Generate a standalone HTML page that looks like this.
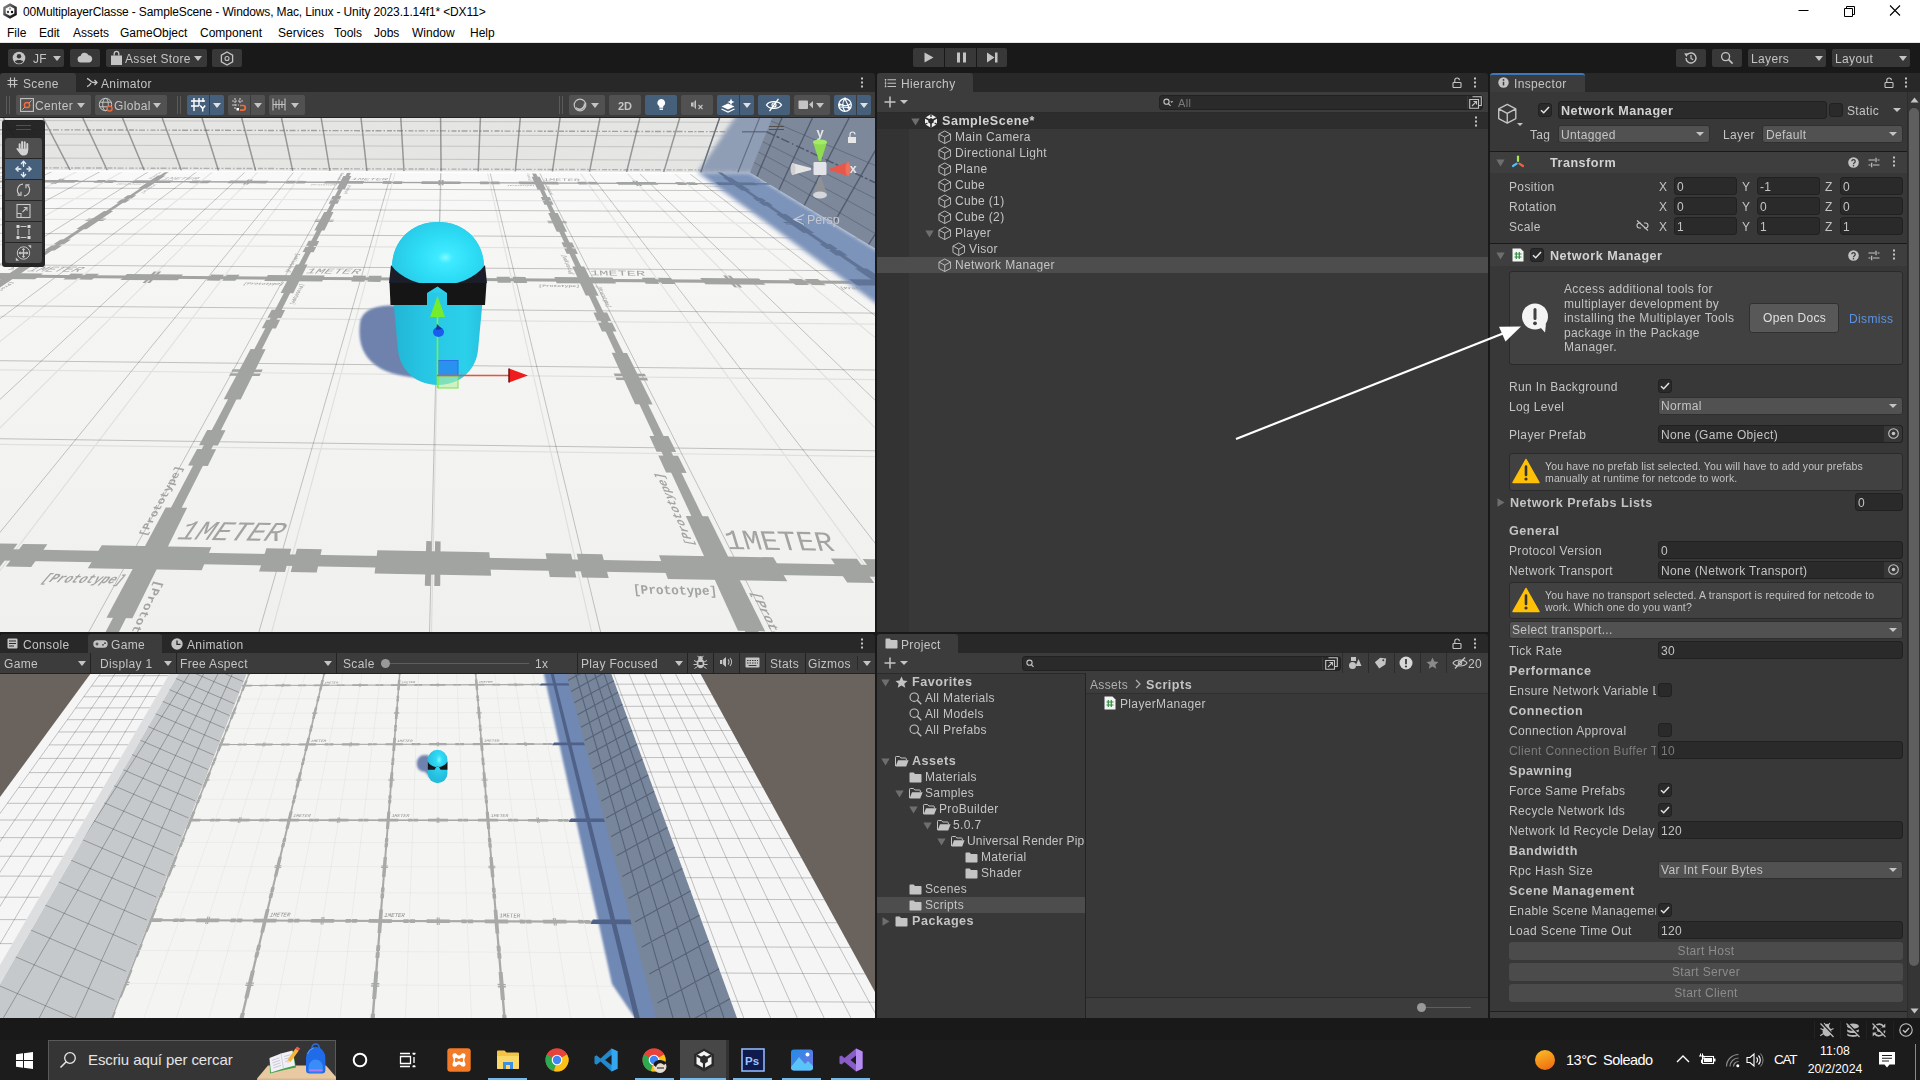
<!DOCTYPE html>
<html lang="en"><head><meta charset="utf-8"><title>Unity</title>
<style>
*{box-sizing:border-box}
html,body{margin:0;padding:0}
body{width:1920px;height:1080px;position:relative;overflow:hidden;background:#191919;font-family:"Liberation Sans",sans-serif;font-size:12px;color:#c4c4c4;line-height:1}
.abs{position:absolute}
.t{position:absolute;white-space:nowrap;line-height:14px;height:14px;font-size:12px;color:#c4c4c4;letter-spacing:.35px}
.t{will-change:transform;transform:translateY(.5px)}
.b{font-weight:bold;font-size:12.6px;letter-spacing:.5px}
.pn{position:absolute;background:#383838}
.tabbar{position:absolute;background:#282828;height:19px}
.tab{position:absolute;top:0;height:19px;background:#3c3c3c;border-radius:3px 3px 0 0}
.btn{position:absolute;background:#383838;border-radius:2px}
.tb{position:absolute;background:#515151;border-radius:2px}
.tbb{position:absolute;background:#46607c;border-radius:2px}
.in{position:absolute;background:#2a2a2a;border:1px solid #212121;border-radius:3px;height:18px}
.dd{position:absolute;background:#515151;border:1px solid #303030;border-radius:3px;height:18px}
.cb{position:absolute;width:14px;height:14px;background:#2a2a2a;border:1px solid #212121;border-radius:3px}
.arr{position:absolute;width:0;height:0;border-left:4px solid transparent;border-right:4px solid transparent;border-top:5px solid #c4c4c4}
.arr.s{border-left-width:4px;border-right-width:4px;border-top-width:4.5px;margin-left:-.5px}
svg{position:absolute;overflow:visible}
.row{position:absolute;height:16px}
.wt{position:absolute;white-space:nowrap;color:#000;font-size:12px;line-height:16px}
.tk{position:absolute;white-space:nowrap;color:#fff;}
</style></head><body>
<!-- title + menu -->
<div class="abs" style="left:0;top:0;width:1920px;height:43px;background:#fff"></div>
<div class="abs" style="left:0;top:42px;width:1920px;height:1px;background:#e5e5e5"></div>
<svg style="left:3px;top:3px" width="14" height="16" viewBox="0 0 14 16"><defs><linearGradient id="ug" x1="0" y1="0" x2="1" y2="1"><stop offset="0" stop-color="#9a9a9a"/><stop offset="0.45" stop-color="#4a4a4a"/><stop offset="1" stop-color="#000"/></linearGradient></defs><path d="M7 0.200L13.800 4.100V11.900L7 15.800L0.200 11.900V4.100Z" fill="url(#ug)"/><path d="M7 3.200L11.300 5.600V10.400L7 12.800L2.700 10.400V5.600Z" fill="#fbfbfb"/><circle cx="7" cy="5.700" r="1.100" fill="#9a9a9a"/><circle cx="5" cy="9" r="1.150" fill="#3a3a3a"/><circle cx="9" cy="9" r="1.200" fill="#111"/></svg>
<div class="wt" id="title" style="left:23px;top:4px;font-size:12px;letter-spacing:-.13px">00MultiplayerClasse - SampleScene - Windows, Mac, Linux - Unity 2023.1.14f1* &lt;DX11&gt;</div>
<svg style="left:1790px;top:0" width="130" height="22" viewBox="0 0 130 22"><path d="M8.5 10.5H18.5" stroke="#000" stroke-width="1"/><path d="M54.5 8.5H62.5V16.5H54.5Z M56.5 8.5V6.5H64.5V14.5H62.5" stroke="#000" stroke-width="1" fill="none"/><path d="M100 5.5L110 15.5M110 5.5L100 15.5" stroke="#000" stroke-width="1.1"/></svg>
<div class="wt" style="left:7px;top:25px">File</div>
<div class="wt" style="left:39px;top:25px">Edit</div>
<div class="wt" style="left:73px;top:25px">Assets</div>
<div class="wt" style="left:120px;top:25px">GameObject</div>
<div class="wt" style="left:200px;top:25px">Component</div>
<div class="wt" style="left:278px;top:25px">Services</div>
<div class="wt" style="left:334px;top:25px">Tools</div>
<div class="wt" style="left:374px;top:25px">Jobs</div>
<div class="wt" style="left:412px;top:25px">Window</div>
<div class="wt" style="left:470px;top:25px">Help</div>
<!-- main toolbar -->
<div class="btn" style="left:8px;top:49px;width:56px;height:18px"></div>
<svg style="left:12px;top:51px" width="14" height="14" viewBox="0 0 14 14"><circle cx="7" cy="7" r="6.3" fill="#c4c4c4"/><circle cx="7" cy="5.2" r="2.2" fill="#383838"/><path d="M2.8 10.6C3.8 8.6 10.2 8.6 11.2 10.6C10 12 8.6 12.6 7 12.6C5.4 12.6 4 12 2.8 10.6Z" fill="#383838"/></svg>
<div class="t" style="left:33px;top:51px">JF</div><div class="arr" style="left:53px;top:56px"></div>
<div class="btn" style="left:70px;top:49px;width:30px;height:18px"></div>
<svg style="left:77px;top:52px" width="16" height="11" viewBox="0 0 16 11"><path d="M4 10.5a3.2 3.2 0 0 1-.4-6.4A4.2 4.2 0 0 1 11.6 3.2 3.7 3.7 0 0 1 12.3 10.5Z" fill="#c4c4c4"/></svg>
<div class="btn" style="left:106px;top:49px;width:101px;height:18px"></div>
<svg style="left:110px;top:50px" width="13" height="16" viewBox="0 0 13 16"><path d="M1 5.5H12V15H1Z" fill="#c4c4c4"/><path d="M4.2 5.5V3.6a2.3 2.3 0 0 1 4.6 0V5.5" stroke="#c4c4c4" stroke-width="1.3" fill="none"/></svg>
<div class="t" style="left:125px;top:51px">Asset Store</div><div class="arr" style="left:194px;top:56px"></div>
<div class="btn" style="left:212px;top:49px;width:30px;height:18px"></div>
<svg style="left:220px;top:51px" width="14" height="15" viewBox="0 0 14 15"><path d="M7 1L12.6 4.2V10.8L7 14L1.4 10.8V4.2Z" stroke="#c4c4c4" stroke-width="1.3" fill="none"/><circle cx="7" cy="7.5" r="2" stroke="#c4c4c4" stroke-width="1.1" fill="none"/></svg>
<!-- play controls -->
<div class="btn" style="left:913px;top:48px;width:31px;height:19px;border-radius:2px 0 0 2px"></div>
<div class="btn" style="left:945px;top:48px;width:31px;height:19px;border-radius:0"></div>
<div class="btn" style="left:977px;top:48px;width:30px;height:19px;border-radius:0 2px 2px 0"></div>
<svg style="left:913px;top:48px" width="94" height="19" viewBox="0 0 94 19"><path d="M11.5 4.5L20.5 9.5L11.5 14.5Z" fill="#c4c4c4"/><path d="M44 4.5H47V14.5H44ZM50 4.5H53V14.5H50Z" fill="#c4c4c4"/><path d="M74 4.5L81.5 9.5L74 14.5ZM82 4.5H84.5V14.5H82Z" fill="#c4c4c4"/></svg>
<!-- right toolbar -->
<div class="btn" style="left:1676px;top:49px;width:30px;height:18px"></div>
<svg style="left:1683px;top:51px" width="15" height="14" viewBox="0 0 15 14"><path d="M3 7a5 5 0 1 0 1.6-3.7" stroke="#c4c4c4" stroke-width="1.4" fill="none"/><path d="M1.2 2.2L5.6 2.6L3.4 6Z" fill="#c4c4c4"/><path d="M8 4V7.4L10.2 8.8" stroke="#c4c4c4" stroke-width="1.2" fill="none"/></svg>
<div class="btn" style="left:1712px;top:49px;width:30px;height:18px"></div>
<svg style="left:1720px;top:51px" width="14" height="14" viewBox="0 0 14 14"><circle cx="5.6" cy="5.6" r="4" stroke="#c4c4c4" stroke-width="1.3" fill="none"/><path d="M8.6 8.6L12.6 12.6" stroke="#c4c4c4" stroke-width="1.6"/></svg>
<div class="btn" style="left:1748px;top:49px;width:78px;height:18px"></div>
<div class="t" style="left:1751px;top:51px">Layers</div><div class="arr" style="left:1815px;top:56px"></div>
<div class="btn" style="left:1832px;top:49px;width:78px;height:18px"></div>
<div class="t" style="left:1835px;top:51px">Layout</div><div class="arr" style="left:1899px;top:56px"></div>
<!-- scene panel -->
<div class="tabbar" style="left:0;top:73px;width:875px;border-radius:3px 3px 0 0"></div>
<div class="tab" style="left:0;top:73px;width:76px"></div>
<svg style="left:7px;top:77px" width="11" height="11" viewBox="0 0 11 11"><path d="M3.5 0.5V10.5M7.5 0.5V10.5M0.5 3.5H10.5M0.5 7.5H10.5" stroke="#c4c4c4" stroke-width="1.2" fill="none"/></svg>
<div class="t" style="left:23px;top:76px">Scene</div>
<svg style="left:86px;top:77px" width="12" height="11" viewBox="0 0 12 11"><path d="M1 1.5C4 2 4.5 5.5 8 5.5H11M1 9.5C3 9.5 4 7.5 5 6" stroke="#c4c4c4" stroke-width="1.3" fill="none"/><path d="M8.5 3L11 5.5L8.5 8" stroke="#c4c4c4" stroke-width="1.3" fill="none"/></svg>
<div class="t" style="left:101px;top:76px">Animator</div>
<svg style="left:860px;top:77px" width="4" height="12" viewBox="0 0 4 12"><rect x="1" y="0.5" width="2" height="2" fill="#c4c4c4"/><rect x="1" y="4.5" width="2" height="2" fill="#c4c4c4"/><rect x="1" y="8.5" width="2" height="2" fill="#c4c4c4"/></svg>
<div class="abs" style="left:0;top:92px;width:875px;height:26px;background:#3c3c3c"></div>
<div class="abs" style="left:0;top:117px;width:875px;height:1px;background:#232323"></div>
<div class="abs" style="left:6px;top:96px;width:1px;height:18px;background:#5a5a5a"></div><div class="abs" style="left:9px;top:96px;width:1px;height:18px;background:#5a5a5a"></div>
<div class="abs" style="left:177px;top:96px;width:1px;height:18px;background:#5a5a5a"></div><div class="abs" style="left:180px;top:96px;width:1px;height:18px;background:#5a5a5a"></div>
<div class="abs" style="left:559px;top:96px;width:1px;height:18px;background:#5a5a5a"></div><div class="abs" style="left:562px;top:96px;width:1px;height:18px;background:#5a5a5a"></div>
<div class="tb" style="left:16px;top:95px;width:75px;height:20px"></div>
<svg style="left:20px;top:98px" width="14" height="14" viewBox="0 0 14 14"><rect x="0.6" y="0.6" width="12.8" height="12.8" stroke="#c4c4c4" stroke-width="1.1" fill="none"/><path d="M2.5 11.5L11.5 2.5" stroke="#c4c4c4" stroke-width="0.9"/><circle cx="7" cy="7" r="2.6" stroke="#f26b3a" stroke-width="1.5" fill="#515151"/></svg>
<div class="t" style="left:35px;top:98px">Center</div><div class="arr" style="left:77px;top:103px"></div>
<div class="tb" style="left:95px;top:95px;width:72px;height:20px"></div>
<svg style="left:98px;top:97px" width="16" height="16" viewBox="0 0 16 16"><circle cx="7.5" cy="7.5" r="6.2" stroke="#c4c4c4" stroke-width="1" fill="none"/><ellipse cx="7.5" cy="7.5" rx="2.8" ry="6.2" stroke="#c4c4c4" stroke-width="1" fill="none"/><path d="M1.5 5.2H13.5M1.5 9.8H13.5" stroke="#c4c4c4" stroke-width="1"/><circle cx="11.6" cy="11.6" r="2.5" stroke="#f26b3a" stroke-width="1.4" fill="#515151"/></svg>
<div class="t" style="left:114px;top:98px">Global</div><div class="arr" style="left:153px;top:103px"></div>
<div class="tbb" style="left:187px;top:95px;width:22px;height:20px;border-radius:2px 0 0 2px"></div><div class="tbb" style="left:210px;top:95px;width:14px;height:20px;border-radius:0 2px 2px 0"></div>
<svg style="left:190px;top:97px" width="17" height="16" viewBox="0 0 17 16"><path d="M1 4H15M1 9H9M4 1V14M9 1V9M13 1V5" stroke="#fff" stroke-width="1.4" fill="none"/><path d="M10.2 8.5L12.7 11.5L15.2 8.5M12.7 11.5V14.5" stroke="#fff" stroke-width="1.5" fill="none"/></svg>
<div class="arr" style="left:213px;top:103px;border-top-color:#e0e0e0"></div>
<div class="tb" style="left:228px;top:95px;width:22px;height:20px;border-radius:2px 0 0 2px"></div><div class="tb" style="left:251px;top:95px;width:14px;height:20px;border-radius:0 2px 2px 0"></div>
<svg style="left:231px;top:97px" width="17" height="16" viewBox="0 0 17 16"><path d="M1 4H13M1 8H8M4 1V12M9 1V7" stroke="#c4c4c4" stroke-width="1.2" stroke-dasharray="2 1" fill="none"/><rect x="5.5" y="11" width="2.5" height="2.5" fill="#fff"/><path d="M9 8.5H12a2.3 2.3 0 0 1 0 4.6H9" stroke="#f26b3a" stroke-width="1.7" fill="none"/></svg>
<div class="arr" style="left:254px;top:103px"></div>
<div class="tb" style="left:269px;top:95px;width:36px;height:20px"></div>
<svg style="left:272px;top:98px" width="14" height="13" viewBox="0 0 14 13"><path d="M1 0.5V12.5M13 0.5V12.5M4 3V10M7 1.5V11.5M10 3V10M1 6.5H13" stroke="#c4c4c4" stroke-width="1.1" fill="none"/></svg>
<div class="arr" style="left:291px;top:103px"></div>
<!-- right side scene toolbar -->
<div class="tb" style="left:569px;top:95px;width:36px;height:20px"></div>
<svg style="left:573px;top:98px" width="15" height="14" viewBox="0 0 15 14"><circle cx="7" cy="7" r="5.800" stroke="#c4c4c4" stroke-width="1.200" fill="none"/><path d="M11.300 5.500A4.600 4.600 0 0 1 3.200 9.600A4.800 4.800 0 0 0 11.300 5.500Z" fill="#c4c4c4" stroke="#c4c4c4" stroke-width="1.200"/></svg>
<div class="arr" style="left:591px;top:103px"></div>
<div class="tb" style="left:609px;top:95px;width:32px;height:20px"></div>
<div class="t b" style="left:618px;top:98px;font-size:11px;letter-spacing:0">2D</div>
<div class="tbb" style="left:645px;top:95px;width:32px;height:20px"></div>
<svg style="left:656px;top:98px" width="10.500" height="14" viewBox="0 0 12 16"><path d="M6 1.2a4.3 4.3 0 0 1 2.3 8V11H3.7V9.2A4.3 4.3 0 0 1 6 1.2Z" fill="#fff"/><rect x="4" y="12" width="4" height="1.6" fill="#fff"/></svg>
<div class="tb" style="left:681px;top:95px;width:32px;height:20px"></div>
<svg style="left:690px;top:98px" width="15" height="13" viewBox="0 0 15 13"><path d="M1 4.5H3L6 2V11L3 8.5H1Z" fill="#c4c4c4"/><path d="M4 2V10" stroke="#515151" stroke-width="0.8"/><path d="M8.5 7L12.5 11M12.5 7L8.5 11" stroke="#c4c4c4" stroke-width="1.1"/></svg>
<div class="tbb" style="left:717px;top:95px;width:22px;height:20px;border-radius:2px 0 0 2px"></div><div class="tbb" style="left:740px;top:95px;width:14px;height:20px;border-radius:0 2px 2px 0"></div>
<svg style="left:720px;top:97px" width="17" height="16" viewBox="0 0 17 16"><path d="M1.5 9.5L8 6.5L14.5 9.5L8 12.5Z" fill="#fff"/><path d="M1.5 12L8 15L14.5 12" stroke="#fff" stroke-width="1.2" fill="none"/><path d="M11 1.5L12 4L14.5 5L12 6L11 8.5L10 6L7.5 5L10 4Z" fill="#fff"/></svg>
<div class="arr" style="left:743px;top:103px;border-top-color:#e0e0e0"></div>
<div class="tbb" style="left:758px;top:95px;width:32px;height:20px"></div>
<svg style="left:765px;top:98px" width="18" height="14" viewBox="0 0 18 14"><path d="M1.5 7C4 2.5 14 2.5 16.5 7C14 11.5 4 11.5 1.5 7Z" stroke="#fff" stroke-width="1.3" fill="none"/><circle cx="9" cy="7" r="2" stroke="#fff" stroke-width="1.2" fill="none"/><path d="M13.5 0.8L4.5 13.2" stroke="#fff" stroke-width="1.4"/></svg>
<div class="tb" style="left:794px;top:95px;width:36px;height:20px"></div>
<svg style="left:798px;top:99px" width="16" height="11" viewBox="0 0 16 11"><rect x="0.5" y="1.5" width="9.5" height="8.5" rx="1" fill="#c4c4c4"/><path d="M11 5.5L15 2V9.5Z" fill="#c4c4c4"/></svg>
<div class="arr" style="left:816px;top:103px"></div>
<div class="tbb" style="left:834px;top:95px;width:22px;height:20px;border-radius:2px 0 0 2px"></div><div class="tbb" style="left:857px;top:95px;width:14px;height:20px;border-radius:0 2px 2px 0"></div>
<svg style="left:837px;top:97px" width="16" height="16" viewBox="0 0 16 16"><circle cx="8" cy="8" r="6.3" stroke="#fff" stroke-width="1.3" fill="none"/><path d="M8 1.7C5 5 5 11 8 14.3M2 6.5C6 9.5 11 9.5 14 6.5M8 1.7L12 10.5L2.5 10" stroke="#fff" stroke-width="1.1" fill="none"/><circle cx="8" cy="1.9" r="1.4" fill="#fff"/><circle cx="2.4" cy="8" r="1.3" fill="#fff"/><circle cx="11.6" cy="10.6" r="1.4" fill="#fff"/></svg>
<div class="arr" style="left:860px;top:103px;border-top-color:#e0e0e0"></div>
<svg class="abs" style="left:0;top:118px;overflow:hidden;will-change:transform" width="875" height="514" viewBox="0 0 875 514">
<defs><linearGradient id="sf" x1="0" y1="0" x2="0" y2="1"><stop offset="0" stop-color="#fbfbfb"/><stop offset="0.25" stop-color="#f6f6f5"/><stop offset="1" stop-color="#f0f0ef"/></linearGradient><filter id="bl" x="-20%" y="-20%" width="140%" height="140%"><feGaussianBlur stdDeviation="2.2"/></filter><filter id="bl1" x="-20%" y="-20%" width="140%" height="140%"><feGaussianBlur stdDeviation="1.2"/></filter><radialGradient id="cap" cx="0.58" cy="0.5" r="0.7"><stop offset="0" stop-color="#7dfaff"/><stop offset="0.12" stop-color="#3eeaff"/><stop offset="0.45" stop-color="#2ddcf5"/><stop offset="1" stop-color="#27bfdf"/></radialGradient><linearGradient id="capb" x1="0" y1="0" x2="1" y2="0"><stop offset="0" stop-color="#22b4d4"/><stop offset="0.35" stop-color="#27c6e4"/><stop offset="0.8" stop-color="#2bd0ea"/><stop offset="1" stop-color="#27c0de"/></linearGradient><clipPath id="fl"><rect x="0" y="50" width="875" height="464"/></clipPath></defs>
<rect width="875" height="514" fill="url(#sf)"/>
<g clip-path="url(#fl)">
<path d="M-2448.2 715.3L-180.3 51.4M-2250.4 721.8L-133.6 51.6M-2049.1 728.3L-86.7 51.7M-1844.2 735L-39.6 51.9M-1635.7 741.8L7.6 52M-1423.5 748.7L55 52.2M-1207.4 755.7L102.6 52.3M-987.3 762.9L150.3 52.5M-763.2 770.2L198.3 52.6M-534.9 777.6L246.4 52.8M-302.3 785.2L294.7 52.9M-65.3 792.9L343.2 53.1M176.2 800.7L391.9 53.2M422.4 808.7L440.7 53.4M673.5 816.9L489.8 53.5M929.4 825.2L539 53.7M1190.5 833.7L588.4 53.9M1456.9 842.4L638 54M1728.6 851.2L687.8 54.2M2006 860.3L737.8 54.3M2289.1 869.5L788 54.5M2578.1 878.9L838.4 54.6M2873.3 888.5L889 54.8M3174.8 898.3L939.7 55M3482.8 908.3L990.7 55.1M3797.5 918.6L1041.9 55.3M4119.3 929L1093.2 55.4M4448.2 939.7L1144.8 55.6M4784.6 950.7L1196.6 55.8M5128.7 961.9L1248.5 55.9M-2042 591.1L4499.4 765.3M-1431.2 413.6L3305.8 501.2M-1061.2 306.1L2655.2 357.3M-813.1 234L2245.7 266.7M-635.2 182.3L1964.2 204.4M-501.3 143.4L1758.8 159M-397 113.1L1602.4 124.4M-313.4 88.8L1479.2 97.1M-244.8 68.9L1379.8 75.1M-187.7 52.3L1297.8 57" stroke="#000" stroke-opacity="0.24" stroke-width="0.9" fill="none"/>
<path d="M-2282.5 720.7L-141.1 51.6M-2094.6 726.8L-97.2 51.7M-1903.7 733L-53.2 51.8M-1512.2 745.8L35.3 52.1M-1311.4 752.3L79.7 52.3M-1107.3 759L124.4 52.4M-688.4 772.6L214.1 52.7M-473.5 779.6L259.2 52.8M-254.7 786.7L304.5 53M194.5 801.3L395.5 53.2M425.2 808.8L441.3 53.4M660.2 816.5L487.2 53.5M1143.2 832.2L579.5 53.8M1391.5 840.3L625.9 54M1644.6 848.5L672.5 54.1M2165.4 865.4L766.2 54.4M2433.4 874.2L813.3 54.6M2706.7 883.1L860.5 54.7M3269.8 901.4L955.6 55M3559.9 910.8L1003.3 55.2M3856 920.5L1051.3 55.3M4466.9 940.3L1147.7 55.6M4782 950.6L1196.2 55.8M5103.9 961.1L1244.8 55.9M-1961.4 567.7L4332.4 728.3M-1078.9 311.2L2685.1 363.9M-842.7 242.6L2293.5 277.3M-669.9 192.4L2018.5 216.4M-434 123.9L1657.6 136.6M-349.9 99.4L1532.9 109M-280.5 79.2L1431.4 86.5" stroke="#000" stroke-opacity="0.08" stroke-width="1.2" fill="none"/>
<g fill="#a2a4a2"><polygon points="-2475,714.5 -2459.6,715 -183,51.4 -186.6,51.4"/><polygon points="-867.2,245.5 -839.2,245.8 -831.2,243.5 -859,243.2"/><polygon points="-854.2,241.8 -826.5,242.1 -818.6,239.8 -846.2,239.5"/><polygon points="-362.7,100.5 -345.1,100.6 -342.1,99.7 -359.6,99.6"/><polygon points="-357.8,99.1 -340.3,99.2 -337.3,98.3 -354.7,98.2"/><polygon points="-2123,610.3 -2095.6,611 -1962.3,572.1 -1988.5,571.4"/><polygon points="-1960.4,563.3 -1934.6,564 -1817.3,529.7 -1842,529.1"/><polygon points="-1616.4,463.9 -1593.9,464.4 -1257.7,366.1 -1276.8,365.8"/><polygon points="-1145.7,328 -1128,328.2 -1075.9,313 -1093.1,312.7"/><polygon points="-1081.8,309.5 -1064.8,309.7 -1016.7,295.7 -1033.2,295.5"/><polygon points="-935.6,267.3 -920.1,267.4 -760.7,220.8 -774.5,220.7"/><polygon points="-707.2,201.3 -694.2,201.4 -666.6,193.3 -679.3,193.2"/><polygon points="-673.3,191.5 -660.6,191.6 -634.6,184 -647,183.9"/><polygon points="-592.8,168.2 -581,168.3 -488.2,141.2 -499,141.1"/><polygon points="-458.2,129.3 -447.9,129.4 -430.8,124.4 -441,124.4"/><polygon points="-437.2,123.3 -427.1,123.3 -410.9,118.6 -420.8,118.5"/><polygon points="-386.3,108.6 -376.8,108.6 -316.2,90.9 -325.1,90.9"/><polygon points="-297.7,83 -289.1,83 -277.6,79.6 -286,79.6"/><polygon points="-283.4,78.9 -275,78.9 -263.9,75.6 -272.2,75.6"/><polygon points="-248.4,68.7 -240.4,68.8 -197.7,56.3 -205.2,56.3"/><polygon points="-1717.7,739.1 -1701.3,739.6 -7.2,52 -10.9,52"/><polygon points="-512.4,249.5 -483.6,249.8 -477.7,247.4 -506.4,247.1"/><polygon points="-502.8,245.6 -474.2,246 -468.5,243.6 -496.9,243.3"/><polygon points="-141,101.7 -123.1,101.7 -120.9,100.8 -138.8,100.8"/><polygon points="-137.4,100.2 -119.6,100.3 -117.4,99.4 -135.2,99.3"/><polygon points="-1451.5,628.8 -1422.4,629.6 -1321.8,588.6 -1349.4,587.9"/><polygon points="-1328.2,579.4 -1300.9,580 -1212.6,544.1 -1238.6,543.4"/><polygon points="-1068.7,475.3 -1045.2,475.8 -794.7,373.7 -814.5,373.4"/><polygon points="-716.9,334.3 -698.6,334.5 -660,318.8 -677.8,318.6"/><polygon points="-669.4,315.2 -651.8,315.5 -616.3,301 -633.4,300.8"/><polygon points="-561,271.8 -545.1,272 -427.9,224.2 -442,224.1"/><polygon points="-392.5,204.2 -379.1,204.3 -358.9,196.1 -372,196"/><polygon points="-367.5,194.2 -354.5,194.3 -335.5,186.6 -348.2,186.4"/><polygon points="-308.3,170.5 -296.3,170.6 -228.5,143 -239.6,142.9"/><polygon points="-209.7,130.9 -199.1,131 -186.7,125.9 -197.1,125.9"/><polygon points="-194.3,124.8 -184,124.8 -172.2,120 -182.3,119.9"/><polygon points="-157.1,109.8 -147.4,109.9 -103.3,91.9 -112.3,91.9"/><polygon points="-92.4,83.9 -83.7,83.9 -75.3,80.5 -83.8,80.5"/><polygon points="-82,79.7 -73.4,79.7 -65.4,76.5 -73.8,76.4"/><polygon points="-56.4,69.5 -48.3,69.5 -17.3,56.9 -25,56.9"/><polygon points="-908.4,765.4 -890.9,766 171.1,52.5 167.3,52.5"/><polygon points="-147.2,253.5 -117.5,253.9 -113.9,251.4 -143.4,251.1"/><polygon points="-141.1,249.6 -111.7,249.9 -108.2,247.5 -137.4,247.2"/><polygon points="84.6,102.8 102.9,102.9 104.2,102 86,101.9"/><polygon points="86.9,101.4 105,101.4 106.3,100.5 88.3,100.5"/><polygon points="-739.9,648.4 -709,649.2 -645.1,606 -674.3,605.2"/><polygon points="-660.7,596.3 -631.8,597 -575.9,559.2 -603.3,558.5"/><polygon points="-495,487.2 -470.3,487.7 -313.4,381.6 -334,381.3"/><polygon points="-272.6,340.8 -253.6,341.1 -229.6,324.9 -248,324.6"/><polygon points="-242.8,321.2 -224.5,321.4 -202.5,306.5 -220.1,306.3"/><polygon points="-174.8,276.5 -158.3,276.7 -85.9,227.7 -100.5,227.5"/><polygon points="-69.6,207.2 -55.9,207.3 -43.4,198.9 -56.8,198.8"/><polygon points="-54.1,197 -40.7,197.1 -29,189.2 -42,189.1"/><polygon points="-17.3,172.8 -4.9,172.9 36.6,144.8 25.4,144.7"/><polygon points="43.9,132.5 54.6,132.6 62.3,127.4 51.7,127.4"/><polygon points="53.4,126.3 63.9,126.3 71.1,121.4 60.8,121.4"/><polygon points="76.4,111.1 86.3,111.2 113.2,92.9 104.1,92.9"/><polygon points="116.4,84.8 125.2,84.8 130.3,81.4 121.6,81.3"/><polygon points="122.8,80.6 131.5,80.6 136.4,77.3 127.8,77.2"/><polygon points="138.5,70.2 146.8,70.2 165.6,57.5 157.9,57.5"/><polygon points="-41.5,793.6 -22.7,794.3 351.8,53.1 348,53.1"/><polygon points="229,257.7 259.6,258.1 260.8,255.6 230.4,255.2"/><polygon points="231.3,253.7 261.5,254.1 262.7,251.6 232.6,251.3"/><polygon points="314.4,104 332.9,104.1 333.4,103.2 314.9,103.1"/><polygon points="315.2,102.5 333.6,102.6 334.1,101.7 315.7,101.6"/><polygon points="15.6,669.2 48.4,670.1 71,624.4 40.1,623.6"/><polygon points="45.1,614.1 75.7,614.9 95.4,575.1 66.4,574.4"/><polygon points="106.5,499.7 132.4,500.3 187.1,389.8 165.7,389.5"/><polygon points="188.1,347.6 207.8,347.9 216.1,331.2 197.1,330.9"/><polygon points="199,327.3 217.9,327.6 225.5,312.2 207.2,312"/><polygon points="223.7,281.3 240.7,281.5 265.6,231.2 250.6,231.1"/><polygon points="261.8,210.3 275.9,210.4 280.1,201.8 266.4,201.7"/><polygon points="267.4,199.8 281.1,200 285.1,191.9 271.7,191.8"/><polygon points="280.6,175.1 293.3,175.2 307.5,146.6 296,146.5"/><polygon points="302.6,134.1 313.6,134.2 316.2,129 305.4,128.9"/><polygon points="306,127.8 316.8,127.9 319.2,122.9 308.7,122.8"/><polygon points="314.3,112.4 324.4,112.5 333.5,94 324.2,93.9"/><polygon points="328.6,85.7 337.6,85.8 339.3,82.3 330.5,82.2"/><polygon points="330.9,81.5 339.7,81.5 341.4,78.1 332.7,78.1"/><polygon points="336.5,71 344.9,71 351.3,58.1 343.4,58.1"/><polygon points="889.3,823.9 909.6,824.6 535.2,53.7 531.3,53.7"/><polygon points="616.6,262.1 648.2,262.4 646.8,259.8 615.5,259.5"/><polygon points="614.8,258 646,258.3 644.7,255.8 613.7,255.4"/><polygon points="548.3,105.2 567.2,105.3 566.7,104.3 547.9,104.3"/><polygon points="547.7,103.7 566.5,103.8 566,102.9 547.3,102.8"/><polygon points="819.1,691.3 854,692.3 830,643.9 797.2,643.1"/><polygon points="792.6,633.1 825,633.9 804.2,592 773.6,591.2"/><polygon points="738,512.8 765.2,513.4 708.1,398.3 685.8,398"/><polygon points="666.1,354.6 686.6,354.9 678,337.7 658.3,337.4"/><polygon points="656.6,333.7 676.2,334 668.3,318.1 649.4,317.9"/><polygon points="635.1,286.3 652.6,286.5 627,234.9 611.7,234.7"/><polygon points="602,213.5 616.5,213.6 612.1,204.8 598,204.7"/><polygon points="597.1,202.8 611.2,202.9 607.1,194.6 593.4,194.5"/><polygon points="585.7,177.6 598.7,177.7 584.2,148.5 572.4,148.4"/><polygon points="566.7,135.8 577.9,135.9 575.3,130.6 564.3,130.5"/><polygon points="563.8,129.3 574.7,129.4 572.2,124.4 561.5,124.3"/><polygon points="556.7,113.7 567,113.8 557.7,95.1 548.2,95"/><polygon points="544.4,86.7 553.5,86.7 551.8,83.2 542.8,83.1"/><polygon points="542.4,82.4 551.4,82.4 549.7,79 540.9,78.9"/><polygon points="537.6,71.7 546.1,71.8 539.7,58.7 531.7,58.7"/><polygon points="1891.5,856.5 1913.4,857.3 721.2,54.3 717.3,54.3"/><polygon points="1016.2,266.5 1048.7,266.9 1044.7,264.2 1012.4,263.9"/><polygon points="1010.2,262.3 1042.3,262.7 1038.4,260.1 1006.4,259.7"/><polygon points="786.6,106.4 805.9,106.5 804.4,105.6 785.2,105.5"/><polygon points="784.4,104.9 803.5,105 802.1,104 783.1,104"/><polygon points="1675.3,714.9 1712.5,715.9 1635.8,664.6 1601,663.7"/><polygon points="1585.6,653.2 1620,654 1553.8,609.8 1521.4,609"/><polygon points="1401.7,526.6 1430.4,527.2 1251,407.2 1227.7,406.9"/><polygon points="1162.5,362 1183.7,362.3 1157,344.4 1136.5,344.1"/><polygon points="1131,340.3 1151.3,340.6 1126.8,324.2 1107.2,324"/><polygon points="1059.9,291.4 1078.1,291.6 998.9,238.7 983.1,238.5"/><polygon points="951.4,216.7 966.3,216.8 952.8,207.9 938.3,207.7"/><polygon points="935.5,205.8 949.9,205.9 937.3,197.5 923.3,197.3"/><polygon points="898.1,180 911.4,180.1 866.9,150.4 854.9,150.3"/><polygon points="836.3,137.5 847.8,137.6 839.7,132.2 828.5,132.1"/><polygon points="826.8,130.9 837.9,131 830.2,125.9 819.3,125.8"/><polygon points="803.7,115.1 814.2,115.1 785.8,96.1 776.1,96.1"/><polygon points="763.9,87.7 773.2,87.7 767.8,84.1 758.6,84.1"/><polygon points="757.5,83.3 766.6,83.3 761.4,79.9 752.5,79.8"/><polygon points="741.9,72.5 750.5,72.6 730.8,59.4 722.7,59.3"/><polygon points="2973.6,891.7 2997.3,892.5 910,54.9 906,54.8"/><polygon points="1428.4,271.2 1461.9,271.5 1455,268.8 1421.7,268.4"/><polygon points="1417.7,266.8 1450.9,267.2 1444.1,264.5 1411.2,264.1"/><polygon points="1029.3,107.7 1048.9,107.8 1046.5,106.8 1026.9,106.7"/><polygon points="1025.5,106.1 1045,106.2 1042.6,105.3 1023.2,105.2"/><polygon points="2589.7,740.1 2629.4,741.2 2493,686.7 2455.9,685.7"/><polygon points="2428.4,674.5 2464.9,675.5 2347.7,628.6 2313.4,627.8"/><polygon points="2100.2,541.1 2130.4,541.8 1816.9,416.5 1792.7,416.1"/><polygon points="1678.1,369.5 1700.2,369.9 1654,351.4 1632.7,351.1"/><polygon points="1623.1,347.2 1644.1,347.4 1601.8,330.5 1581.5,330.3"/><polygon points="1499,296.7 1517.7,296.9 1381.6,242.5 1365.3,242.4"/><polygon points="1310.4,220 1325.7,220.2 1302.6,211 1287.8,210.9"/><polygon points="1282.9,208.9 1297.7,209 1276.1,200.4 1261.7,200.2"/><polygon points="1218.2,182.6 1231.8,182.7 1156,152.4 1143.7,152.3"/><polygon points="1111.6,139.2 1123.3,139.3 1109.5,133.8 1098.1,133.8"/><polygon points="1095.2,132.6 1106.6,132.6 1093.5,127.4 1082.3,127.3"/><polygon points="1055.5,116.4 1066.2,116.5 1018,97.2 1008.1,97.2"/><polygon points="987.1,88.6 996.6,88.7 987.4,85 978.1,85"/><polygon points="976.2,84.2 985.5,84.2 976.7,80.7 967.6,80.7"/><polygon points="949.4,73.3 958.2,73.4 924.8,60 916.6,60"/><polygon points="4145.5,929.9 4171.1,930.7 1101.4,55.5 1097.4,55.4"/><polygon points="1853.6,275.9 1888.2,276.3 1878.3,273.5 1843.9,273.1"/><polygon points="1838.1,271.4 1872.3,271.8 1862.6,269.1 1828.6,268.7"/><polygon points="1276.6,108.9 1296.6,109 1293.1,108 1273.2,107.9"/><polygon points="1271.2,107.4 1291,107.5 1287.6,106.5 1267.8,106.4"/><polygon points="3568.3,767 3610.9,768.2 3406.6,710.2 3367,709.1"/><polygon points="3325.8,697.3 3364.7,698.3 3190.1,648.6 3153.7,647.8"/><polygon points="2836.3,556.4 2868.1,557.1 2407.6,426.2 2382.3,425.8"/><polygon points="2214.3,377.4 2237.3,377.8 2170,358.6 2147.9,358.3"/><polygon points="2133.8,354.3 2155.7,354.6 2094.2,337.1 2073.2,336.8"/><polygon points="1952.9,302.2 1972.3,302.4 1775.5,246.5 1758.8,246.3"/><polygon points="1679.3,223.5 1695,223.6 1661.9,214.2 1646.6,214.1"/><polygon points="1639.6,212 1654.8,212.2 1623.7,203.4 1608.9,203.2"/><polygon points="1546.1,185.2 1560.1,185.3 1451.4,154.4 1438.9,154.3"/><polygon points="1392.8,141 1404.7,141.1 1385,135.5 1373.4,135.4"/><polygon points="1369.2,134.2 1380.8,134.3 1362.1,129 1350.7,128.9"/><polygon points="1312.2,117.8 1323.1,117.9 1254.3,98.4 1244.3,98.3"/><polygon points="1214.2,89.6 1223.8,89.7 1210.8,86 1201.4,85.9"/><polygon points="1198.6,85.1 1208,85.2 1195.5,81.6 1186.3,81.6"/><polygon points="1160.3,74.1 1169.2,74.2 1121.8,60.7 1113.5,60.6"/><polygon points="5418.8,971.3 5446.7,972.2 1295.7,56.1 1291.6,56.1"/><polygon points="2292.6,280.8 2328.4,281.2 2315.2,278.3 2279.7,277.9"/><polygon points="2272,276.2 2307.3,276.6 2294.4,273.8 2259.4,273.4"/><polygon points="1528.5,110.2 1548.9,110.3 1544.4,109.3 1524.1,109.2"/><polygon points="1521.4,108.6 1541.6,108.7 1537.2,107.7 1517,107.6"/><polygon points="4618.1,796 4663.9,797.2 4382.4,735.2 4340.1,734.2"/><polygon points="4283.2,721.5 4324.9,722.6 4085.5,669.9 4046.8,669"/><polygon points="3613,572.5 3646.6,573.2 3024.6,436.3 2998.2,435.9"/><polygon points="2772.3,385.7 2796.2,386 2706.2,366.2 2683.2,365.8"/><polygon points="2664.3,361.7 2687.1,362 2605,343.9 2583.2,343.6"/><polygon points="2422.5,307.9 2442.5,308.1 2181.4,250.6 2164.1,250.4"/><polygon points="2058.6,227 2074.8,227.2 2031,217.5 2015.3,217.4"/><polygon points="2006,215.3 2021.6,215.4 1980.6,206.4 1965.4,206.3"/><polygon points="1882.3,187.8 1896.7,187.9 1753.6,156.4 1740.8,156.4"/><polygon points="1680,142.8 1692.2,142.9 1666.4,137.2 1654.4,137.2"/><polygon points="1648.9,135.9 1660.8,136 1636.2,130.6 1624.6,130.5"/><polygon points="1574,119.3 1585.1,119.3 1495,99.5 1484.8,99.4"/><polygon points="1445.3,90.7 1455,90.7 1438.1,87 1428.4,86.9"/><polygon points="1424.8,86.1 1434.4,86.1 1418.1,82.6 1408.6,82.5"/><polygon points="1374.6,74.9 1383.7,75 1321.7,61.3 1313.3,61.3"/><polygon points="-1438.8,415.8 3319.8,504.3 3255.6,490.1 -1403.6,405.6"/><polygon points="-1240.4,435.7 -1235.2,435.8 -1117.5,396.1 -1122.4,396"/><polygon points="-1232.1,435.9 -1226.9,436 -1109.8,396.2 -1114.6,396.1"/><polygon points="-709.9,445.9 -704.5,446 -622.3,404.7 -627.3,404.6"/><polygon points="-701.2,446.1 -695.8,446.2 -614.2,404.9 -619.2,404.8"/><polygon points="-155.4,456.6 -149.7,456.7 -106.3,413.8 -111.6,413.7"/><polygon points="-146.3,456.8 -140.6,456.9 -97.9,413.9 -103.1,413.8"/><polygon points="424.8,467.8 430.7,467.9 431.8,423.2 426.3,423.1"/><polygon points="434.3,468 440.2,468.1 440.6,423.4 435.1,423.3"/><polygon points="1032.3,479.5 1038.5,479.6 993.3,433 987.6,432.9"/><polygon points="1042.3,479.7 1048.5,479.8 1002.5,433.2 996.8,433.1"/><polygon points="1669.3,491.8 1675.8,491.9 1580,443.3 1574,443.2"/><polygon points="1679.8,492 1686.3,492.1 1589.6,443.5 1583.6,443.4"/><polygon points="2337.9,504.6 2344.8,504.8 2193.5,454.1 2187.2,454"/><polygon points="2348.9,504.8 2355.8,505 2203.5,454.3 2197.2,454.1"/><polygon points="3040.6,518.2 3047.8,518.3 2835.6,465.3 2829.1,465.2"/><polygon points="3052.1,518.4 3059.3,518.5 2846.2,465.5 2839.6,465.4"/><polygon points="-1456.9,421.1 -1406.8,422 -1338.1,401.5 -1386.5,400.6"/><polygon points="-1356.5,423 -1333.7,423.4 -1267.6,402.8 -1289.5,402.4"/><polygon points="-1328.7,423.5 -1305.9,423.9 -1240.7,403.2 -1262.7,402.9"/><polygon points="-1255.1,424.9 -1153,426.8 -1093.1,405.9 -1191.7,404.1"/><polygon points="-1101.6,427.8 -1078.3,428.2 -1021.1,407.2 -1043.5,406.8"/><polygon points="-1073.2,428.3 -1049.9,428.8 -993.7,407.7 -1016.1,407.3"/><polygon points="-998.1,429.7 -893.7,431.7 -843,410.4 -943.6,408.6"/><polygon points="-841.2,432.7 -817.4,433.1 -769.5,411.7 -792.4,411.3"/><polygon points="-812.2,433.2 -788.4,433.7 -741.5,412.2 -764.4,411.8"/><polygon points="-735.4,434.7 -628.8,436.7 -587.7,414.9 -690.4,413.1"/><polygon points="-575.1,437.7 -550.9,438.2 -512.6,416.3 -536,415.9"/><polygon points="-545.5,438.3 -521.2,438.7 -484.1,416.8 -507.4,416.4"/><polygon points="-467,439.7 -358,441.8 -327,419.6 -431.9,417.7"/><polygon points="-303.2,442.8 -278.4,443.3 -250.3,421 -274.2,420.6"/><polygon points="-272.9,443.4 -248.1,443.9 -221.1,421.5 -245,421.1"/><polygon points="-192.7,444.9 -81.3,447 -60.7,424.4 -167.9,422.5"/><polygon points="-25.2,448.1 0.1,448.5 17.6,425.8 -6.8,425.4"/><polygon points="5.8,448.6 31.2,449.1 47.4,426.3 23,425.9"/><polygon points="87.8,450.2 201.7,452.3 211.3,429.3 101.8,427.3"/><polygon points="259.1,453.4 285,453.9 291.3,430.7 266.4,430.2"/><polygon points="290.7,454 316.7,454.5 321.8,431.2 296.9,430.8"/><polygon points="374.6,455.6 491.1,457.8 489.3,434.2 377.4,432.2"/><polygon points="549.8,458.9 576.3,459.4 571,435.7 545.6,435.2"/><polygon points="582.2,459.5 608.7,460 602.2,436.3 576.7,435.8"/><polygon points="667.9,461.1 787.2,463.3 773.4,439.3 659,437.3"/><polygon points="847.2,464.5 874.3,465 856.9,440.8 830.9,440.4"/><polygon points="880.3,465.1 907.5,465.6 888.8,441.4 862.7,440.9"/><polygon points="968.1,466.8 1090.1,469.1 1063.8,444.5 946.9,442.4"/><polygon points="1151.6,470.2 1179.3,470.7 1149.2,446.1 1122.7,445.6"/><polygon points="1185.5,470.8 1213.3,471.4 1181.8,446.6 1155.2,446.2"/><polygon points="1275.3,472.5 1400.2,474.9 1360.8,449.9 1241.2,447.7"/><polygon points="1463.1,476.1 1491.5,476.6 1448.2,451.4 1421,450.9"/><polygon points="1497.8,476.7 1526.3,477.3 1481.5,452 1454.2,451.5"/><polygon points="1589.8,478.5 1717.7,480.9 1664.5,455.3 1542.2,453.1"/><polygon points="1782.1,482.1 1811.1,482.6 1753.9,456.9 1726.1,456.4"/><polygon points="1817.6,482.7 1846.8,483.3 1788,457.5 1760.1,457"/><polygon points="1911.8,484.5 2042.8,487 1975.3,460.9 1850.1,458.6"/><polygon points="2108.7,488.2 2138.5,488.8 2066.8,462.5 2038.3,462"/><polygon points="2145.1,488.9 2175,489.5 2101.6,463.1 2073.1,462.6"/><polygon points="2241.6,490.7 2375.8,493.3 2293.3,466.6 2165.2,464.3"/><polygon points="2443.4,494.5 2473.9,495.1 2386.9,468.2 2357.8,467.7"/><polygon points="2480.7,495.2 2511.3,495.8 2422.6,468.9 2393.4,468.4"/><polygon points="2579.5,497.1 2717,499.7 2618.8,472.4 2487.7,470"/><polygon points="2786.3,501 2817.6,501.6 2714.7,474.1 2684.9,473.6"/><polygon points="2824.5,501.7 2855.9,502.3 2751.2,474.8 2721.3,474.2"/><polygon points="2925.9,503.6 3066.8,506.3 2952.1,478.4 2817.9,476"/><polygon points="3137.8,507.6 3169.9,508.2 3050.3,480.1 3019.8,479.6"/><polygon points="3177,508.3 3209.2,508.9 3087.7,480.8 3057.1,480.2"/><polygon points="3280.9,510.3 3353,511.7 3224.6,483.2 3156,482"/><polygon points="-542.9,155.5 1822.2,173 1807.2,169.7 -533.2,152.7"/><polygon points="-423.1,160.6 -420.3,160.6 -388,149.7 -390.7,149.7"/><polygon points="-418.7,160.6 -415.9,160.7 -383.7,149.7 -386.4,149.7"/><polygon points="-143.5,162.7 -140.7,162.7 -118.5,151.6 -121.3,151.6"/><polygon points="-139,162.7 -136.1,162.8 -114.2,151.7 -116.9,151.6"/><polygon points="142.5,164.9 145.4,164.9 156.8,153.6 154,153.6"/><polygon points="147.1,164.9 150,164.9 161.3,153.6 158.5,153.6"/><polygon points="435,167.1 438,167.1 438.3,155.6 435.4,155.6"/><polygon points="439.7,167.1 442.7,167.1 442.8,155.6 440,155.6"/><polygon points="734.4,169.3 737.4,169.4 726,157.6 723.1,157.6"/><polygon points="739.2,169.4 742.2,169.4 730.7,157.7 727.7,157.6"/><polygon points="1040.8,171.7 1043.9,171.7 1020.3,159.7 1017.3,159.7"/><polygon points="1045.7,171.7 1048.8,171.7 1025,159.8 1022,159.7"/><polygon points="1354.5,174 1357.7,174.1 1321.3,161.9 1318.2,161.8"/><polygon points="1359.6,174.1 1362.8,174.1 1326.1,161.9 1323.1,161.9"/><polygon points="1675.8,176.5 1679,176.5 1629.2,164 1626.1,164"/><polygon points="1681,176.5 1684.3,176.5 1634.2,164.1 1631.1,164.1"/><polygon points="-547.9,156.9 -520.8,157.1 -501.7,151.5 -528.4,151.3"/><polygon points="-493.6,157.3 -481.3,157.4 -463,151.7 -475,151.6"/><polygon points="-478.6,157.5 -466.3,157.5 -448.3,151.8 -460.3,151.8"/><polygon points="-439,157.8 -384.1,158.2 -367.7,152.4 -421.5,152"/><polygon points="-356.6,158.4 -344.2,158.5 -328.6,152.7 -340.7,152.6"/><polygon points="-341.5,158.5 -329.1,158.6 -313.7,152.8 -325.9,152.7"/><polygon points="-301.5,158.8 -246,159.2 -232.3,153.4 -286.6,153"/><polygon points="-218.2,159.4 -205.7,159.5 -192.7,153.7 -205,153.6"/><polygon points="-202.9,159.5 -190.3,159.6 -177.7,153.8 -190,153.7"/><polygon points="-162.4,159.8 -106.4,160.2 -95.3,154.4 -150.3,154"/><polygon points="-78.2,160.4 -65.6,160.5 -55.3,154.7 -67.7,154.6"/><polygon points="-62.7,160.6 -50,160.6 -40.1,154.8 -52.5,154.7"/><polygon points="-21.8,160.9 34.9,161.3 43.1,155.4 -12.4,155"/><polygon points="63.3,161.5 76.1,161.6 83.6,155.7 71,155.6"/><polygon points="79,161.6 91.8,161.7 99,155.8 86.4,155.7"/><polygon points="120.4,161.9 177.7,162.3 183.1,156.4 127,156"/><polygon points="206.5,162.6 219.4,162.7 224,156.7 211.3,156.6"/><polygon points="222.3,162.7 235.3,162.8 239.6,156.8 226.8,156.7"/><polygon points="264.2,163 322.2,163.4 324.7,157.4 267.9,157"/><polygon points="351.3,163.6 364.4,163.7 366,157.7 353.2,157.6"/><polygon points="367.3,163.8 380.4,163.9 381.7,157.8 368.9,157.7"/><polygon points="409.6,164.1 468.3,164.5 467.8,158.4 410.4,158"/><polygon points="497.7,164.7 511,164.8 509.6,158.8 496.6,158.7"/><polygon points="513.9,164.9 527.2,164.9 525.5,158.9 512.5,158.8"/><polygon points="556.7,165.2 616.1,165.6 612.5,159.5 554.4,159.1"/><polygon points="645.8,165.8 659.2,165.9 654.8,159.8 641.7,159.7"/><polygon points="662.2,166 675.6,166.1 670.9,159.9 657.7,159.8"/><polygon points="705.5,166.3 765.5,166.7 758.9,160.5 700.2,160.1"/><polygon points="795.6,166.9 809.2,167.1 801.7,160.9 788.4,160.8"/><polygon points="812.2,167.1 825.8,167.2 817.9,161 804.6,160.9"/><polygon points="856.1,167.4 916.8,167.9 907,161.6 847.5,161.2"/><polygon points="947.2,168.1 961,168.2 950.2,161.9 936.8,161.8"/><polygon points="964,168.2 977.8,168.3 966.6,162 953.2,161.9"/><polygon points="1008.3,168.5 1069.8,169 1056.7,162.7 996.6,162.3"/><polygon points="1100.6,169.2 1114.5,169.3 1100.4,163 1086.8,162.9"/><polygon points="1117.6,169.3 1131.5,169.5 1117.1,163.1 1103.4,163"/><polygon points="1162.4,169.7 1224.6,170.1 1208.1,163.8 1147.3,163.4"/><polygon points="1255.7,170.4 1269.8,170.5 1252.4,164.1 1238.6,164"/><polygon points="1272.9,170.5 1287,170.6 1269.2,164.2 1255.4,164.1"/><polygon points="1318.3,170.8 1381.2,171.3 1361.3,164.9 1299.9,164.5"/><polygon points="1412.7,171.5 1426.9,171.7 1406.1,165.2 1392.2,165.1"/><polygon points="1430.1,171.7 1444.3,171.8 1423.1,165.3 1409.2,165.2"/><polygon points="1476,172 1539.7,172.5 1516.3,166 1454.1,165.6"/><polygon points="1571.6,172.7 1586,172.8 1561.6,166.3 1547.6,166.2"/><polygon points="1589.2,172.9 1603.6,173 1578.8,166.5 1564.8,166.4"/><polygon points="1635.7,173.2 1700,173.7 1673.1,167.1 1610.2,166.7"/><polygon points="1732.3,173.9 1746.9,174 1719,167.5 1704.7,167.4"/><polygon points="1750.1,174.1 1764.7,174.2 1736.4,167.6 1722.1,167.5"/><polygon points="1797.2,174.4 1829.7,174.7 1799.9,168.1 1768.1,167.8"/><polygon points="-224.5,63 1350.5,68.6 1344,67.2 -220,61.7"/><polygon points="-139.5,65.2 -137.7,65.2 -122.8,60.2 -124.7,60.2"/><polygon points="-136.5,65.2 -134.6,65.2 -119.9,60.2 -121.7,60.2"/><polygon points="50.2,65.9 52.1,65.9 62.2,60.8 60.3,60.8"/><polygon points="53.3,65.9 55.2,65.9 65.2,60.8 63.3,60.8"/><polygon points="242.8,66.6 244.8,66.6 250,61.5 248.1,61.4"/><polygon points="245.9,66.6 247.9,66.6 253,61.5 251.1,61.5"/><polygon points="438.4,67.3 440.4,67.3 440.5,62.1 438.6,62.1"/><polygon points="441.6,67.3 443.5,67.3 443.6,62.1 441.7,62.1"/><polygon points="637,68 639,68 633.9,62.8 632,62.8"/><polygon points="640.2,68 642.2,68 637.1,62.8 635.1,62.8"/><polygon points="838.7,68.8 840.8,68.8 830.3,63.5 828.3,63.5"/><polygon points="842,68.8 844,68.8 833.5,63.5 831.5,63.5"/><polygon points="1043.6,69.5 1045.7,69.5 1029.7,64.2 1027.7,64.2"/><polygon points="1046.9,69.5 1049,69.5 1032.9,64.2 1030.9,64.2"/><polygon points="1251.7,70.3 1253.8,70.3 1232.1,64.9 1230.1,64.9"/><polygon points="1255.1,70.3 1257.2,70.3 1235.4,64.9 1233.3,64.9"/><polygon points="-226.8,63.6 -208.2,63.7 -199.4,61.1 -217.8,61"/><polygon points="-189.5,63.8 -181.2,63.8 -172.7,61.2 -181,61.1"/><polygon points="-179.3,63.8 -170.9,63.8 -162.6,61.2 -170.9,61.2"/><polygon points="-152.2,63.9 -114.8,64 -107.2,61.4 -144.2,61.3"/><polygon points="-96,64.1 -87.5,64.1 -80.4,61.5 -88.7,61.5"/><polygon points="-85.7,64.1 -77.2,64.2 -70.2,61.5 -78.5,61.5"/><polygon points="-58.4,64.2 -20.7,64.4 -14.4,61.7 -51.6,61.6"/><polygon points="-1.8,64.4 6.8,64.5 12.7,61.8 4.3,61.8"/><polygon points="8.7,64.5 17.2,64.5 23,61.9 14.6,61.8"/><polygon points="36.1,64.6 74.1,64.7 79.2,62.1 41.7,61.9"/><polygon points="93.2,64.8 101.8,64.8 106.4,62.1 98,62.1"/><polygon points="103.7,64.8 112.3,64.9 116.8,62.2 108.3,62.2"/><polygon points="131.4,64.9 169.7,65.1 173.4,62.4 135.6,62.2"/><polygon points="188.9,65.1 197.5,65.2 200.9,62.5 192.4,62.4"/><polygon points="199.4,65.2 208.1,65.2 211.3,62.5 202.8,62.5"/><polygon points="227.3,65.3 265.9,65.4 268.4,62.7 230.3,62.6"/><polygon points="285.3,65.5 294,65.5 296,62.8 287.4,62.8"/><polygon points="295.9,65.5 304.6,65.5 306.5,62.9 297.9,62.8"/><polygon points="324,65.6 362.9,65.8 364,63.1 325.7,62.9"/><polygon points="382.4,65.8 391.2,65.9 391.9,63.2 383.2,63.1"/><polygon points="393.1,65.9 401.9,65.9 402.5,63.2 393.8,63.2"/><polygon points="421.4,66 460.6,66.1 460.4,63.4 421.8,63.3"/><polygon points="480.2,66.2 489.1,66.2 488.5,63.5 479.8,63.5"/><polygon points="491.1,66.2 499.9,66.3 499.2,63.5 490.4,63.5"/><polygon points="519.6,66.3 559.1,66.5 557.5,63.7 518.6,63.6"/><polygon points="578.9,66.5 587.8,66.6 585.8,63.8 577,63.8"/><polygon points="589.8,66.6 598.7,66.6 596.5,63.9 587.8,63.8"/><polygon points="618.5,66.7 658.3,66.8 655.3,64.1 616.1,63.9"/><polygon points="678.2,66.9 687.2,66.9 683.9,64.2 675,64.1"/><polygon points="689.2,66.9 698.2,67 694.7,64.2 685.8,64.2"/><polygon points="718.2,67 758.3,67.2 753.9,64.4 714.4,64.3"/><polygon points="778.4,67.3 787.4,67.3 782.7,64.5 773.7,64.5"/><polygon points="789.4,67.3 798.5,67.3 793.6,64.6 784.6,64.5"/><polygon points="818.6,67.4 859,67.6 853.3,64.8 813.4,64.6"/><polygon points="879.3,67.6 888.4,67.7 882.2,64.9 873.2,64.8"/><polygon points="890.4,67.7 899.6,67.7 893.2,64.9 884.2,64.9"/><polygon points="919.9,67.8 960.6,67.9 953.4,65.1 913.2,65"/><polygon points="981,68 990.2,68 982.5,65.2 973.5,65.2"/><polygon points="992.2,68 1001.4,68.1 993.6,65.3 984.5,65.2"/><polygon points="1021.9,68.2 1062.9,68.3 1054.2,65.5 1013.8,65.3"/><polygon points="1083.5,68.4 1092.8,68.4 1083.6,65.6 1074.5,65.6"/><polygon points="1094.8,68.4 1104.1,68.4 1094.8,65.6 1085.7,65.6"/><polygon points="1124.7,68.5 1166.1,68.7 1155.9,65.8 1115.1,65.7"/><polygon points="1186.8,68.7 1196.1,68.8 1185.5,65.9 1176.3,65.9"/><polygon points="1198.2,68.8 1207.5,68.8 1196.8,66 1187.5,66"/><polygon points="1228.3,68.9 1270,69.1 1258.3,66.2 1217.2,66.1"/><polygon points="1290.9,69.1 1300.3,69.2 1288.2,66.3 1278.9,66.3"/><polygon points="1302.4,69.2 1311.8,69.2 1299.5,66.3 1290.2,66.3"/><polygon points="1332.8,69.3 1353.8,69.4 1340.8,66.5 1320.2,66.4"/></g>
<text transform="matrix(26.392 0.465 -61.529 25.169 -861.844 403.001)" font-family="Liberation Mono,monospace" font-style="italic" font-weight="normal" font-size="1" fill="#a2a4a2" fill-opacity="1">1METER</text>
<text transform="matrix(11.126 0.216 -30.264 11.490 -1067.022 442.474)" font-family="Liberation Mono,monospace" font-style="italic" font-weight="bold" font-size="1" fill="#a2a4a2" fill-opacity="1">[Prototype]</text>
<text transform="matrix(24.686 -9.863 10.388 0.182 -885.776 400.114)" font-family="Liberation Mono,monospace" font-style="italic" font-weight="bold" font-size="1" fill="#a2a4a2" fill-opacity="1">[Prototype]</text>
<text transform="matrix(-27.985 11.448 -11.161 -0.215 -955.217 441.195)" font-family="Liberation Mono,monospace" font-style="italic" font-weight="bold" font-size="1" fill="#a2a4a2" fill-opacity="1">[Prototype]</text>
<text transform="matrix(14.323 0.102 -17.250 7.056 -246.722 151.384)" font-family="Liberation Mono,monospace" font-style="italic" font-weight="normal" font-size="1" fill="#a2a4a2" fill-opacity="1">1METER</text>
<text transform="matrix(5.868 0.045 -7.931 3.011 -328.751 162.186)" font-family="Liberation Mono,monospace" font-style="italic" font-weight="bold" font-size="1" fill="#a2a4a2" fill-opacity="1">[Prototype]</text>
<text transform="matrix(6.958 -2.780 5.655 0.040 -261.265 150.605)" font-family="Liberation Mono,monospace" font-style="italic" font-weight="bold" font-size="1" fill="#a2a4a2" fill-opacity="1">[Prototype]</text>
<text transform="matrix(-7.344 3.004 -5.877 -0.044 -272.038 161.740)" font-family="Liberation Mono,monospace" font-style="italic" font-weight="bold" font-size="1" fill="#a2a4a2" fill-opacity="1">[Prototype]</text>
<text transform="matrix(9.826 0.034 -7.977 3.263 -25.295 60.809)" font-family="Liberation Mono,monospace" font-style="italic" font-weight="normal" font-size="1" fill="#a2a4a2" fill-opacity="1">1METER</text>
<text transform="matrix(3.983 0.015 -3.582 1.360 -74.857 65.794)" font-family="Liberation Mono,monospace" font-style="italic" font-weight="bold" font-size="1" fill="#a2a4a2" fill-opacity="1">[Prototype]</text>
<text transform="matrix(3.224 -1.288 3.884 0.013 -35.645 60.463)" font-family="Liberation Mono,monospace" font-style="italic" font-weight="bold" font-size="1" fill="#a2a4a2" fill-opacity="1">[Prototype]</text>
<text transform="matrix(-3.318 1.357 -3.987 -0.015 -36.866 65.542)" font-family="Liberation Mono,monospace" font-style="italic" font-weight="bold" font-size="1" fill="#a2a4a2" fill-opacity="1">[Prototype]</text>
<text transform="matrix(27.503 0.485 -38.382 26.123 -353.521 411.961)" font-family="Liberation Mono,monospace" font-style="italic" font-weight="normal" font-size="1" fill="#a2a4a2" fill-opacity="1">1METER</text>
<text transform="matrix(11.630 0.226 -19.858 11.962 -525.355 452.986)" font-family="Liberation Mono,monospace" font-style="italic" font-weight="bold" font-size="1" fill="#a2a4a2" fill-opacity="1">[Prototype]</text>
<text transform="matrix(15.639 -10.234 10.823 0.190 -380.873 408.963)" font-family="Liberation Mono,monospace" font-style="italic" font-weight="bold" font-size="1" fill="#a2a4a2" fill-opacity="1">[Prototype]</text>
<text transform="matrix(-17.510 11.917 -11.666 -0.225 -411.856 451.663)" font-family="Liberation Mono,monospace" font-style="italic" font-weight="bold" font-size="1" fill="#a2a4a2" fill-opacity="1">[Prototype]</text>
<text transform="matrix(14.638 0.104 -10.553 7.182 26.479 153.334)" font-family="Liberation Mono,monospace" font-style="italic" font-weight="normal" font-size="1" fill="#a2a4a2" fill-opacity="1">1METER</text>
<text transform="matrix(6.002 0.046 -5.092 3.067 -46.158 164.332)" font-family="Liberation Mono,monospace" font-style="italic" font-weight="bold" font-size="1" fill="#a2a4a2" fill-opacity="1">[Prototype]</text>
<text transform="matrix(4.323 -2.829 5.779 0.041 10.951 152.540)" font-family="Liberation Mono,monospace" font-style="italic" font-weight="bold" font-size="1" fill="#a2a4a2" fill-opacity="1">[Prototype]</text>
<text transform="matrix(-4.497 3.060 -6.011 -0.045 10.985 163.879)" font-family="Liberation Mono,monospace" font-style="italic" font-weight="bold" font-size="1" fill="#a2a4a2" fill-opacity="1">[Prototype]</text>
<text transform="matrix(9.972 0.035 -4.846 3.298 161.469 61.460)" font-family="Liberation Mono,monospace" font-style="italic" font-weight="normal" font-size="1" fill="#a2a4a2" fill-opacity="1">1METER</text>
<text transform="matrix(4.044 0.015 -2.283 1.375 116.256 66.499)" font-family="Liberation Mono,monospace" font-style="italic" font-weight="bold" font-size="1" fill="#a2a4a2" fill-opacity="1">[Prototype]</text>
<text transform="matrix(1.989 -1.302 3.941 0.014 150.659 61.110)" font-family="Liberation Mono,monospace" font-style="italic" font-weight="bold" font-size="1" fill="#a2a4a2" fill-opacity="1">[Prototype]</text>
<text transform="matrix(-2.017 1.372 -4.048 -0.015 154.438 66.245)" font-family="Liberation Mono,monospace" font-style="italic" font-weight="bold" font-size="1" fill="#a2a4a2" fill-opacity="1">[Prototype]</text>
<text transform="matrix(28.685 0.506 -13.191 27.137 176.426 421.302)" font-family="Liberation Mono,monospace" font-style="italic" font-weight="normal" font-size="1" fill="#a2a4a2" fill-opacity="1">1METER</text>
<text transform="matrix(12.168 0.236 -8.457 12.465 41.113 463.980)" font-family="Liberation Mono,monospace" font-style="italic" font-weight="bold" font-size="1" fill="#a2a4a2" fill-opacity="1">[Prototype]</text>
<text transform="matrix(5.796 -10.629 11.285 0.198 145.381 418.185)" font-family="Liberation Mono,monospace" font-style="italic" font-weight="bold" font-size="1" fill="#a2a4a2" fill-opacity="1">[Prototype]</text>
<text transform="matrix(-6.036 12.418 -12.205 -0.235 156.347 462.610)" font-family="Liberation Mono,monospace" font-style="italic" font-weight="bold" font-size="1" fill="#a2a4a2" fill-opacity="1">[Prototype]</text>
<text transform="matrix(14.963 0.107 -3.554 7.313 305.711 155.327)" font-family="Liberation Mono,monospace" font-style="italic" font-weight="normal" font-size="1" fill="#a2a4a2" fill-opacity="1">1METER</text>
<text transform="matrix(6.140 0.047 -2.120 3.125 242.913 166.527)" font-family="Liberation Mono,monospace" font-style="italic" font-weight="bold" font-size="1" fill="#a2a4a2" fill-opacity="1">[Prototype]</text>
<text transform="matrix(1.571 -2.880 5.907 0.042 289.159 154.518)" font-family="Liberation Mono,monospace" font-style="italic" font-weight="bold" font-size="1" fill="#a2a4a2" fill-opacity="1">[Prototype]</text>
<text transform="matrix(-1.516 3.118 -6.149 -0.046 300.490 166.067)" font-family="Liberation Mono,monospace" font-style="italic" font-weight="bold" font-size="1" fill="#a2a4a2" fill-opacity="1">[Prototype]</text>
<text transform="matrix(10.121 0.035 -1.621 3.334 351.017 62.121)" font-family="Liberation Mono,monospace" font-style="italic" font-weight="normal" font-size="1" fill="#a2a4a2" fill-opacity="1">1METER</text>
<text transform="matrix(4.106 0.015 -0.943 1.390 310.289 67.216)" font-family="Liberation Mono,monospace" font-style="italic" font-weight="bold" font-size="1" fill="#a2a4a2" fill-opacity="1">[Prototype]</text>
<text transform="matrix(0.718 -1.316 4.000 0.014 339.735 61.767)" font-family="Liberation Mono,monospace" font-style="italic" font-weight="bold" font-size="1" fill="#a2a4a2" fill-opacity="1">[Prototype]</text>
<text transform="matrix(-0.675 1.388 -4.110 -0.015 348.665 66.959)" font-family="Liberation Mono,monospace" font-style="italic" font-weight="bold" font-size="1" fill="#a2a4a2" fill-opacity="1">[Prototype]</text>
<text transform="matrix(29.946 0.528 14.250 28.214 729.407 431.049)" font-family="Liberation Mono,monospace" font-style="italic" font-weight="normal" font-size="1" fill="#a2a4a2" fill-opacity="1">1METER</text>
<text transform="matrix(12.745 0.247 4.046 13.004 634.127 475.488)" font-family="Liberation Mono,monospace" font-style="italic" font-weight="bold" font-size="1" fill="#a2a4a2" fill-opacity="1">[Prototype]</text>
<text transform="matrix(-4.921 -11.048 11.778 0.206 694.373 427.807)" font-family="Liberation Mono,monospace" font-style="italic" font-weight="bold" font-size="1" fill="#a2a4a2" fill-opacity="1">[Prototype]</text>
<text transform="matrix(6.542 12.953 -12.783 -0.246 751.135 474.068)" font-family="Liberation Mono,monospace" font-style="italic" font-weight="bold" font-size="1" fill="#a2a4a2" fill-opacity="1">[Prototype]</text>
<text transform="matrix(15.299 0.109 3.761 7.447 591.177 157.364)" font-family="Liberation Mono,monospace" font-style="italic" font-weight="normal" font-size="1" fill="#a2a4a2" fill-opacity="1">1METER</text>
<text transform="matrix(6.283 0.048 0.991 3.186 538.687 168.773)" font-family="Liberation Mono,monospace" font-style="italic" font-weight="bold" font-size="1" fill="#a2a4a2" fill-opacity="1">[Prototype]</text>
<text transform="matrix(-1.306 -2.933 6.039 0.043 573.558 156.540)" font-family="Liberation Mono,monospace" font-style="italic" font-weight="bold" font-size="1" fill="#a2a4a2" fill-opacity="1">[Prototype]</text>
<text transform="matrix(1.605 3.178 -6.293 -0.048 596.704 168.306)" font-family="Liberation Mono,monospace" font-style="italic" font-weight="bold" font-size="1" fill="#a2a4a2" fill-opacity="1">[Prototype]</text>
<text transform="matrix(10.274 0.036 1.703 3.371 543.412 62.792)" font-family="Liberation Mono,monospace" font-style="italic" font-weight="normal" font-size="1" fill="#a2a4a2" fill-opacity="1">1METER</text>
<text transform="matrix(4.169 0.015 0.438 1.406 507.312 67.943)" font-family="Liberation Mono,monospace" font-style="italic" font-weight="bold" font-size="1" fill="#a2a4a2" fill-opacity="1">[Prototype]</text>
<text transform="matrix(-0.593 -1.330 4.060 0.014 531.645 62.434)" font-family="Liberation Mono,monospace" font-style="italic" font-weight="bold" font-size="1" fill="#a2a4a2" fill-opacity="1">[Prototype]</text>
<text transform="matrix(0.709 1.404 -4.173 -0.015 545.883 67.684)" font-family="Liberation Mono,monospace" font-style="italic" font-weight="bold" font-size="1" fill="#a2a4a2" fill-opacity="1">[Prototype]</text>
<text transform="matrix(31.291 0.552 44.168 29.362 1306.958 441.229)" font-family="Liberation Mono,monospace" font-style="italic" font-weight="normal" font-size="1" fill="#a2a4a2" fill-opacity="1">1METER</text>
<text transform="matrix(13.364 0.259 17.773 13.580 1255.597 487.549)" font-family="Liberation Mono,monospace" font-style="italic" font-weight="bold" font-size="1" fill="#a2a4a2" fill-opacity="1">[Prototype]</text>
<text transform="matrix(-16.599 -11.495 12.304 0.216 1267.607 437.853)" font-family="Liberation Mono,monospace" font-style="italic" font-weight="bold" font-size="1" fill="#a2a4a2" fill-opacity="1">[Prototype]</text>
<text transform="matrix(20.346 13.526 -13.403 -0.258 1374.418 486.076)" font-family="Liberation Mono,monospace" font-style="italic" font-weight="bold" font-size="1" fill="#a2a4a2" fill-opacity="1">[Prototype]</text>
<text transform="matrix(15.646 0.112 11.410 7.585 883.089 159.448)" font-family="Liberation Mono,monospace" font-style="italic" font-weight="normal" font-size="1" fill="#a2a4a2" fill-opacity="1">1METER</text>
<text transform="matrix(6.432 0.049 4.250 3.248 841.400 171.072)" font-family="Liberation Mono,monospace" font-style="italic" font-weight="bold" font-size="1" fill="#a2a4a2" fill-opacity="1">[Prototype]</text>
<text transform="matrix(-4.314 -2.987 6.176 0.044 864.358 158.608)" font-family="Liberation Mono,monospace" font-style="italic" font-weight="bold" font-size="1" fill="#a2a4a2" fill-opacity="1">[Prototype]</text>
<text transform="matrix(4.874 3.240 -6.441 -0.049 899.861 170.598)" font-family="Liberation Mono,monospace" font-style="italic" font-weight="bold" font-size="1" fill="#a2a4a2" fill-opacity="1">[Prototype]</text>
<text transform="matrix(10.430 0.036 5.127 3.408 738.719 63.473)" font-family="Liberation Mono,monospace" font-style="italic" font-weight="normal" font-size="1" fill="#a2a4a2" fill-opacity="1">1METER</text>
<text transform="matrix(4.234 0.016 1.862 1.422 707.394 68.681)" font-family="Liberation Mono,monospace" font-style="italic" font-weight="bold" font-size="1" fill="#a2a4a2" fill-opacity="1">[Prototype]</text>
<text transform="matrix(-1.943 -1.345 4.122 0.014 726.453 63.111)" font-family="Liberation Mono,monospace" font-style="italic" font-weight="bold" font-size="1" fill="#a2a4a2" fill-opacity="1">[Prototype]</text>
<text transform="matrix(2.136 1.420 -4.238 -0.016 746.160 68.420)" font-family="Liberation Mono,monospace" font-style="italic" font-weight="bold" font-size="1" fill="#a2a4a2" fill-opacity="1">[Prototype]</text>
<text transform="matrix(32.729 0.577 76.820 30.587 1910.753 451.872)" font-family="Liberation Mono,monospace" font-style="italic" font-weight="normal" font-size="1" fill="#a2a4a2" fill-opacity="1">1METER</text>
<text transform="matrix(14.029 0.272 32.860 14.198 1907.621 500.203)" font-family="Liberation Mono,monospace" font-style="italic" font-weight="bold" font-size="1" fill="#a2a4a2" fill-opacity="1">[Prototype]</text>
<text transform="matrix(-29.339 -11.971 12.866 0.225 1866.725 448.353)" font-family="Liberation Mono,monospace" font-style="italic" font-weight="bold" font-size="1" fill="#a2a4a2" fill-opacity="1">[Prototype]</text>
<text transform="matrix(35.514 14.140 -14.069 -0.271 2028.296 498.673)" font-family="Liberation Mono,monospace" font-style="italic" font-weight="bold" font-size="1" fill="#a2a4a2" fill-opacity="1">[Prototype]</text>
<text transform="matrix(16.005 0.114 19.408 7.728 1181.665 161.579)" font-family="Liberation Mono,monospace" font-style="italic" font-weight="normal" font-size="1" fill="#a2a4a2" fill-opacity="1">1METER</text>
<text transform="matrix(6.585 0.050 7.665 3.312 1151.299 173.426)" font-family="Liberation Mono,monospace" font-style="italic" font-weight="bold" font-size="1" fill="#a2a4a2" fill-opacity="1">[Prototype]</text>
<text transform="matrix(-7.459 -3.043 6.317 0.045 1161.777 160.723)" font-family="Liberation Mono,monospace" font-style="italic" font-weight="bold" font-size="1" fill="#a2a4a2" fill-opacity="1">[Prototype]</text>
<text transform="matrix(8.298 3.304 -6.595 -0.050 1210.209 172.944)" font-family="Liberation Mono,monospace" font-style="italic" font-weight="bold" font-size="1" fill="#a2a4a2" fill-opacity="1">[Prototype]</text>
<text transform="matrix(10.589 0.037 8.656 3.447 937.003 64.164)" font-family="Liberation Mono,monospace" font-style="italic" font-weight="normal" font-size="1" fill="#a2a4a2" fill-opacity="1">1METER</text>
<text transform="matrix(4.301 0.016 3.330 1.439 910.606 69.432)" font-family="Liberation Mono,monospace" font-style="italic" font-weight="bold" font-size="1" fill="#a2a4a2" fill-opacity="1">[Prototype]</text>
<text transform="matrix(-3.334 -1.360 4.185 0.015 924.226 63.798)" font-family="Liberation Mono,monospace" font-style="italic" font-weight="bold" font-size="1" fill="#a2a4a2" fill-opacity="1">[Prototype]</text>
<text transform="matrix(3.607 1.436 -4.305 -0.016 949.570 69.168)" font-family="Liberation Mono,monospace" font-style="italic" font-weight="bold" font-size="1" fill="#a2a4a2" fill-opacity="1">[Prototype]</text>
</g>
<polygon points="0,0 875,0 875,54.7 0,52" fill="#e5e6e4"/>
<path d="M-41.2 51.9L-75.9 0M-4.1 52L-36.3 0M33 52.1L3.4 0M70.1 52.2L43.1 0M107.2 52.3L82.8 0M144.3 52.5L122.5 0M181.4 52.6L162.2 0M218.5 52.7L202 0M255.6 52.8L241.7 0M292.7 52.9L281.5 0M329.8 53L321.2 0M366.9 53.2L361 0M404 53.3L400.8 0M441.1 53.4L440.6 0M478.2 53.5L480.4 0M515.3 53.6L520.3 0M552.4 53.7L560.1 0M589.5 53.9L600 0M626.6 54L639.9 0M663.7 54.1L679.7 0M700.8 54.2L719.6 0M737.9 54.3L759.5 0" stroke="#4a4a4a" stroke-opacity="0.5" stroke-width="1.500" fill="none"/>
<path d="M0 11.7L767 13.8" stroke="#505050" stroke-opacity="0.45" stroke-width="1.400" stroke-dasharray="5 1.500 2 1.500 6 2 1.500 2"/>
<path d="M0 49.7L752 52.1" stroke="#505050" stroke-opacity="0.35" stroke-width="1.400" stroke-dasharray="5 1.500 2 1.500 6 2 1.500 2"/>
<path d="M0 2.5L770.8 4.4" stroke="#777" stroke-opacity="0.3" stroke-width="1"/>
<path d="M0 16L765.4 18" stroke="#777" stroke-opacity="0.3" stroke-width="1"/>
<path d="M0 27L761 29.1" stroke="#777" stroke-opacity="0.3" stroke-width="1"/>
<path d="M0 40L755.8 42.3" stroke="#777" stroke-opacity="0.3" stroke-width="1"/>
<path d="M0 52.9L751 55.3" stroke="#fff" stroke-width="1.800"/>
<g filter="url(#bl)"><polygon points="697.7,54.2 750,54.4 956.7,180.5 981.2,262.8" fill="#7c93ba"/></g>
<g filter="url(#bl)"><polygon points="738.500,-6 780.2,-6 758,54.4 697.7,54.2" fill="#8f9db5"/></g>
<path d="M700.8 54.2L719.6 0M737.9 54.3L759.5 0" stroke="#525c70" stroke-opacity="0.7" stroke-width="1.200" fill="none"/>
<path d="M742 13.7L767.2 13.8" stroke="#525c70" stroke-opacity="0.7" stroke-width="1.500"/>
<polygon points="772.2,0 875,0 875,130.6 750,54.4" fill="#7d899b"/>
<clipPath id="rw"><polygon points="772.2,0 875,0 875,130.6 750,54.4"/></clipPath><g clip-path="url(#rw)">
<path d="M756.9 58.5L781.9 0M778.9 72L812.4 0M804.2 87.4L849.1 0M833.7 105.4L893.8 0M868.5 126.6L949.8 0" stroke="#414a5c" stroke-opacity="0.7" stroke-width="1.400" fill="none"/>
<path d="M754.1 44.4L875 115.4M758.4 33.9L875 97.5M762.6 23.6L875 80.4M771 2.9L875 47.4" stroke="#4a5466" stroke-opacity="0.5" stroke-width="1" fill="none"/>
<path d="M766.6 13.8L875 64.6" stroke="#454e60" stroke-opacity="0.8" stroke-width="1.500" stroke-dasharray="9 2 3 2 9 3 1.500 3" fill="none"/>
</g>
<clipPath id="fs"><polygon points="701.5,54.2 750,54.4 956.7,180.5 989.2,262.9"/></clipPath><g clip-path="url(#fs)">
<g fill="#5f7496"><polygon points="1064.5,291.5 1073.5,291.6 721.2,54.3 717.3,54.3"/><polygon points="1016.2,266.5 1048.7,266.9 1044.7,264.2 1012.4,263.9"/><polygon points="1010.2,262.3 1042.3,262.7 1038.4,260.1 1006.4,259.7"/><polygon points="786.6,106.4 805.9,106.5 804.4,105.6 785.2,105.5"/><polygon points="784.4,104.9 803.5,105 802.1,104 783.1,104"/><polygon points="1059.9,291.4 1078.1,291.6 998.9,238.7 983.1,238.5"/><polygon points="951.4,216.7 966.3,216.8 952.8,207.9 938.3,207.7"/><polygon points="935.5,205.8 949.9,205.9 937.3,197.5 923.3,197.3"/><polygon points="898.1,180 911.4,180.1 866.9,150.4 854.9,150.3"/><polygon points="836.3,137.5 847.8,137.6 839.7,132.2 828.5,132.1"/><polygon points="826.8,130.9 837.9,131 830.2,125.9 819.3,125.8"/><polygon points="803.7,115.1 814.2,115.1 785.8,96.1 776.1,96.1"/><polygon points="763.9,87.7 773.2,87.7 767.8,84.1 758.6,84.1"/><polygon points="757.5,83.3 766.6,83.3 761.4,79.9 752.5,79.8"/><polygon points="741.9,72.5 750.5,72.6 730.8,59.4 722.7,59.3"/><polygon points="734,164.9 1035.9,167.2 1029.7,164 731,161.9"/><polygon points="739.2,169.4 742.2,169.4 730.7,157.7 727.7,157.6"/><polygon points="1040.8,171.7 1043.9,171.7 1020.3,159.7 1017.3,159.7"/><polygon points="735.5,166.5 765.5,166.7 758.9,160.5 729.5,160.3"/><polygon points="795.6,166.9 809.2,167.1 801.7,160.9 788.4,160.8"/><polygon points="812.2,167.1 825.8,167.2 817.9,161 804.6,160.9"/><polygon points="856.1,167.4 916.8,167.9 907,161.6 847.5,161.2"/><polygon points="947.2,168.1 961,168.2 950.2,161.9 936.8,161.8"/><polygon points="964,168.2 977.8,168.3 966.6,162 953.2,161.9"/><polygon points="1008.3,168.5 1039,168.8 1026.6,162.5 996.6,162.3"/><polygon points="637.7,66.1 837.4,66.8 834.7,65.4 636.4,64.7"/><polygon points="640.2,68 642.2,68 637.1,62.8 635.1,62.8"/><polygon points="838.7,68.8 840.8,68.8 830.3,63.5 828.3,63.5"/><polygon points="638.4,66.8 658.3,66.8 655.3,64.1 635.7,64"/><polygon points="678.2,66.9 687.2,66.9 683.9,64.2 675,64.1"/><polygon points="689.2,66.9 698.2,67 694.7,64.2 685.8,64.2"/><polygon points="718.2,67 758.3,67.2 753.9,64.4 714.4,64.3"/><polygon points="778.4,67.3 787.4,67.3 782.7,64.5 773.7,64.5"/><polygon points="789.4,67.3 798.5,67.3 793.6,64.6 784.6,64.5"/><polygon points="818.6,67.4 838.8,67.5 833.3,64.7 813.4,64.6"/></g>
</g>
<g filter="url(#bl1)"><path d="M402 188 C380 186 362 190 360 205 C358 222 362 232 368 240 C378 252 392 256 404 258 L430 262 L430 190Z" fill="#6e82ad"/></g>
<path d="M392 150 C392 122 412 104 438 104 C464 104 484 122 484 150 L484 168 L478 232 C476 252 460 267 438 267 C416 267 400 252 398 232 L392 168Z" fill="url(#capb)"/>
<path d="M392 150 C392 122 412 104 438 104 C464 104 484 122 484 150 L484 175 L392 175Z" fill="url(#cap)"/>
<path d="M389 165 L391 147 C410 174 466 174 485 147 L487 165 Z" fill="#1b1e28"/>
<path d="M389.5 165 L486.5 165 L485 187 L447 187 L447 175 L437.5 168.5 L427 175 L427 187 L390.5 187Z" fill="#151515"/>
<rect x="438" y="242.5" width="20" height="15" fill="#2a7df0" fill-opacity="0.75" stroke="#2a6fe8" stroke-width="1"/>
<rect x="438" y="258" width="20" height="12" fill="#b8f0a0" fill-opacity="0.6" stroke="#7be34a" stroke-width="1"/>
<path d="M437.5 270V190" stroke="#7cf23a" stroke-width="1.6"/><path d="M437.5 178 L430 199 L445 199Z" fill="#74ee2c"/>
<path d="M437 257.5H512" stroke="#f0503c" stroke-width="1.6"/><path d="M528 257.5 L509 250.5 L509 264.5Z" fill="#ee1c1c"/><path d="M509 250.5V264.5" stroke="#701010" stroke-width="1.5"/>
<ellipse cx="438.5" cy="214" rx="5.5" ry="5" fill="#1a5cf0"/><path d="M437 206 L442 211 L436 212Z" fill="#123a9a"/>
<g><text x="820" y="19" font-size="13" font-weight="bold" fill="#e6e6e6" text-anchor="middle" font-family="Liberation Sans,sans-serif">y</text><text x="853" y="55" font-size="13" font-weight="bold" fill="#e6e6e6" text-anchor="middle" font-family="Liberation Sans,sans-serif">x</text><path d="M813 24 L827 24 L821 43 L819 43Z" fill="#8fdc52"/><ellipse cx="820" cy="24" rx="7" ry="2.5" fill="#a5ec66"/><path d="M848 44 L848 58 L830 52.5 L830 50.5Z" fill="#e8584a"/><ellipse cx="848" cy="51" rx="2.5" ry="7" fill="#f0705e"/><path d="M792 45 L792 57 L811 52 L811 50Z" fill="#e4e4e4"/><ellipse cx="793" cy="51" rx="2.5" ry="6" fill="#cfcfcf"/><path d="M813 76 L827 76 L821 59 L819 59Z" fill="#8e9196"/><ellipse cx="820" cy="77" rx="7" ry="3.5" fill="#d4d6da"/><rect x="813.5" y="44" width="13" height="13" rx="1" fill="#e2e4ea"/><path d="M769 8.500H784M769 11.500H784" stroke="#55504c" stroke-width="1"/><rect x="848" y="19" width="8" height="6" fill="#e8e8e8"/><path d="M850 19v-2.5a2.5 2.5 0 0 1 5 0" stroke="#e8e8e8" stroke-width="1.2" fill="none"/><path d="M804 96.5L794 101.5L804 106.5M802 101.5H794.5" stroke="#c8ccd4" stroke-width="1.1" fill="none"/><text x="807" y="106" font-size="12.5" fill="#c4c8d0" font-family="Liberation Sans,sans-serif">Persp</text></g>
</svg>
<svg class="abs" style="left:0;top:673px;overflow:hidden;will-change:transform" width="875" height="345" viewBox="0 0 875 345">
<defs><clipPath id="gl"><polygon points="91,0 170,0 0,292 0,124"/></clipPath><clipPath id="gr"><polygon points="611,0 700,0 875,319 875,345 737,345"/></clipPath><clipPath id="gc"><polygon points="247,0 566,0 657,345 111,345"/></clipPath><clipPath id="gwl"><polygon points="179,0 247,0 111,345 0,345 0,311"/></clipPath><clipPath id="gwr"><polygon points="566,0 611,0 737,345 656,345"/></clipPath><radialGradient id="cap2" cx="0.58" cy="0.3" r="0.6"><stop offset="0" stop-color="#7af8ff"/><stop offset="0.25" stop-color="#2fdcf6"/><stop offset="1" stop-color="#25bbdc"/></radialGradient></defs>
<rect width="875" height="345" fill="#6a625d"/>
<polygon points="91,0 700,0 875,319 875,345 0,345 0,124" fill="#f5f5f5"/>
<g clip-path="url(#gl)">
<path d="M-240 474.9L105.8 -6.9M-210.4 475.2L120.4 -7M-180.8 475.5L135 -7.1M-151.1 475.8L149.7 -7.1M-121.4 476.2L164.3 -7.2M-91.6 476.5L178.9 -7.2M-61.8 476.8L193.6 -7.3M-31.9 477.2L208.3 -7.4M-2 477.5L223 -7.4M28.1 477.8L237.7 -7.5M58.1 478.1L252.4 -7.6M88.2 478.5L267.2 -7.6M118.4 478.8L281.9 -7.7M148.7 479.1L296.7 -7.8M179 479.5L311.5 -7.8M209.3 479.8L326.2 -7.9M239.7 480.1L341.1 -7.9M270.2 480.5L355.9 -8M300.7 480.8L370.7 -8.1M331.3 481.2L385.6 -8.1M361.9 481.5L400.4 -8.2M392.6 481.8L415.3 -8.3M423.4 482.2L430.2 -8.3M454.2 482.5L445.1 -8.4M485.1 482.8L460 -8.5M516 483.2L474.9 -8.5M547 483.5L489.9 -8.6M578.1 483.9L504.8 -8.7M609.2 484.2L519.8 -8.7M640.4 484.6L534.8 -8.8M671.7 484.9L549.8 -8.8M703 485.2L564.8 -8.9M734.3 485.6L579.8 -9M765.7 485.9L594.9 -9M797.2 486.3L609.9 -9.1M828.8 486.6L625 -9.2M860.4 487L640.1 -9.2M892 487.3L655.2 -9.3M923.8 487.7L670.3 -9.4M955.6 488L685.4 -9.4M987.4 488.4L700.5 -9.5M1019.3 488.7L715.7 -9.6M1051.3 489.1L730.9 -9.6M1083.4 489.4L746.1 -9.7M1115.5 489.8L761.2 -9.8M1147.6 490.1L776.5 -9.8M1179.9 490.5L791.7 -9.9M1212.2 490.8L806.9 -10M1244.5 491.2L822.2 -10M1277 491.6L837.4 -10.1M1309.4 491.9L852.7 -10.2M1342 492.3L868 -10.2M1374.6 492.6L883.3 -10.3M1407.3 493L898.7 -10.4M1440 493.4L914 -10.4M1472.9 493.7L929.4 -10.5M-225.8 455.2L1450 472.6M-199.3 418.2L1407.3 432.9M-174.8 384L1368 396.5M-152.1 352.4L1331.8 362.9M-131 323L1298.3 331.8M-111.4 295.7L1267.2 302.9M-93.1 270.2L1238.3 276.1M-75.9 246.3L1211.3 251.1M-59.9 224L1186.1 227.7M-44.8 203L1162.5 205.7M-30.6 183.2L1140.3 185.2M-17.3 164.6L1119.4 165.8M-4.6 147L1099.7 147.6M7.3 130.3L1081.2 130.3M18.6 114.5L1063.6 114M29.4 99.6L1047 98.6M39.6 85.4L1031.2 84M49.3 71.9L1016.2 70.1M58.5 59L1002 56.9M67.3 46.7L988.4 44.3M75.7 35L975.5 32.3M83.7 23.8L963.2 20.9M91.4 13.1L951.4 10M98.8 2.9L940.1 -0.5M105.8 -6.9L929.4 -10.5" stroke="#444" stroke-opacity="0.3" stroke-width="1" fill="none"/>
</g>
<g clip-path="url(#gr)">
<path d="M-240 474.9L105.8 -6.9M-210.4 475.2L120.4 -7M-180.8 475.5L135 -7.1M-151.1 475.8L149.7 -7.1M-121.4 476.2L164.3 -7.2M-91.6 476.5L178.9 -7.2M-61.8 476.8L193.6 -7.3M-31.9 477.2L208.3 -7.4M-2 477.5L223 -7.4M28.1 477.8L237.7 -7.5M58.1 478.1L252.4 -7.6M88.2 478.5L267.2 -7.6M118.4 478.8L281.9 -7.7M148.7 479.1L296.7 -7.8M179 479.5L311.5 -7.8M209.3 479.8L326.2 -7.9M239.7 480.1L341.1 -7.9M270.2 480.5L355.9 -8M300.7 480.8L370.7 -8.1M331.3 481.2L385.6 -8.1M361.9 481.5L400.4 -8.2M392.6 481.8L415.3 -8.3M423.4 482.2L430.2 -8.3M454.2 482.5L445.1 -8.4M485.1 482.8L460 -8.5M516 483.2L474.9 -8.5M547 483.5L489.9 -8.6M578.1 483.9L504.8 -8.7M609.2 484.2L519.8 -8.7M640.4 484.6L534.8 -8.8M671.7 484.9L549.8 -8.8M703 485.2L564.8 -8.9M734.3 485.6L579.8 -9M765.7 485.9L594.9 -9M797.2 486.3L609.9 -9.1M828.8 486.6L625 -9.2M860.4 487L640.1 -9.2M892 487.3L655.2 -9.3M923.8 487.7L670.3 -9.4M955.6 488L685.4 -9.4M987.4 488.4L700.5 -9.5M1019.3 488.7L715.7 -9.6M1051.3 489.1L730.9 -9.6M1083.4 489.4L746.1 -9.7M1115.5 489.8L761.2 -9.8M1147.6 490.1L776.5 -9.8M1179.9 490.5L791.7 -9.9M1212.2 490.8L806.9 -10M1244.5 491.2L822.2 -10M1277 491.6L837.4 -10.1M1309.4 491.9L852.7 -10.2M1342 492.3L868 -10.2M1374.6 492.6L883.3 -10.3M1407.3 493L898.7 -10.4M1440 493.4L914 -10.4M1472.9 493.7L929.4 -10.5M-225.8 455.2L1450 472.6M-199.3 418.2L1407.3 432.9M-174.8 384L1368 396.5M-152.1 352.4L1331.8 362.9M-131 323L1298.3 331.8M-111.4 295.7L1267.2 302.9M-93.1 270.2L1238.3 276.1M-75.9 246.3L1211.3 251.1M-59.9 224L1186.1 227.7M-44.8 203L1162.5 205.7M-30.6 183.2L1140.3 185.2M-17.3 164.6L1119.4 165.8M-4.6 147L1099.7 147.6M7.3 130.3L1081.2 130.3M18.6 114.5L1063.6 114M29.4 99.6L1047 98.6M39.6 85.4L1031.2 84M49.3 71.9L1016.2 70.1M58.5 59L1002 56.9M67.3 46.7L988.4 44.3M75.7 35L975.5 32.3M83.7 23.8L963.2 20.9M91.4 13.1L951.4 10M98.8 2.9L940.1 -0.5M105.8 -6.9L929.4 -10.5" stroke="#444" stroke-opacity="0.3" stroke-width="1" fill="none"/>
</g>
<polygon points="247,0 566,0 657,345 111,345" fill="#f4f4f3"/>
<g clip-path="url(#gc)">
<path d="M-54.3 476.9L197.3 -7.3M-16.9 477.3L215.6 -7.4M20.5 477.7L234 -7.5M95.8 478.6L270.8 -7.6M133.5 479L289.3 -7.7M171.4 479.4L307.8 -7.8M247.3 480.2L344.8 -8M285.4 480.6L363.3 -8M323.6 481.1L381.8 -8.1M400.3 481.9L419 -8.3M438.8 482.3L437.6 -8.4M477.4 482.8L456.3 -8.4M554.8 483.6L493.6 -8.6M593.7 484L512.3 -8.7M632.6 484.5L531 -8.8M710.8 485.3L568.5 -8.9M750 485.8L587.3 -9M789.3 486.2L606.1 -9.1M868.3 487.1L643.8 -9.3M907.9 487.5L662.7 -9.3M947.6 487.9L681.6 -9.4M1027.3 488.8L719.5 -9.6M1067.3 489.2L738.5 -9.7M1107.4 489.7L757.4 -9.7M-91.6 476.5L1147.6 490.1M-64.8 428.5L1110.1 439.6M-18.5 345.7L1045.8 353M1.6 309.8L1018.1 315.6M20 276.9L992.7 281.5M52.5 218.9L948.1 221.4M66.9 193.1L928.4 194.8M80.2 169.2L910.2 170.3M104.3 126.3L877.4 126.2M115.1 106.9L862.7 106.4M125.2 88.8L849 87.8M143.7 55.7L823.9 54.1M152.2 40.6L812.5 38.7M160.2 26.3L801.7 24.2M174.8 0.1L782 -2.4" stroke="#000" stroke-opacity="0.05" stroke-width="0.8" fill="none"/>
<g fill="#a8aaa8"><polygon points="-93,476.5 -90.2,476.5 179.6,-7.2 178.3,-7.2"/><polygon points="-96.1,475.8 -86.5,475.9 -85.4,473.9 -94.9,473.8"/><polygon points="-3.3,311.6 4.6,311.6 5.3,310.2 -2.6,310.2"/><polygon points="-2.1,309.4 5.8,309.4 6.5,308 -1.3,308"/><polygon points="62.8,194.4 69.5,194.4 70.1,193.4 63.3,193.4"/><polygon points="63.7,192.8 70.4,192.8 70.9,191.9 64.2,191.8"/><polygon points="111.6,107.9 117.5,107.9 117.9,107.1 112,107.1"/><polygon points="112.3,106.7 118.1,106.7 118.6,105.9 112.7,105.9"/><polygon points="149.2,41.4 154.4,41.3 154.7,40.8 149.5,40.8"/><polygon points="149.7,40.4 154.9,40.4 155.2,39.8 150,39.8"/><polygon points="-94,476.5 -89.2,476.5 -78.2,456.7 -82.9,456.7"/><polygon points="-72.2,437.7 -67.6,437.7 -63,429.4 -67.5,429.4"/><polygon points="-66.5,427.5 -62,427.6 -57.5,419.5 -62,419.4"/><polygon points="-52.1,401.9 -47.7,401.9 -29.3,368.9 -33.6,368.9"/><polygon points="-24.8,353.3 -20.6,353.3 -16.8,346.5 -21,346.4"/><polygon points="-20.1,344.9 -16,345 -12.3,338.3 -16.3,338.2"/><polygon points="-8.2,323.8 -4.2,323.8 11.1,296.3 7.2,296.3"/><polygon points="14.5,283.3 18.3,283.3 21.5,277.6 17.8,277.6"/><polygon points="18.5,276.3 22.2,276.3 25.4,270.7 21.6,270.7"/><polygon points="28.5,258.5 32.1,258.5 45,235.3 41.5,235.3"/><polygon points="47.7,224.3 51.2,224.3 53.9,219.4 50.4,219.4"/><polygon points="51,218.3 54.5,218.4 57.2,213.6 53.7,213.6"/><polygon points="59.5,203.2 62.9,203.2 74,183.4 70.7,183.4"/><polygon points="76,173.9 79.3,173.9 81.6,169.7 78.4,169.7"/><polygon points="78.9,168.8 82.1,168.8 84.4,164.7 81.2,164.7"/><polygon points="86.2,155.7 89.4,155.7 98.9,138.5 95.9,138.5"/><polygon points="100.5,130.3 103.5,130.3 105.5,126.7 102.5,126.7"/><polygon points="103,125.9 106,125.9 108,122.3 105,122.3"/><polygon points="109.4,114.5 112.3,114.5 120.7,99.5 117.8,99.5"/><polygon points="121.8,92.3 124.7,92.3 126.5,89.1 123.6,89.1"/><polygon points="124,88.4 126.9,88.4 128.6,85.3 125.8,85.3"/><polygon points="129.7,78.4 132.4,78.4 139.8,65.2 137.1,65.2"/><polygon points="140.7,58.8 143.3,58.8 144.9,56 142.2,56"/><polygon points="142.6,55.4 145.3,55.4 146.8,52.6 144.2,52.6"/><polygon points="147.6,46.5 150.2,46.5 156.7,34.8 154.2,34.8"/><polygon points="157.3,29.1 159.9,29.1 161.3,26.6 158.8,26.6"/><polygon points="159.1,26.1 161.6,26 163,23.6 160.5,23.6"/><polygon points="163.5,18.2 166,18.2 171.8,7.7 169.4,7.7"/><polygon points="172.2,2.6 174.6,2.6 175.9,0.3 173.5,0.3"/><polygon points="173.8,-0.2 176.2,-0.2 177.4,-2.4 175,-2.4"/><polygon points="56.7,478.1 59.5,478.2 253.1,-7.6 251.7,-7.6"/><polygon points="53.6,477.5 63.2,477.6 64,475.6 54.4,475.5"/><polygon points="120.5,312.3 128.4,312.3 129,310.9 121,310.9"/><polygon points="121.4,310.1 129.3,310.1 129.9,308.7 121.9,308.7"/><polygon points="168.2,194.6 174.9,194.6 175.3,193.6 168.6,193.6"/><polygon points="168.8,193 175.6,193 175.9,192.1 169.2,192"/><polygon points="203.3,107.8 209.2,107.8 209.5,107.1 203.6,107.1"/><polygon points="203.8,106.6 209.7,106.6 210,105.9 204.1,105.9"/><polygon points="230.3,41.1 235.6,41.1 235.8,40.5 230.6,40.5"/><polygon points="230.7,40.2 235.9,40.2 236.2,39.6 231,39.6"/><polygon points="55.7,478.1 60.5,478.2 68.5,458.2 63.7,458.2"/><polygon points="71.4,439.1 76.1,439.1 79.4,430.7 74.8,430.7"/><polygon points="75.5,428.9 80.1,428.9 83.4,420.7 78.8,420.7"/><polygon points="85.9,403.1 90.4,403.1 103.6,369.9 99.3,369.9"/><polygon points="105.6,354.2 109.8,354.2 112.5,347.4 108.4,347.3"/><polygon points="109,345.8 113.1,345.8 115.8,339.1 111.7,339.1"/><polygon points="117.5,324.5 121.6,324.6 132.6,297 128.7,296.9"/><polygon points="133.9,283.9 137.8,283.9 140,278.1 136.2,278.1"/><polygon points="136.7,276.8 140.5,276.9 142.8,271.2 139,271.2"/><polygon points="143.9,259 147.6,259 156.9,235.7 153.3,235.7"/><polygon points="157.8,224.6 161.3,224.6 163.3,219.7 159.7,219.7"/><polygon points="160.2,218.7 163.7,218.7 165.6,213.9 162.1,213.9"/><polygon points="166.3,203.4 169.7,203.4 177.6,183.5 174.3,183.5"/><polygon points="178.1,174 181.4,174 183.1,169.8 179.8,169.8"/><polygon points="180.2,168.9 183.5,168.9 185.1,164.8 181.9,164.8"/><polygon points="185.5,155.8 188.7,155.8 195.5,138.6 192.4,138.6"/><polygon points="195.7,130.3 198.8,130.3 200.2,126.7 197.2,126.7"/><polygon points="197.5,125.9 200.6,125.9 202,122.3 199,122.3"/><polygon points="202.1,114.5 205.1,114.5 211.1,99.4 208.2,99.4"/><polygon points="211.1,92.2 214,92.2 215.2,89 212.4,89"/><polygon points="212.7,88.3 215.5,88.3 216.8,85.1 213.9,85.1"/><polygon points="216.7,78.3 219.5,78.3 224.8,65 222,65"/><polygon points="224.6,58.6 227.3,58.6 228.4,55.8 225.7,55.8"/><polygon points="226,55.2 228.7,55.2 229.8,52.4 227.1,52.4"/><polygon points="229.6,46.3 232.2,46.3 236.9,34.5 234.3,34.5"/><polygon points="236.6,28.9 239.1,28.9 240.1,26.3 237.6,26.4"/><polygon points="237.8,25.8 240.3,25.8 241.3,23.3 238.8,23.3"/><polygon points="241,17.9 243.5,17.9 247.7,7.4 245.2,7.4"/><polygon points="247.3,2.3 249.7,2.3 250.6,0 248.2,0"/><polygon points="248.4,-0.5 250.8,-0.5 251.7,-2.7 249.3,-2.7"/><polygon points="207.9,479.8 210.7,479.8 327,-7.9 325.5,-7.9"/><polygon points="204.6,479.1 214.3,479.2 214.8,477.2 205.1,477.1"/><polygon points="245.3,313 253.3,313 253.6,311.7 245.6,311.6"/><polygon points="245.8,310.8 253.8,310.8 254.2,309.4 246.2,309.4"/><polygon points="274.2,194.8 281,194.9 281.3,193.9 274.5,193.8"/><polygon points="274.6,193.2 281.4,193.3 281.6,192.3 274.9,192.2"/><polygon points="295.6,107.8 301.5,107.8 301.7,107 295.7,107"/><polygon points="295.9,106.5 301.8,106.5 301.9,105.8 296,105.8"/><polygon points="311.9,40.9 317.2,40.9 317.3,40.3 312.1,40.3"/><polygon points="312.2,40 317.4,39.9 317.5,39.4 312.3,39.4"/><polygon points="206.9,479.8 211.7,479.8 216.5,459.8 211.7,459.7"/><polygon points="216.4,440.5 221.1,440.5 223.1,432.1 218.4,432.1"/><polygon points="218.9,430.2 223.5,430.3 225.4,422.1 220.9,422"/><polygon points="225.2,404.3 229.6,404.3 237.6,370.9 233.3,370.9"/><polygon points="237.1,355.1 241.3,355.2 242.9,348.2 238.8,348.2"/><polygon points="239.1,346.7 243.3,346.7 244.9,340 240.8,339.9"/><polygon points="244.3,325.3 248.4,325.3 255,297.6 251,297.6"/><polygon points="254.2,284.4 258.1,284.5 259.5,278.7 255.6,278.7"/><polygon points="255.9,277.4 259.8,277.4 261.1,271.7 257.3,271.7"/><polygon points="260.3,259.5 264,259.5 269.6,236.1 265.9,236.1"/><polygon points="268.6,224.9 272.2,224.9 273.4,220 269.8,220"/><polygon points="270.1,219 273.6,219 274.8,214.2 271.3,214.1"/><polygon points="273.8,203.7 277.2,203.7 282,183.7 278.6,183.7"/><polygon points="280.9,174.2 284.2,174.2 285.2,170 282,170"/><polygon points="282.2,169 285.5,169 286.4,164.9 283.2,164.9"/><polygon points="285.4,155.9 288.6,155.9 292.7,138.6 289.6,138.6"/><polygon points="291.6,130.3 294.6,130.3 295.5,126.7 292.5,126.7"/><polygon points="292.7,125.9 295.7,125.9 296.6,122.3 293.5,122.3"/><polygon points="295.4,114.4 298.4,114.4 302,99.3 299.1,99.3"/><polygon points="300.8,92.1 303.7,92.1 304.5,88.9 301.6,88.9"/><polygon points="301.8,88.2 304.6,88.2 305.4,85 302.6,85"/><polygon points="304.2,78.1 307,78.1 310.2,64.8 307.4,64.8"/><polygon points="309,58.4 311.7,58.4 312.4,55.6 309.7,55.6"/><polygon points="309.8,55 312.5,55 313.2,52.2 310.5,52.2"/><polygon points="312,46.1 314.6,46.1 317.4,34.3 314.8,34.3"/><polygon points="316.2,28.6 318.8,28.6 319.4,26.1 316.8,26.1"/><polygon points="317,25.5 319.5,25.5 320.1,23 317.6,23.1"/><polygon points="318.9,17.6 321.4,17.6 323.9,7.1 321.4,7.1"/><polygon points="322.7,2 325.1,2 325.6,-0.3 323.2,-0.3"/><polygon points="323.3,-0.8 325.7,-0.8 326.3,-3 323.9,-3"/><polygon points="360.5,481.5 363.4,481.5 401.1,-8.2 399.7,-8.2"/><polygon points="357.1,480.8 366.9,480.9 367,478.9 357.3,478.8"/><polygon points="371.1,313.7 379.2,313.8 379.3,312.4 371.2,312.3"/><polygon points="371.3,311.5 379.3,311.5 379.4,310.1 371.4,310.1"/><polygon points="381,195.1 387.9,195.1 387.9,194.1 381.1,194.1"/><polygon points="381.1,193.5 388,193.5 388.1,192.5 381.2,192.5"/><polygon points="388.3,107.7 394.3,107.7 394.3,106.9 388.4,106.9"/><polygon points="388.4,106.5 394.4,106.5 394.4,105.7 388.5,105.7"/><polygon points="393.9,40.7 399.2,40.7 399.2,40.1 394,40.1"/><polygon points="394,39.7 399.3,39.7 399.3,39.1 394.1,39.1"/><polygon points="359.5,481.5 364.4,481.5 365.9,461.3 361.1,461.3"/><polygon points="362.7,441.9 367.4,441.9 368,433.5 363.4,433.4"/><polygon points="363.5,431.6 368.2,431.6 368.8,423.4 364.2,423.3"/><polygon points="365.7,405.5 370.2,405.5 372.7,371.9 368.4,371.9"/><polygon points="369.7,356.1 373.9,356.1 374.5,349.2 370.2,349.1"/><polygon points="370.3,347.6 374.6,347.6 375.1,340.8 370.9,340.8"/><polygon points="372.1,326.1 376.2,326.1 378.3,298.3 374.4,298.2"/><polygon points="375.4,285 379.3,285 379.8,279.2 375.9,279.2"/><polygon points="376,278 379.9,278 380.3,272.3 376.5,272.3"/><polygon points="377.5,259.9 381.2,259.9 383,236.5 379.4,236.4"/><polygon points="380.3,225.3 383.9,225.3 384.2,220.4 380.7,220.4"/><polygon points="380.8,219.3 384.3,219.3 384.7,214.4 381.2,214.4"/><polygon points="382,203.9 385.5,203.9 387,183.9 383.6,183.9"/><polygon points="384.4,174.3 387.7,174.3 388.1,170.1 384.8,170.1"/><polygon points="384.8,169.1 388.1,169.2 388.4,165 385.2,165"/><polygon points="385.9,156 389.1,156 390.4,138.6 387.3,138.6"/><polygon points="388,130.3 391.1,130.3 391.4,126.7 388.3,126.7"/><polygon points="388.3,125.8 391.4,125.8 391.7,122.2 388.6,122.2"/><polygon points="389.3,114.4 392.3,114.4 393.4,99.2 390.5,99.2"/><polygon points="391.1,92 394,92 394.2,88.8 391.4,88.8"/><polygon points="391.4,88.1 394.3,88.1 394.5,84.9 391.7,84.9"/><polygon points="392.2,78 395.1,78 396.1,64.7 393.3,64.7"/><polygon points="393.8,58.3 396.6,58.2 396.8,55.4 394.1,55.4"/><polygon points="394.1,54.8 396.8,54.8 397,52 394.3,52"/><polygon points="394.8,45.9 397.5,45.9 398.4,34.1 395.8,34.1"/><polygon points="396.3,28.4 398.8,28.4 399,25.8 396.5,25.8"/><polygon points="396.5,25.3 399.1,25.3 399.2,22.8 396.7,22.8"/><polygon points="397.1,17.3 399.7,17.3 400.5,6.8 398,6.8"/><polygon points="398.4,1.7 400.8,1.7 401,-0.6 398.6,-0.6"/><polygon points="398.6,-1.1 401.1,-1.1 401.2,-3.3 398.8,-3.3"/><polygon points="514.6,483.2 517.5,483.2 475.6,-8.5 474.2,-8.5"/><polygon points="511,482.5 520.9,482.6 520.8,480.5 510.9,480.4"/><polygon points="497.9,314.4 506,314.5 505.9,313.1 497.8,313"/><polygon points="497.7,312.2 505.8,312.3 505.7,310.9 497.6,310.8"/><polygon points="488.5,195.3 495.4,195.3 495.3,194.3 488.4,194.3"/><polygon points="488.4,193.7 495.3,193.7 495.2,192.7 488.3,192.7"/><polygon points="481.6,107.6 487.6,107.6 487.6,106.9 481.6,106.9"/><polygon points="481.5,106.4 487.5,106.4 487.5,105.7 481.5,105.7"/><polygon points="476.4,40.4 481.7,40.4 481.6,39.8 476.3,39.8"/><polygon points="476.3,39.5 481.6,39.5 481.5,38.9 476.2,38.9"/><polygon points="513.6,483.2 518.5,483.2 516.8,462.9 511.9,462.8"/><polygon points="510.3,443.3 515.1,443.4 514.4,434.9 509.7,434.8"/><polygon points="509.5,433 514.2,433 513.5,424.7 508.8,424.7"/><polygon points="507.4,406.7 511.9,406.8 509,373 504.6,372.9"/><polygon points="503.3,357 507.6,357 507,350.1 502.8,350"/><polygon points="502.7,348.5 506.9,348.5 506.3,341.7 502.1,341.7"/><polygon points="500.9,326.9 505,326.9 502.6,298.9 498.6,298.9"/><polygon points="497.6,285.6 501.5,285.6 501,279.8 497.1,279.8"/><polygon points="497,278.5 500.9,278.5 500.4,272.8 496.5,272.8"/><polygon points="495.5,260.4 499.3,260.4 497.3,236.8 493.6,236.8"/><polygon points="492.7,225.6 496.3,225.6 495.9,220.7 492.3,220.7"/><polygon points="492.2,219.6 495.8,219.6 495.4,214.7 491.8,214.7"/><polygon points="491,204.2 494.5,204.2 492.7,184.1 489.3,184.1"/><polygon points="488.6,174.4 491.9,174.5 491.5,170.2 488.2,170.2"/><polygon points="488.1,169.3 491.5,169.3 491.1,165.1 487.8,165.1"/><polygon points="487.1,156 490.3,156 488.8,138.7 485.7,138.7"/><polygon points="485,130.3 488.1,130.3 487.8,126.6 484.7,126.6"/><polygon points="484.6,125.8 487.7,125.8 487.4,122.2 484.3,122.2"/><polygon points="483.7,114.3 486.7,114.3 485.4,99.2 482.5,99.2"/><polygon points="481.9,91.9 484.8,91.9 484.5,88.6 481.6,88.6"/><polygon points="481.5,87.9 484.4,87.9 484.2,84.8 481.3,84.8"/><polygon points="480.7,77.8 483.6,77.8 482.4,64.5 479.6,64.5"/><polygon points="479.1,58.1 481.9,58.1 481.6,55.2 478.9,55.2"/><polygon points="478.8,54.6 481.6,54.6 481.3,51.8 478.6,51.8"/><polygon points="478.1,45.7 480.8,45.6 479.8,33.8 477.2,33.8"/><polygon points="476.7,28.1 479.3,28.1 479.1,25.6 476.5,25.6"/><polygon points="476.4,25 479,25 478.8,22.5 476.2,22.5"/><polygon points="475.8,17.1 478.3,17 477.4,6.5 474.9,6.5"/><polygon points="474.5,1.4 477,1.4 476.8,-0.9 474.3,-0.9"/><polygon points="474.3,-1.4 476.7,-1.4 476.5,-3.6 474.1,-3.6"/><polygon points="670.2,484.9 673.1,484.9 550.5,-8.9 549.1,-8.8"/><polygon points="666.5,484.2 676.5,484.3 676,482.2 666,482.1"/><polygon points="625.7,315.2 633.9,315.2 633.5,313.8 625.3,313.8"/><polygon points="625.1,312.9 633.3,313 633,311.6 624.8,311.5"/><polygon points="596.7,195.5 603.7,195.5 603.4,194.5 596.5,194.5"/><polygon points="596.4,193.9 603.3,193.9 603,192.9 596.1,192.9"/><polygon points="575.5,107.6 581.5,107.6 581.3,106.8 575.3,106.8"/><polygon points="575.2,106.3 581.2,106.3 581,105.6 575,105.6"/><polygon points="559.2,40.2 564.5,40.2 564.4,39.6 559.1,39.6"/><polygon points="559,39.3 564.3,39.2 564.2,38.7 558.9,38.7"/><polygon points="669.1,484.9 674.2,484.9 669,464.5 664.2,464.4"/><polygon points="659.4,444.8 664.2,444.8 662,436.3 657.3,436.2"/><polygon points="656.8,434.4 661.6,434.4 659.5,426 654.8,426"/><polygon points="650.4,408 655,408 646.5,374 642.1,374"/><polygon points="638.2,358 642.5,358 640.7,351 636.4,350.9"/><polygon points="636.1,349.4 640.4,349.4 638.6,342.6 634.4,342.5"/><polygon points="630.8,327.7 634.9,327.7 627.9,299.6 623.9,299.5"/><polygon points="620.6,286.2 624.6,286.2 623.1,280.4 619.2,280.4"/><polygon points="618.9,279.1 622.8,279.1 621.4,273.4 617.5,273.3"/><polygon points="614.4,260.9 618.3,260.9 612.4,237.2 608.7,237.2"/><polygon points="605.9,225.9 609.6,226 608.3,221 604.7,221"/><polygon points="604.4,219.9 608,219.9 606.8,215 603.2,215"/><polygon points="600.7,204.4 604.2,204.5 599.1,184.2 595.7,184.2"/><polygon points="593.4,174.6 596.7,174.6 595.7,170.3 592.3,170.3"/><polygon points="592.1,169.4 595.4,169.4 594.4,165.2 591.1,165.2"/><polygon points="588.9,156.1 592.1,156.1 587.8,138.7 584.6,138.7"/><polygon points="582.6,130.3 585.7,130.3 584.8,126.6 581.7,126.6"/><polygon points="581.5,125.8 584.6,125.8 583.7,122.2 580.6,122.2"/><polygon points="578.6,114.3 581.7,114.3 577.9,99.1 574.9,99.1"/><polygon points="573.1,91.8 576.1,91.8 575.3,88.5 572.4,88.5"/><polygon points="572.2,87.8 575.1,87.8 574.3,84.6 571.4,84.6"/><polygon points="569.7,77.7 572.6,77.7 569.2,64.3 566.4,64.3"/><polygon points="564.9,57.9 567.6,57.9 566.9,55 564.2,55"/><polygon points="564,54.4 566.8,54.4 566.1,51.6 563.3,51.6"/><polygon points="561.8,45.4 564.5,45.4 561.6,33.6 558.9,33.6"/><polygon points="557.5,27.8 560.1,27.8 559.5,25.3 556.9,25.3"/><polygon points="556.8,24.8 559.4,24.7 558.7,22.2 556.2,22.3"/><polygon points="554.8,16.8 557.4,16.8 554.7,6.2 552.2,6.2"/><polygon points="551,1.1 553.5,1.1 552.9,-1.2 550.4,-1.2"/><polygon points="550.3,-1.7 552.8,-1.7 552.2,-3.9 549.8,-3.9"/><polygon points="827.3,486.6 830.3,486.6 625.7,-9.2 624.3,-9.2"/><polygon points="823.5,485.9 833.6,486 832.7,483.9 822.6,483.8"/><polygon points="754.5,315.9 762.8,316 762.2,314.6 753.9,314.5"/><polygon points="753.6,313.7 761.8,313.7 761.2,312.3 753,312.2"/><polygon points="705.7,195.7 712.7,195.7 712.3,194.7 705.3,194.7"/><polygon points="705,194.1 712,194.1 711.6,193.1 704.6,193.1"/><polygon points="669.9,107.5 676,107.5 675.6,106.7 669.6,106.7"/><polygon points="669.4,106.3 675.5,106.3 675.1,105.5 669.1,105.5"/><polygon points="642.5,40 647.9,40 647.6,39.4 642.3,39.4"/><polygon points="642.1,39 647.5,39 647.2,38.4 641.9,38.4"/><polygon points="826.2,486.6 831.3,486.7 822.8,466 817.8,466"/><polygon points="809.8,446.3 814.6,446.3 811,437.7 806.3,437.7"/><polygon points="805.5,435.8 810.3,435.8 806.8,427.4 802,427.3"/><polygon points="794.6,409.2 799.3,409.2 785.1,375.1 780.7,375"/><polygon points="774.1,358.9 778.5,359 775.6,351.9 771.2,351.9"/><polygon points="770.6,350.3 774.9,350.4 772.1,343.4 767.8,343.4"/><polygon points="761.7,328.5 765.9,328.5 754.2,300.2 750.1,300.2"/><polygon points="744.7,286.8 748.6,286.8 746.2,281 742.3,280.9"/><polygon points="741.7,279.6 745.7,279.7 743.3,273.9 739.4,273.9"/><polygon points="734.3,261.4 738.1,261.4 728.3,237.6 724.6,237.6"/><polygon points="719.9,226.3 723.6,226.3 721.5,221.3 717.9,221.3"/><polygon points="717.5,220.2 721.1,220.2 719.1,215.3 715.5,215.3"/><polygon points="711.1,204.7 714.7,204.7 706.3,184.4 702.8,184.4"/><polygon points="698.9,174.7 702.3,174.7 700.5,170.5 697.1,170.5"/><polygon points="696.8,169.5 700.1,169.5 698.4,165.3 695,165.3"/><polygon points="691.3,156.2 694.6,156.2 687.4,138.7 684.2,138.7"/><polygon points="680.7,130.3 683.9,130.3 682.4,126.6 679.2,126.6"/><polygon points="678.9,125.8 682,125.8 680.5,122.2 677.4,122.2"/><polygon points="674.2,114.2 677.2,114.2 670.9,99 667.9,99"/><polygon points="665,91.6 667.9,91.6 666.6,88.4 663.6,88.4"/><polygon points="663.3,87.7 666.3,87.7 664.9,84.5 662,84.5"/><polygon points="659.2,77.5 662.1,77.5 656.5,64.1 653.7,64.1"/><polygon points="651.1,57.7 653.8,57.7 652.7,54.8 649.9,54.8"/><polygon points="649.7,54.2 652.4,54.2 651.2,51.4 648.5,51.4"/><polygon points="646,45.2 648.7,45.2 643.8,33.3 641.1,33.3"/><polygon points="638.8,27.6 641.4,27.6 640.3,25 637.8,25.1"/><polygon points="637.5,24.5 640.1,24.5 639.1,22 636.5,22"/><polygon points="634.3,16.5 636.8,16.5 632.4,5.9 629.9,5.9"/><polygon points="627.8,0.8 630.3,0.8 629.4,-1.5 626.9,-1.5"/><polygon points="626.7,-2 629.2,-2 628.2,-4.3 625.8,-4.3"/><polygon points="985.9,488.4 988.9,488.4 701.3,-9.5 699.8,-9.5"/><polygon points="982,487.7 992.2,487.8 990.9,485.7 980.8,485.6"/><polygon points="884.3,316.7 892.7,316.7 891.8,315.3 883.5,315.2"/><polygon points="883,314.4 891.4,314.4 890.5,313 882.2,313"/><polygon points="815.4,195.9 822.5,196 821.9,194.9 814.8,194.9"/><polygon points="814.5,194.3 821.5,194.3 820.9,193.3 813.9,193.3"/><polygon points="764.9,107.4 771,107.4 770.5,106.7 764.4,106.7"/><polygon points="764.2,106.2 770.3,106.2 769.8,105.4 763.7,105.4"/><polygon points="726.2,39.7 731.6,39.7 731.3,39.1 725.9,39.1"/><polygon points="725.7,38.8 731,38.8 730.7,38.2 725.3,38.2"/><polygon points="984.9,488.3 990,488.4 978,467.7 973,467.6"/><polygon points="961.6,447.7 966.5,447.8 961.5,439.1 956.6,439.1"/><polygon points="955.5,437.2 960.4,437.2 955.5,428.8 950.7,428.7"/><polygon points="940.2,410.5 944.9,410.5 925,376.1 920.5,376.1"/><polygon points="911.2,359.9 915.6,359.9 911.5,352.8 907.1,352.8"/><polygon points="906.2,351.2 910.6,351.3 906.6,344.3 902.3,344.3"/><polygon points="893.7,329.3 897.9,329.3 881.4,300.9 877.4,300.9"/><polygon points="869.6,287.4 873.6,287.4 870.2,281.5 866.2,281.5"/><polygon points="865.5,280.2 869.5,280.2 866.1,274.4 862.2,274.4"/><polygon points="855,261.9 858.9,261.9 845,238 841.3,238"/><polygon points="834.8,226.6 838.4,226.6 835.6,221.6 831.9,221.6"/><polygon points="831.3,220.5 834.9,220.5 832.1,215.6 828.5,215.6"/><polygon points="822.3,205 825.9,205 814.1,184.6 810.7,184.6"/><polygon points="805.1,174.9 808.5,174.9 806,170.6 802.6,170.6"/><polygon points="802.1,169.7 805.5,169.7 803,165.5 799.7,165.4"/><polygon points="794.4,156.3 797.7,156.3 787.6,138.7 784.4,138.7"/><polygon points="779.5,130.3 782.7,130.3 780.6,126.6 777.4,126.6"/><polygon points="776.9,125.8 780.1,125.8 778,122.1 774.8,122.1"/><polygon points="770.3,114.2 773.4,114.2 764.5,98.9 761.5,98.9"/><polygon points="757.3,91.5 760.2,91.5 758.4,88.3 755.4,88.3"/><polygon points="755,87.6 758,87.6 756.1,84.4 753.2,84.4"/><polygon points="749.2,77.4 752.1,77.4 744.3,64 741.5,64"/><polygon points="737.7,57.5 740.5,57.5 738.9,54.6 736.1,54.6"/><polygon points="735.7,54 738.5,54 736.9,51.2 734.1,51.2"/><polygon points="730.6,45 733.3,45 726.4,33.1 723.8,33.1"/><polygon points="720.5,27.3 723.1,27.3 721.6,24.8 719,24.8"/><polygon points="718.7,24.2 721.3,24.2 719.8,21.7 717.2,21.7"/><polygon points="714.1,16.2 716.6,16.2 710.5,5.6 708,5.6"/><polygon points="705,0.5 707.5,0.4 706.2,-1.8 703.7,-1.8"/><polygon points="703.4,-2.3 705.9,-2.3 704.6,-4.6 702.2,-4.6"/><polygon points="1146.1,490.1 1149.2,490.1 777.2,-9.8 775.7,-9.8"/><polygon points="1142,489.4 1152.3,489.5 1150.7,487.4 1140.5,487.3"/><polygon points="1015.2,317.4 1023.6,317.5 1022.6,316 1014.2,316"/><polygon points="1013.5,315.1 1021.9,315.2 1020.9,313.8 1012.5,313.7"/><polygon points="925.9,196.2 933,196.2 932.2,195.2 925.1,195.1"/><polygon points="924.7,194.5 931.7,194.6 931,193.5 923.9,193.5"/><polygon points="860.4,107.4 866.5,107.4 866,106.6 859.8,106.6"/><polygon points="859.5,106.1 865.6,106.1 865,105.4 858.9,105.4"/><polygon points="810.4,39.5 815.8,39.5 815.3,38.9 809.9,38.9"/><polygon points="809.7,38.6 815.1,38.5 814.6,37.9 809.2,38"/><polygon points="1145.1,490.1 1150.2,490.2 1134.7,469.3 1129.6,469.2"/><polygon points="1114.8,449.2 1119.8,449.3 1113.3,440.6 1108.4,440.5"/><polygon points="1107,438.6 1111.8,438.7 1105.5,430.1 1100.7,430.1"/><polygon points="1087.1,411.7 1091.8,411.8 1066,377.2 1061.5,377.2"/><polygon points="1049.5,360.9 1053.9,360.9 1048.6,353.8 1044.2,353.7"/><polygon points="1043,352.2 1047.4,352.2 1042.2,345.2 1037.9,345.2"/><polygon points="1026.7,330.1 1031,330.1 1009.7,301.6 1005.6,301.6"/><polygon points="995.6,288 999.6,288.1 995.2,282.1 991.2,282.1"/><polygon points="990.2,280.8 994.2,280.8 989.9,275 985.9,275"/><polygon points="976.6,262.4 980.5,262.4 962.6,238.4 958.9,238.4"/><polygon points="950.4,227 954.1,227 950.4,222 946.7,222"/><polygon points="945.9,220.8 949.6,220.9 945.9,215.9 942.2,215.9"/><polygon points="934.3,205.2 937.9,205.2 922.7,184.8 919.2,184.8"/><polygon points="912,175 915.4,175 912.2,170.7 908.8,170.7"/><polygon points="908.1,169.8 911.5,169.8 908.4,165.6 905,165.6"/><polygon points="898.2,156.4 901.5,156.4 888.4,138.8 885.2,138.8"/><polygon points="878.9,130.3 882.1,130.3 879.3,126.6 876.2,126.6"/><polygon points="875.6,125.8 878.7,125.8 876,122.1 872.8,122.1"/><polygon points="866.9,114.1 870,114.1 858.6,98.8 855.6,98.8"/><polygon points="850.1,91.4 853.1,91.4 850.7,88.2 847.7,88.2"/><polygon points="847.2,87.5 850.2,87.5 847.8,84.2 844.8,84.2"/><polygon points="839.7,77.3 842.6,77.2 832.5,63.8 829.7,63.8"/><polygon points="824.9,57.3 827.7,57.3 825.5,54.4 822.8,54.4"/><polygon points="822.3,53.8 825.1,53.8 823,50.9 820.2,51"/><polygon points="815.6,44.8 818.4,44.8 809.5,32.8 806.8,32.8"/><polygon points="802.5,27.1 805.2,27.1 803.3,24.5 800.6,24.5"/><polygon points="800.2,24 802.8,23.9 801,21.4 798.4,21.4"/><polygon points="794.3,15.9 796.9,15.9 788.9,5.3 786.4,5.3"/><polygon points="782.6,0.1 785.1,0.1 783.4,-2.1 780.9,-2.1"/><polygon points="780.6,-2.6 783,-2.6 781.4,-4.9 778.9,-4.9"/><polygon points="-41.4,386.7 1077.6,395.8 1075.1,392.5 -39.6,383.5"/><polygon points="22.7,390.9 24.1,391 29.2,380.4 27.8,380.3"/><polygon points="24.9,391 26.3,391 31.3,380.4 30,380.4"/><polygon points="159.6,392.1 160.9,392.1 164.3,381.4 163,381.4"/><polygon points="161.8,392.1 163.1,392.1 166.5,381.4 165.2,381.4"/><polygon points="297.6,393.2 298.9,393.2 300.7,382.5 299.3,382.5"/><polygon points="299.8,393.2 301.2,393.2 302.9,382.5 301.5,382.5"/><polygon points="436.8,394.4 438.2,394.4 438.2,383.6 436.8,383.6"/><polygon points="439,394.4 440.4,394.4 440.4,383.6 439,383.6"/><polygon points="577.2,395.5 578.6,395.5 576.8,384.7 575.4,384.7"/><polygon points="579.5,395.5 580.9,395.6 579.1,384.7 577.7,384.7"/><polygon points="718.9,396.7 720.3,396.7 716.7,385.8 715.3,385.8"/><polygon points="721.2,396.7 722.6,396.7 719,385.8 717.6,385.8"/><polygon points="861.8,397.9 863.3,397.9 857.8,386.9 856.4,386.9"/><polygon points="864.1,397.9 865.5,397.9 860.1,386.9 858.7,386.9"/><polygon points="1006,399.1 1007.5,399.1 1000.2,388 998.8,388"/><polygon points="1008.3,399.1 1009.8,399.1 1002.5,388.1 1001.1,388.1"/><polygon points="-42,387.7 -28.5,387.8 -25.6,382.6 -39,382.4"/><polygon points="-14.9,388 -8.8,388 -6.1,382.7 -12.1,382.7"/><polygon points="-7.5,388 -1.4,388.1 1.4,382.8 -4.7,382.7"/><polygon points="12.2,388.2 39.4,388.4 41.8,383.1 14.8,382.9"/><polygon points="53,388.5 59.1,388.6 61.4,383.2 55.4,383.2"/><polygon points="60.5,388.6 66.6,388.6 68.9,383.3 62.8,383.3"/><polygon points="80.2,388.7 107.5,389 109.5,383.6 82.4,383.4"/><polygon points="121.2,389.1 127.3,389.1 129.2,383.8 123.1,383.7"/><polygon points="128.7,389.1 134.8,389.2 136.7,383.9 130.6,383.8"/><polygon points="148.5,389.3 175.9,389.5 177.5,384.2 150.3,384"/><polygon points="189.6,389.6 195.8,389.7 197.3,384.3 191.2,384.3"/><polygon points="197.2,389.7 203.4,389.7 204.8,384.4 198.7,384.3"/><polygon points="217.1,389.8 244.6,390.1 245.8,384.7 218.5,384.5"/><polygon points="258.4,390.2 264.6,390.2 265.7,384.9 259.5,384.8"/><polygon points="266,390.2 272.2,390.3 273.2,384.9 267,384.9"/><polygon points="286,390.4 313.6,390.6 314.4,385.3 286.9,385.1"/><polygon points="327.5,390.7 333.7,390.8 334.3,385.4 328.1,385.4"/><polygon points="335.1,390.8 341.3,390.9 341.9,385.5 335.7,385.4"/><polygon points="355.2,391 382.9,391.2 383.3,385.8 355.7,385.6"/><polygon points="396.8,391.3 403.1,391.4 403.3,386 397.1,385.9"/><polygon points="404.5,391.4 410.7,391.4 410.9,386 404.7,386"/><polygon points="424.7,391.5 452.5,391.8 452.4,386.4 424.7,386.2"/><polygon points="466.5,391.9 472.8,391.9 472.6,386.5 466.3,386.5"/><polygon points="474.2,391.9 480.5,392 480.2,386.6 473.9,386.6"/><polygon points="494.4,392.1 522.4,392.3 521.9,386.9 494.1,386.7"/><polygon points="536.5,392.5 542.8,392.5 542.1,387.1 535.8,387"/><polygon points="544.2,392.5 550.5,392.6 549.8,387.2 543.5,387.1"/><polygon points="564.5,392.7 592.7,392.9 591.7,387.5 563.7,387.3"/><polygon points="606.7,393 613.1,393.1 612,387.7 605.7,387.6"/><polygon points="614.5,393.1 620.8,393.1 619.7,387.7 613.4,387.7"/><polygon points="634.9,393.3 663.2,393.5 661.8,388.1 633.7,387.8"/><polygon points="677.3,393.6 683.7,393.7 682.1,388.2 675.8,388.2"/><polygon points="685.1,393.7 691.5,393.7 689.9,388.3 683.5,388.2"/><polygon points="705.7,393.8 734,394.1 732.1,388.6 704,388.4"/><polygon points="748.2,394.2 754.6,394.2 752.6,388.8 746.3,388.7"/><polygon points="756,394.3 762.4,394.3 760.4,388.8 754,388.8"/><polygon points="776.7,394.4 805.2,394.7 802.8,389.2 774.5,389"/><polygon points="819.4,394.8 825.9,394.8 823.4,389.3 817,389.3"/><polygon points="827.3,394.8 833.7,394.9 831.2,389.4 824.8,389.4"/><polygon points="848,395 876.6,395.2 873.8,389.8 845.4,389.5"/><polygon points="891,395.4 897.4,395.4 894.5,389.9 888.1,389.9"/><polygon points="898.9,395.4 905.3,395.5 902.3,390 895.9,389.9"/><polygon points="919.7,395.6 948.4,395.8 945.2,390.3 916.6,390.1"/><polygon points="962.8,395.9 969.3,396 965.9,390.5 959.5,390.4"/><polygon points="970.7,396 977.2,396.1 973.8,390.6 967.3,390.5"/><polygon points="991.6,396.2 1020.5,396.4 1016.8,390.9 988.1,390.7"/><polygon points="1035,396.5 1041.5,396.6 1037.6,391.1 1031.1,391"/><polygon points="1042.9,396.6 1049.4,396.6 1045.5,391.1 1039,391.1"/><polygon points="1063.9,396.8 1078.4,396.9 1074.3,391.4 1059.9,391.2"/><polygon points="36.3,247.8 970.3,251.3 968.7,249 37.5,245.6"/><polygon points="90.3,250.7 91.5,250.7 95,243.2 93.9,243.2"/><polygon points="92.2,250.7 93.3,250.7 96.8,243.3 95.7,243.2"/><polygon points="205,251.1 206.1,251.1 208.5,243.7 207.4,243.6"/><polygon points="206.8,251.1 208,251.1 210.3,243.7 209.2,243.7"/><polygon points="320.4,251.6 321.6,251.6 322.8,244.1 321.6,244.1"/><polygon points="322.3,251.6 323.4,251.6 324.6,244.1 323.5,244.1"/><polygon points="436.7,252 437.9,252 437.9,244.5 436.7,244.5"/><polygon points="438.6,252 439.8,252 439.7,244.5 438.6,244.5"/><polygon points="553.9,252.4 555.1,252.4 553.8,244.9 552.7,244.9"/><polygon points="555.8,252.4 557,252.5 555.7,244.9 554.5,244.9"/><polygon points="671.9,252.9 673.1,252.9 670.6,245.3 669.4,245.3"/><polygon points="673.8,252.9 675,252.9 672.5,245.3 671.3,245.3"/><polygon points="790.8,253.3 792,253.3 788.2,245.7 787.1,245.7"/><polygon points="792.7,253.4 793.9,253.4 790.1,245.7 788.9,245.7"/><polygon points="910.6,253.8 911.8,253.8 906.7,246.1 905.5,246.1"/><polygon points="912.5,253.8 913.7,253.8 908.6,246.2 907.4,246.1"/><polygon points="35.8,248.6 47.2,248.6 49.2,244.9 37.9,244.9"/><polygon points="58.6,248.7 63.7,248.7 65.6,245 60.5,245"/><polygon points="64.8,248.7 69.9,248.7 71.8,245 66.7,245"/><polygon points="81.3,248.8 104.1,248.8 105.8,245.1 83.2,245"/><polygon points="115.5,248.9 120.6,248.9 122.3,245.2 117.2,245.2"/><polygon points="121.8,248.9 126.9,248.9 128.5,245.2 123.4,245.2"/><polygon points="138.4,249 161.2,249.1 162.7,245.3 139.9,245.3"/><polygon points="172.7,249.1 177.8,249.1 179.2,245.4 174,245.4"/><polygon points="179,249.1 184.1,249.1 185.4,245.4 180.3,245.4"/><polygon points="195.6,249.2 218.5,249.3 219.7,245.5 196.8,245.5"/><polygon points="230,249.3 235.2,249.3 236.2,245.6 231.1,245.6"/><polygon points="236.3,249.3 241.5,249.4 242.5,245.6 237.4,245.6"/><polygon points="253,249.4 276.1,249.5 276.9,245.8 254,245.7"/><polygon points="287.6,249.5 292.8,249.6 293.5,245.8 288.4,245.8"/><polygon points="293.9,249.6 299.1,249.6 299.8,245.8 294.7,245.8"/><polygon points="310.7,249.6 333.8,249.7 334.3,246 311.3,245.9"/><polygon points="345.4,249.8 350.6,249.8 351,246 345.8,246"/><polygon points="351.7,249.8 356.9,249.8 357.4,246 352.2,246"/><polygon points="368.5,249.8 391.7,249.9 392,246.2 368.9,246.1"/><polygon points="403.4,250 408.6,250 408.7,246.2 403.5,246.2"/><polygon points="409.7,250 415,250 415.1,246.3 409.9,246.2"/><polygon points="426.6,250.1 449.9,250.1 449.8,246.4 426.7,246.3"/><polygon points="461.6,250.2 466.8,250.2 466.6,246.4 461.4,246.4"/><polygon points="468,250.2 473.2,250.2 473,246.5 467.8,246.4"/><polygon points="484.9,250.3 508.3,250.4 507.9,246.6 484.6,246.5"/><polygon points="520,250.4 525.2,250.4 524.8,246.7 519.5,246.6"/><polygon points="526.4,250.4 531.7,250.5 531.2,246.7 525.9,246.7"/><polygon points="543.4,250.5 566.8,250.6 566.2,246.8 542.8,246.7"/><polygon points="578.6,250.6 583.9,250.6 583.1,246.9 577.8,246.8"/><polygon points="585,250.7 590.3,250.7 589.5,246.9 584.3,246.9"/><polygon points="602.1,250.7 625.6,250.8 624.6,247 601.2,246.9"/><polygon points="637.4,250.8 642.7,250.9 641.6,247.1 636.4,247.1"/><polygon points="643.9,250.9 649.2,250.9 648.1,247.1 642.8,247.1"/><polygon points="661,250.9 684.6,251 683.3,247.2 659.8,247.1"/><polygon points="696.5,251.1 701.8,251.1 700.4,247.3 695.1,247.3"/><polygon points="703,251.1 708.3,251.1 706.9,247.3 701.6,247.3"/><polygon points="720.2,251.2 743.9,251.2 742.2,247.4 718.7,247.4"/><polygon points="755.7,251.3 761.1,251.3 759.4,247.5 754,247.5"/><polygon points="762.3,251.3 767.6,251.3 765.9,247.5 760.5,247.5"/><polygon points="779.5,251.4 803.3,251.5 801.4,247.7 777.7,247.6"/><polygon points="815.2,251.5 820.6,251.5 818.6,247.7 813.2,247.7"/><polygon points="821.8,251.5 827.2,251.6 825.1,247.7 819.7,247.7"/><polygon points="839.1,251.6 863,251.7 860.7,247.9 836.9,247.8"/><polygon points="874.9,251.7 880.3,251.8 878,247.9 872.6,247.9"/><polygon points="881.5,251.8 886.9,251.8 884.5,248 879.1,247.9"/><polygon points="898.9,251.8 922.9,251.9 920.3,248.1 896.4,248"/><polygon points="934.9,252 940.3,252 937.6,248.2 932.2,248.1"/><polygon points="941.5,252 946.9,252 944.2,248.2 938.8,248.2"/><polygon points="958.9,252.1 970.9,252.1 968.1,248.3 956.1,248.2"/><polygon points="92.2,147.8 893.8,148.3 892.6,146.6 93.1,146.2"/><polygon points="138.9,149.8 139.9,149.8 142.6,144.3 141.6,144.3"/><polygon points="140.5,149.8 141.5,149.8 144.1,144.3 143.1,144.3"/><polygon points="237.6,149.9 238.6,149.9 240.3,144.3 239.4,144.3"/><polygon points="239.2,149.9 240.1,149.9 241.9,144.3 240.9,144.3"/><polygon points="336.8,149.9 337.8,149.9 338.7,144.4 337.7,144.4"/><polygon points="338.4,149.9 339.4,149.9 340.3,144.4 339.3,144.4"/><polygon points="436.7,150 437.7,150 437.7,144.4 436.7,144.4"/><polygon points="438.3,150 439.3,150 439.3,144.4 438.3,144.4"/><polygon points="537.2,150 538.2,150 537.3,144.5 536.3,144.5"/><polygon points="538.8,150 539.8,150 538.9,144.5 537.9,144.5"/><polygon points="638.3,150.1 639.4,150.1 637.5,144.5 636.5,144.5"/><polygon points="640,150.1 641,150.1 639.1,144.5 638.1,144.5"/><polygon points="740.1,150.2 741.1,150.2 738.4,144.6 737.4,144.6"/><polygon points="741.7,150.2 742.8,150.2 740,144.6 739,144.6"/><polygon points="842.5,150.2 843.6,150.2 839.9,144.6 838.8,144.6"/><polygon points="844.2,150.2 845.2,150.2 841.5,144.6 840.5,144.6"/><polygon points="91.9,148.4 101.7,148.4 103.2,145.6 93.4,145.6"/><polygon points="111.5,148.4 115.9,148.4 117.3,145.7 112.9,145.6"/><polygon points="116.9,148.4 121.3,148.4 122.7,145.7 118.3,145.7"/><polygon points="131.1,148.4 150.7,148.4 152,145.7 132.4,145.7"/><polygon points="160.5,148.4 164.9,148.4 166.2,145.7 161.7,145.7"/><polygon points="165.9,148.4 170.3,148.4 171.5,145.7 167.1,145.7"/><polygon points="180.2,148.4 199.9,148.4 200.9,145.7 181.3,145.7"/><polygon points="209.7,148.5 214.1,148.5 215.1,145.7 210.7,145.7"/><polygon points="215.1,148.5 219.6,148.5 220.5,145.7 216.1,145.7"/><polygon points="229.4,148.5 249.2,148.5 250,145.7 230.4,145.7"/><polygon points="259.1,148.5 263.5,148.5 264.3,145.7 259.9,145.7"/><polygon points="264.5,148.5 269,148.5 269.7,145.7 265.3,145.7"/><polygon points="278.8,148.5 298.7,148.5 299.3,145.7 279.6,145.7"/><polygon points="308.6,148.5 313,148.5 313.6,145.7 309.1,145.7"/><polygon points="314,148.5 318.5,148.5 319,145.8 314.6,145.7"/><polygon points="328.4,148.5 348.3,148.5 348.7,145.8 328.9,145.8"/><polygon points="358.2,148.5 362.7,148.5 363,145.8 358.6,145.8"/><polygon points="363.7,148.5 368.2,148.5 368.5,145.8 364,145.8"/><polygon points="378.1,148.6 398.1,148.6 398.2,145.8 378.4,145.8"/><polygon points="408,148.6 412.5,148.6 412.6,145.8 408.2,145.8"/><polygon points="413.5,148.6 418,148.6 418.1,145.8 413.6,145.8"/><polygon points="428,148.6 448,148.6 447.9,145.8 428,145.8"/><polygon points="458,148.6 462.5,148.6 462.4,145.8 457.9,145.8"/><polygon points="463.5,148.6 468,148.6 467.9,145.8 463.4,145.8"/><polygon points="478,148.6 498.1,148.6 497.8,145.8 477.9,145.8"/><polygon points="508.1,148.6 512.7,148.6 512.3,145.8 507.8,145.8"/><polygon points="513.7,148.6 518.2,148.6 517.8,145.8 513.3,145.8"/><polygon points="528.2,148.6 548.3,148.7 547.8,145.9 527.8,145.9"/><polygon points="558.4,148.7 562.9,148.7 562.4,145.9 557.9,145.9"/><polygon points="564,148.7 568.5,148.7 567.9,145.9 563.4,145.9"/><polygon points="578.6,148.7 598.8,148.7 598,145.9 577.9,145.9"/><polygon points="608.9,148.7 613.4,148.7 612.6,145.9 608.1,145.9"/><polygon points="614.4,148.7 619,148.7 618.1,145.9 613.6,145.9"/><polygon points="629.1,148.7 649.3,148.7 648.4,145.9 628.2,145.9"/><polygon points="659.5,148.7 664,148.7 663,145.9 658.4,145.9"/><polygon points="665,148.7 669.6,148.7 668.5,145.9 664,145.9"/><polygon points="679.7,148.7 700,148.7 698.8,145.9 678.6,145.9"/><polygon points="710.2,148.7 714.8,148.7 713.5,145.9 709,145.9"/><polygon points="715.8,148.7 720.4,148.8 719.1,145.9 714.5,145.9"/><polygon points="730.6,148.8 750.9,148.8 749.5,146 729.2,146"/><polygon points="761.1,148.8 765.7,148.8 764.2,146 759.7,146"/><polygon points="766.7,148.8 771.3,148.8 769.8,146 765.2,146"/><polygon points="781.5,148.8 802,148.8 800.3,146 780,146"/><polygon points="812.2,148.8 816.8,148.8 815.1,146 810.5,146"/><polygon points="817.8,148.8 822.4,148.8 820.7,146 816.1,146"/><polygon points="832.7,148.8 853.2,148.8 851.3,146 830.9,146"/><polygon points="863.4,148.8 868.1,148.8 866.1,146 861.5,146"/><polygon points="869.1,148.8 873.7,148.8 871.7,146 867.1,146"/><polygon points="884,148.8 894.3,148.9 892.2,146 881.9,146"/><polygon points="134.4,72.3 836.5,71.1 835.6,69.8 135.1,71.1"/><polygon points="175.6,73.8 176.4,73.8 178.5,69.5 177.6,69.5"/><polygon points="177,73.8 177.8,73.8 179.8,69.5 179,69.5"/><polygon points="262.1,73.6 263,73.6 264.4,69.4 263.5,69.4"/><polygon points="263.5,73.6 264.4,73.6 265.7,69.4 264.9,69.4"/><polygon points="349.2,73.5 350,73.5 350.7,69.2 349.9,69.2"/><polygon points="350.6,73.5 351.4,73.5 352.1,69.2 351.2,69.2"/><polygon points="436.7,73.3 437.6,73.3 437.5,69 436.7,69"/><polygon points="438.1,73.3 439,73.3 438.9,69 438.1,69"/><polygon points="524.7,73.1 525.6,73.1 524.8,68.9 524,68.9"/><polygon points="526.1,73.1 527,73.1 526.2,68.9 525.4,68.9"/><polygon points="613.1,73 614,73 612.6,68.7 611.7,68.7"/><polygon points="614.6,73 615.5,73 614,68.7 613.2,68.7"/><polygon points="702.1,72.8 703,72.8 700.9,68.5 700,68.5"/><polygon points="703.5,72.8 704.4,72.8 702.3,68.5 701.4,68.5"/><polygon points="791.6,72.7 792.5,72.7 789.6,68.4 788.7,68.4"/><polygon points="793,72.7 793.9,72.7 791,68.4 790.2,68.4"/><polygon points="134.2,72.8 142.8,72.8 143.9,70.6 135.4,70.7"/><polygon points="151.4,72.7 155.3,72.7 156.4,70.6 152.5,70.6"/><polygon points="156.1,72.7 160,72.7 161.1,70.6 157.2,70.6"/><polygon points="168.6,72.7 185.8,72.7 186.8,70.6 169.6,70.6"/><polygon points="194.5,72.7 198.3,72.7 199.3,70.5 195.4,70.5"/><polygon points="199.2,72.7 203.1,72.7 204,70.5 200.1,70.5"/><polygon points="211.7,72.6 229,72.6 229.8,70.5 212.6,70.5"/><polygon points="237.6,72.6 241.5,72.6 242.3,70.5 238.4,70.5"/><polygon points="242.4,72.6 246.3,72.6 247,70.5 243.2,70.5"/><polygon points="254.9,72.6 272.3,72.5 272.9,70.4 255.7,70.4"/><polygon points="280.9,72.5 284.8,72.5 285.4,70.4 281.6,70.4"/><polygon points="285.7,72.5 289.6,72.5 290.2,70.4 286.3,70.4"/><polygon points="298.3,72.5 315.7,72.4 316.1,70.3 298.8,70.4"/><polygon points="324.4,72.4 328.3,72.4 328.7,70.3 324.8,70.3"/><polygon points="329.1,72.4 333.1,72.4 333.5,70.3 329.6,70.3"/><polygon points="341.8,72.4 359.2,72.4 359.5,70.2 342.1,70.3"/><polygon points="367.9,72.4 371.8,72.3 372.1,70.2 368.2,70.2"/><polygon points="372.7,72.3 376.6,72.3 376.9,70.2 373,70.2"/><polygon points="385.4,72.3 402.8,72.3 403,70.2 385.6,70.2"/><polygon points="411.6,72.3 415.5,72.3 415.6,70.1 411.7,70.1"/><polygon points="416.4,72.3 420.3,72.3 420.4,70.1 416.5,70.1"/><polygon points="429.1,72.2 446.6,72.2 446.5,70.1 429.1,70.1"/><polygon points="455.3,72.2 459.3,72.2 459.2,70.1 455.3,70.1"/><polygon points="460.2,72.2 464.1,72.2 464,70 460.1,70.1"/><polygon points="472.9,72.2 490.5,72.1 490.2,70 472.7,70"/><polygon points="499.2,72.1 503.2,72.1 502.9,70 499,70"/><polygon points="504.1,72.1 508,72.1 507.8,70 503.8,70"/><polygon points="516.8,72.1 534.4,72.1 534.1,69.9 516.5,69.9"/><polygon points="543.3,72 547.2,72 546.8,69.9 542.8,69.9"/><polygon points="548.1,72 552.1,72 551.6,69.9 547.7,69.9"/><polygon points="560.9,72 578.6,72 578,69.8 560.4,69.9"/><polygon points="587.4,72 591.4,71.9 590.8,69.8 586.8,69.8"/><polygon points="592.3,71.9 596.2,71.9 595.6,69.8 591.6,69.8"/><polygon points="605.1,71.9 622.8,71.9 622.1,69.7 604.4,69.8"/><polygon points="631.7,71.9 635.7,71.9 634.9,69.7 630.9,69.7"/><polygon points="636.5,71.9 640.5,71.9 639.7,69.7 635.7,69.7"/><polygon points="649.4,71.8 667.2,71.8 666.2,69.7 648.6,69.7"/><polygon points="676,71.8 680,71.8 679.1,69.6 675.1,69.7"/><polygon points="680.9,71.8 684.9,71.8 683.9,69.6 680,69.6"/><polygon points="693.8,71.8 711.6,71.7 710.5,69.6 692.8,69.6"/><polygon points="720.6,71.7 724.6,71.7 723.4,69.6 719.4,69.6"/><polygon points="725.5,71.7 729.5,71.7 728.3,69.6 724.3,69.6"/><polygon points="738.4,71.7 756.2,71.7 755,69.5 737.2,69.5"/><polygon points="765.2,71.6 769.2,71.6 767.9,69.5 763.9,69.5"/><polygon points="770.1,71.6 774.1,71.6 772.8,69.5 768.8,69.5"/><polygon points="783.1,71.6 801,71.6 799.5,69.4 781.7,69.5"/><polygon points="809.9,71.6 814,71.5 812.5,69.4 808.4,69.4"/><polygon points="814.9,71.5 818.9,71.5 817.4,69.4 813.4,69.4"/><polygon points="827.9,71.5 836.8,71.5 835.2,69.4 826.3,69.4"/><polygon points="167.4,13.4 792,11.1 791.2,10 168,12.4"/><polygon points="204.2,14.4 205,14.4 206.6,11 205.8,11"/><polygon points="205.4,14.4 206.2,14.4 207.8,11 207,11"/><polygon points="281.3,14.1 282.1,14.1 283.2,10.8 282.4,10.8"/><polygon points="282.5,14.1 283.3,14.1 284.4,10.7 283.6,10.8"/><polygon points="358.8,13.8 359.6,13.8 360.1,10.5 359.3,10.5"/><polygon points="360,13.8 360.8,13.8 361.3,10.5 360.6,10.5"/><polygon points="436.7,13.6 437.4,13.6 437.4,10.2 436.7,10.2"/><polygon points="437.9,13.6 438.7,13.5 438.7,10.2 437.9,10.2"/><polygon points="514.9,13.3 515.7,13.3 515.1,9.9 514.4,9.9"/><polygon points="516.2,13.3 516.9,13.3 516.4,9.9 515.6,9.9"/><polygon points="593.5,13 594.3,13 593.2,9.6 592.4,9.6"/><polygon points="594.8,13 595.6,13 594.5,9.6 593.7,9.6"/><polygon points="672.6,12.7 673.4,12.7 671.7,9.3 670.9,9.3"/><polygon points="673.8,12.7 674.6,12.7 672.9,9.3 672.2,9.3"/><polygon points="752,12.4 752.8,12.4 750.5,9 749.7,9"/><polygon points="753.2,12.4 754,12.4 751.8,9 751,9"/><polygon points="167.2,13.7 174.9,13.7 175.8,12 168.2,12"/><polygon points="182.6,13.6 186,13.6 186.9,11.9 183.5,12"/><polygon points="186.8,13.6 190.2,13.6 191.1,11.9 187.7,11.9"/><polygon points="197.9,13.6 213.3,13.5 214.1,11.8 198.7,11.9"/><polygon points="221,13.5 224.4,13.5 225.2,11.8 221.7,11.8"/><polygon points="225.2,13.5 228.6,13.5 229.4,11.8 225.9,11.8"/><polygon points="236.3,13.4 251.7,13.4 252.4,11.7 237,11.8"/><polygon points="259.4,13.4 262.9,13.3 263.5,11.7 260.1,11.7"/><polygon points="263.7,13.3 267.1,13.3 267.7,11.6 264.3,11.7"/><polygon points="274.9,13.3 290.3,13.2 290.8,11.6 275.4,11.6"/><polygon points="298,13.2 301.5,13.2 302,11.5 298.5,11.5"/><polygon points="302.3,13.2 305.7,13.2 306.2,11.5 302.7,11.5"/><polygon points="313.5,13.2 328.9,13.1 329.3,11.4 313.9,11.5"/><polygon points="336.7,13.1 340.2,13.1 340.5,11.4 337,11.4"/><polygon points="340.9,13.1 344.4,13 344.8,11.4 341.3,11.4"/><polygon points="352.2,13 367.7,13 367.9,11.3 352.5,11.3"/><polygon points="375.5,12.9 378.9,12.9 379.1,11.2 375.7,11.2"/><polygon points="379.7,12.9 383.2,12.9 383.4,11.2 379.9,11.2"/><polygon points="391,12.9 406.5,12.8 406.6,11.1 391.1,11.2"/><polygon points="414.3,12.8 417.8,12.8 417.9,11.1 414.4,11.1"/><polygon points="418.6,12.8 422.1,12.8 422.1,11.1 418.7,11.1"/><polygon points="429.9,12.7 445.5,12.7 445.4,11 429.9,11"/><polygon points="453.3,12.6 456.8,12.6 456.7,10.9 453.2,11"/><polygon points="457.6,12.6 461.1,12.6 461,10.9 457.5,10.9"/><polygon points="468.9,12.6 484.5,12.5 484.3,10.8 468.8,10.9"/><polygon points="492.3,12.5 495.8,12.5 495.6,10.8 492.1,10.8"/><polygon points="496.6,12.5 500.1,12.5 499.9,10.8 496.4,10.8"/><polygon points="508,12.4 523.6,12.4 523.3,10.7 507.7,10.8"/><polygon points="531.5,12.4 535,12.3 534.6,10.7 531.1,10.7"/><polygon points="535.8,12.3 539.3,12.3 538.9,10.6 535.4,10.7"/><polygon points="547.1,12.3 562.8,12.2 562.4,10.6 546.8,10.6"/><polygon points="570.7,12.2 574.2,12.2 573.7,10.5 570.2,10.5"/><polygon points="575,12.2 578.6,12.2 578.1,10.5 574.5,10.5"/><polygon points="586.4,12.2 602.2,12.1 601.6,10.4 585.9,10.5"/><polygon points="610,12.1 613.6,12.1 613,10.4 609.4,10.4"/><polygon points="614.4,12.1 617.9,12 617.3,10.3 613.7,10.4"/><polygon points="625.8,12 641.6,12 640.8,10.3 625.1,10.3"/><polygon points="649.5,11.9 653,11.9 652.3,10.2 648.7,10.2"/><polygon points="653.8,11.9 657.4,11.9 656.6,10.2 653,10.2"/><polygon points="665.3,11.9 681.1,11.8 680.2,10.1 664.5,10.2"/><polygon points="689,11.8 692.6,11.8 691.6,10.1 688.1,10.1"/><polygon points="693.3,11.8 696.9,11.8 696,10.1 692.4,10.1"/><polygon points="704.8,11.7 720.7,11.7 719.7,10 703.9,10"/><polygon points="728.6,11.6 732.2,11.6 731.1,9.9 727.6,9.9"/><polygon points="733,11.6 736.6,11.6 735.5,9.9 731.9,9.9"/><polygon points="744.5,11.6 760.4,11.5 759.2,9.8 743.4,9.9"/><polygon points="768.3,11.5 771.9,11.5 770.7,9.8 767.2,9.8"/><polygon points="772.7,11.5 776.3,11.5 775.1,9.8 771.5,9.8"/><polygon points="784.3,11.4 792.2,11.4 791,9.7 783,9.7"/></g>
<text transform="matrix(5.713 0.020 -1.357 5.777 269.393 243.521)" font-family="Liberation Mono,monospace" font-style="italic" font-weight="normal" font-size="1" fill="#8a8c8a" fill-opacity="1">1METER</text>
<text transform="matrix(4.918 0.002 -1.005 4.275 292.752 144.109)" font-family="Liberation Mono,monospace" font-style="italic" font-weight="normal" font-size="1" fill="#8a8c8a" fill-opacity="1">1METER</text>
<text transform="matrix(4.317 -0.008 -0.773 3.291 310.381 69.080)" font-family="Liberation Mono,monospace" font-style="italic" font-weight="normal" font-size="1" fill="#8a8c8a" fill-opacity="1">1METER</text>
<text transform="matrix(3.847 -0.014 -0.614 2.611 324.159 10.442)" font-family="Liberation Mono,monospace" font-style="italic" font-weight="normal" font-size="1" fill="#8a8c8a" fill-opacity="1">1METER</text>
<text transform="matrix(5.754 0.021 -0.428 5.801 384.056 243.930)" font-family="Liberation Mono,monospace" font-style="italic" font-weight="normal" font-size="1" fill="#8a8c8a" fill-opacity="1">1METER</text>
<text transform="matrix(4.948 0.002 -0.316 4.289 391.410 144.153)" font-family="Liberation Mono,monospace" font-style="italic" font-weight="normal" font-size="1" fill="#8a8c8a" fill-opacity="1">1METER</text>
<text transform="matrix(4.340 -0.008 -0.243 3.299 396.956 68.914)" font-family="Liberation Mono,monospace" font-style="italic" font-weight="normal" font-size="1" fill="#8a8c8a" fill-opacity="1">1METER</text>
<text transform="matrix(3.866 -0.014 -0.193 2.616 401.287 10.153)" font-family="Liberation Mono,monospace" font-style="italic" font-weight="normal" font-size="1" fill="#8a8c8a" fill-opacity="1">1METER</text>
<text transform="matrix(5.795 0.021 0.516 5.826 499.546 244.341)" font-family="Liberation Mono,monospace" font-style="italic" font-weight="normal" font-size="1" fill="#8a8c8a" fill-opacity="1">1METER</text>
<text transform="matrix(4.979 0.002 0.381 4.302 490.681 144.197)" font-family="Liberation Mono,monospace" font-style="italic" font-weight="normal" font-size="1" fill="#8a8c8a" fill-opacity="1">1METER</text>
<text transform="matrix(4.364 -0.008 0.293 3.307 484.002 68.748)" font-family="Liberation Mono,monospace" font-style="italic" font-weight="normal" font-size="1" fill="#8a8c8a" fill-opacity="1">1METER</text>
<text transform="matrix(3.884 -0.015 0.232 2.621 478.789 9.863)" font-family="Liberation Mono,monospace" font-style="italic" font-weight="normal" font-size="1" fill="#8a8c8a" fill-opacity="1">1METER</text>
<text transform="matrix(5.838 0.021 1.473 5.850 615.875 244.756)" font-family="Liberation Mono,monospace" font-style="italic" font-weight="normal" font-size="1" fill="#8a8c8a" fill-opacity="1">1METER</text>
<text transform="matrix(5.010 0.002 1.087 4.316 590.570 144.241)" font-family="Liberation Mono,monospace" font-style="italic" font-weight="normal" font-size="1" fill="#8a8c8a" fill-opacity="1">1METER</text>
<text transform="matrix(4.388 -0.008 0.835 3.315 571.523 68.581)" font-family="Liberation Mono,monospace" font-style="italic" font-weight="normal" font-size="1" fill="#8a8c8a" fill-opacity="1">1METER</text>
<text transform="matrix(3.903 -0.015 0.661 2.626 556.667 9.571)" font-family="Liberation Mono,monospace" font-style="italic" font-weight="normal" font-size="1" fill="#8a8c8a" fill-opacity="1">1METER</text>
<text transform="matrix(5.880 0.021 2.444 5.875 733.050 245.174)" font-family="Liberation Mono,monospace" font-style="italic" font-weight="normal" font-size="1" fill="#8a8c8a" fill-opacity="1">1METER</text>
<text transform="matrix(5.041 0.002 1.801 4.330 691.083 144.286)" font-family="Liberation Mono,monospace" font-style="italic" font-weight="normal" font-size="1" fill="#8a8c8a" fill-opacity="1">1METER</text>
<text transform="matrix(4.412 -0.008 1.382 3.323 659.523 68.413)" font-family="Liberation Mono,monospace" font-style="italic" font-weight="normal" font-size="1" fill="#8a8c8a" fill-opacity="1">1METER</text>
<text transform="matrix(3.922 -0.015 1.094 2.630 634.924 9.277)" font-family="Liberation Mono,monospace" font-style="italic" font-weight="normal" font-size="1" fill="#8a8c8a" fill-opacity="1">1METER</text>
</g>
<polygon points="179,0 247,0 111,345 0,345 0,311" fill="#c6c9cb"/>
<polygon points="170,0 179,0 0,311 0,292" fill="#dcdedf"/>
<g clip-path="url(#gwl)">
<path d="M232.7 0L75.1 345M218.4 0L39.2 345M204.2 0L3.3 345M189.9 0L-32.6 345M1.8 605.2L-118.2 553.2M22.5 554L-97.5 502M41.4 507.5L-78.6 455.5M58.6 465L-61.4 413M74.3 426.1L-45.7 374.1M88.9 390.3L-31.1 338.3M102.2 357.3L-17.8 305.3M114.6 326.7L-5.4 274.7M126.1 298.3L6.1 246.3M136.9 271.8L16.9 219.8M146.9 247.1L26.9 195.1M156.2 224.1L36.2 172.1M165 202.4L45 150.4M173.2 182.1L53.2 130.1M181 163L61 111M188.3 144.9L68.3 92.9M195.2 127.9L75.2 75.9M201.7 111.8L81.7 59.8M207.9 96.5L87.9 44.5M213.8 82L93.8 30M219.3 68.3L99.3 16.3M224.6 55.2L104.6 3.2M229.7 42.7L109.7 -9.3M234.5 30.8L114.5 -21.2M239.1 19.5L119.1 -32.5M243.5 8.7L123.5 -43.3M247.7 -1.7L127.7 -53.7M251.7 -11.6L131.7 -63.6M255.6 -21.1L135.6 -73.1M259.3 -30.2L139.3 -82.2M262.8 -39L142.8 -91M266.2 -47.4L146.2 -99.4M269.5 -55.5L149.5 -107.5M272.6 -63.3L152.6 -115.3" stroke="#555" stroke-opacity="0.45" stroke-width="1" fill="none"/>
</g>
<g filter="url(#bl1)"><polygon points="543,-3 568,-3 660,348 637,348 612,311" fill="#7088b4"/></g>
<g clip-path="url(#gc)"><g fill="#4f6186">
<polygon points="645.6,390.6 651.2,390.7 551.3,-8.9 548.3,-8.8"/>
<polygon points="590.4,251.1 635.6,251.3 634.3,246.6 592.9,246.4"/>
<polygon points="568.6,149 607.3,149 606.3,145.5 570.8,145.5"/>
<polygon points="552.1,72.3 586,72.2 585.3,69.6 554.2,69.6"/>
<polygon points="539.3,12.5 569.4,12.4 568.9,10.3 541.2,10.4"/>
</g></g>
<polygon points="566,0 611,0 737,345 656,345" fill="#78869b"/>
<g clip-path="url(#gwr)">
<path d="M575.5 0L673 345M584.9 0L690 345M594.4 0L707 345M603.8 0L724 345M736.6 616.2L826.6 566.2M722 563.4L812 513.4M708.7 515.5L798.7 465.5M696.6 471.8L786.6 421.8M685.6 431.8L775.6 381.8M675.4 395.1L765.4 345.1M666 361.3L756 311.3M657.4 330L747.4 280M649.3 301L739.3 251M641.9 274.1L731.9 224.1M634.9 248.9L724.9 198.9M628.4 225.5L718.4 175.5M622.3 203.5L712.3 153.5M616.6 182.8L706.6 132.8M611.2 163.4L701.2 113.4M606.2 145.1L696.2 95.1M601.4 127.9L691.4 77.9M596.9 111.5L686.9 61.5M592.6 96.1L682.6 46.1M588.6 81.5L678.6 31.5M584.7 67.6L674.7 17.6M581 54.3L671 4.3M577.6 41.8L667.6 -8.2M574.2 29.8L664.2 -20.2M571.1 18.4L661.1 -31.6M568.1 7.4L658.1 -42.6M565.2 -3L655.2 -53M562.4 -13L652.4 -63M559.8 -22.6L649.8 -72.6M557.2 -31.7L647.2 -81.7M554.8 -40.6L644.8 -90.6M552.4 -49L642.4 -99M550.2 -57.1L640.2 -107.1M548 -65L638 -115" stroke="#49536a" stroke-opacity="0.7" stroke-width="1.1" fill="none"/>
</g>
<g filter="url(#bl1)"><path d="M429 82.500C422 80.500 416.500 84 416.800 91C417 96.500 421 98.800 425 98.800L430 104.500Z" fill="#6e82ad"/></g>
<rect x="427.800" y="76.800" width="19.600" height="33.400" rx="9.800" fill="url(#cap2)"/>
<path d="M427.800 88.500C431 95.800 444.200 95.800 447.400 88.500L447.400 96.800L440.600 96.800L438.800 93.800L436.400 93.800L434.600 96.800L427.800 96.800Z" fill="#17171a"/>
</svg>
<!-- tools overlay -->
<div class="abs" style="left:2px;top:120px;width:43px;height:147px;background:#202020;border-radius:3px;opacity:.97"></div>
<div class="abs" style="left:16px;top:125px;width:15px;height:1px;background:#505050"></div><div class="abs" style="left:16px;top:129px;width:15px;height:1px;background:#505050"></div>
<div class="abs" style="left:5px;top:138px;width:37px;height:20px;background:#4f4f4f;border-radius:3px 3px 0 0"></div>
<div class="abs" style="left:5px;top:159px;width:37px;height:20px;background:#46607c"></div>
<div class="abs" style="left:5px;top:180px;width:37px;height:20px;background:#4f4f4f"></div>
<div class="abs" style="left:5px;top:201px;width:37px;height:20px;background:#4f4f4f"></div>
<div class="abs" style="left:5px;top:222px;width:37px;height:20px;background:#4f4f4f"></div>
<div class="abs" style="left:5px;top:243px;width:37px;height:20px;background:#4f4f4f;border-radius:0 0 3px 3px"></div>
<svg style="left:15px;top:139px" width="17" height="18" viewBox="0 0 17 18"><path d="M4.600 10V5.200M7.100 9V3M9.700 9V3.200M12.300 10V5" stroke="#d2d2d2" stroke-width="1.900" stroke-linecap="round" fill="none"/><path d="M3.700 9.500H13.200V11.500C13.200 14.500 11.500 16.500 8.800 16.500C6.800 16.500 5.600 15.800 4.600 14.200L1.600 10.200C1.200 9.400 2.200 8.600 3 9.400L3.700 10.300Z" fill="#d2d2d2"/></svg>
<svg style="left:15px;top:160px" width="17" height="18" viewBox="0 0 17 18"><path d="M8.5 1.5V16.5M1 9H16" stroke="#d8e0ea" stroke-width="1.2" stroke-dasharray="3.5 8" stroke-dashoffset="-2" fill="none"/><path d="M6 4L8.5 1.3L11 4M6 14L8.5 16.7L11 14M3.5 6.5L0.9 9L3.5 11.5M13.5 6.5L16.1 9L13.5 11.5" stroke="#e4ecf4" stroke-width="1.3" fill="none"/><path d="M8.5 2V6M8.5 12V16M1.5 9H5.5M11.5 9H15.5" stroke="#e4ecf4" stroke-width="1.3"/></svg>
<svg style="left:15px;top:181px" width="17" height="18" viewBox="0 0 17 18"><path d="M8 3.200A6 6 0 0 0 4.600 13.800M9 14.800A6 6 0 0 0 12.400 4.200" stroke="#c8c8c8" stroke-width="1.200" fill="none"/><path d="M2.500 14.200H6V10.700M14.500 3.800H11V7.300" stroke="#c8c8c8" stroke-width="1.200" fill="none"/></svg>
<svg style="left:15px;top:202px" width="17" height="18" viewBox="0 0 17 18"><rect x="2" y="2.500" width="13" height="13" stroke="#c8c8c8" stroke-width="1.100" fill="none"/><path d="M2 11.500H6V15.500" stroke="#c8c8c8" stroke-width="1.100" fill="none"/><path d="M7.500 10L12 5.500M8.800 5.500H12V8.700" stroke="#c8c8c8" stroke-width="1.100" fill="none"/></svg>
<svg style="left:15px;top:223px" width="17" height="18" viewBox="0 0 17 18"><path d="M5.500 3.500H11.500M5.500 14.500H11.500M3 6V12M14 6V12" stroke="#c8c8c8" stroke-width="1.100" fill="none"/><rect x="1.500" y="2" width="3" height="3" fill="#d8d8d8"/><rect x="12.500" y="2" width="3" height="3" fill="#d8d8d8"/><rect x="1.500" y="13" width="3" height="3" fill="#d8d8d8"/><rect x="12.500" y="13" width="3" height="3" fill="#d8d8d8"/></svg>
<svg style="left:15px;top:244px" width="17" height="18" viewBox="0 0 17 18"><circle cx="8.500" cy="9" r="6.200" stroke="#c8c8c8" stroke-width="1" fill="none"/><path d="M8.500 4.500V13.500M4 9H13" stroke="#c8c8c8" stroke-width="1.300" fill="none"/><path d="M6.800 6L8.500 4L10.200 6ZM6.800 12L8.500 14L10.200 12ZM5.500 7.300L3.500 9L5.500 10.700ZM11.500 7.300L13.500 9L11.500 10.700Z" fill="#c8c8c8"/><path d="M12.800 1.200H16.200V4.600Z" fill="#c8c8c8"/><path d="M4.200 16.800H0.800V13.400Z" fill="#c8c8c8"/></svg>
<!-- game panel chrome -->
<div class="tabbar" style="left:0;top:634px;width:875px;border-radius:3px 3px 0 0"></div>
<div class="tab" style="left:88px;top:634px;width:74px"></div>
<svg style="left:7px;top:638px" width="11" height="11" viewBox="0 0 11 11"><rect x="0.5" y="0.5" width="10" height="10" rx="1" fill="#c4c4c4"/><path d="M2 3H9M2 5.5H9M2 8H7" stroke="#282828" stroke-width="1.1"/></svg>
<div class="t" style="left:23px;top:637px">Console</div>
<svg style="left:93px;top:640px" width="15" height="8" viewBox="0 0 15 8"><rect x="0.3" y="0.3" width="14.400" height="7.4" rx="3.7" fill="#c4c4c4"/><path d="M2.500 4H5.500M4 2.500V5.500" stroke="#3c3c3c" stroke-width="1.1"/><circle cx="10" cy="4.800" r="0.900" fill="#3c3c3c"/><circle cx="12" cy="3.200" r="0.900" fill="#3c3c3c"/></svg>
<div class="t" style="left:111px;top:637px">Game</div>
<svg style="left:171px;top:638px" width="12" height="12" viewBox="0 0 12 12"><circle cx="6" cy="6" r="5.700" fill="#c4c4c4"/><path d="M6 2.500V6.300H9.500" stroke="#282828" stroke-width="1.300" fill="none"/></svg>
<div class="t" style="left:187px;top:637px">Animation</div>
<svg style="left:860px;top:638px" width="4" height="12" viewBox="0 0 4 12"><rect x="1" y="0.5" width="2" height="2" fill="#c4c4c4"/><rect x="1" y="4.5" width="2" height="2" fill="#c4c4c4"/><rect x="1" y="8.500" width="2" height="2" fill="#c4c4c4"/></svg>
<div class="abs" style="left:0;top:653px;width:875px;height:20px;background:#3c3c3c"></div>
<div class="abs" style="left:0;top:673px;width:875px;height:1px;background:#232323"></div>
<div class="abs" style="left:90px;top:653px;width:1px;height:20px;background:#232323"></div>
<div class="abs" style="left:176px;top:653px;width:1px;height:20px;background:#232323"></div>
<div class="abs" style="left:336px;top:653px;width:1px;height:20px;background:#232323"></div>
<div class="abs" style="left:577px;top:653px;width:1px;height:20px;background:#232323"></div>
<div class="abs" style="left:687px;top:653px;width:1px;height:20px;background:#232323"></div>
<div class="abs" style="left:713px;top:653px;width:1px;height:20px;background:#232323"></div>
<div class="abs" style="left:739px;top:653px;width:1px;height:20px;background:#232323"></div>
<div class="abs" style="left:765px;top:653px;width:1px;height:20px;background:#232323"></div>
<div class="abs" style="left:805px;top:653px;width:1px;height:20px;background:#232323"></div>
<div class="abs" style="left:857px;top:656px;width:1px;height:14px;background:#2a2a2a"></div>
<div class="t" style="left:4px;top:656px">Game</div><div class="arr" style="left:78px;top:660.500px"></div>
<div class="t" style="left:100px;top:656px">Display 1</div><div class="arr" style="left:164px;top:660.500px"></div>
<div class="t" style="left:180px;top:656px">Free Aspect</div><div class="arr" style="left:324px;top:660.500px"></div>
<div class="t" style="left:343px;top:656px">Scale</div>
<div class="abs" style="left:386px;top:663px;width:143px;height:1px;background:#5e5e5e"></div>
<div class="abs" style="left:381px;top:659px;width:9px;height:9px;border-radius:5px;background:#999"></div>
<div class="t" style="left:535px;top:656px">1x</div>
<div class="t" style="left:581px;top:656px">Play Focused</div><div class="arr" style="left:675px;top:660.500px"></div>
<svg style="left:693px;top:655px" width="15" height="15" viewBox="0 0 15 15"><ellipse cx="7.500" cy="8.500" rx="3.800" ry="4.800" fill="#c4c4c4"/><circle cx="7.500" cy="3.300" r="2.200" fill="#c4c4c4"/><path d="M1 5.500L4 7M14 5.500L11 7M0.500 9.500H4M14.500 9.500H11M1.500 13.500L4.500 11.500M13.500 13.500L10.500 11.500M4.500 0.800L6 2.500M10.500 0.800L9 2.500" stroke="#c4c4c4" stroke-width="1"/><rect x="5.500" y="7" width="4" height="3" fill="#3c3c3c"/></svg>
<svg style="left:719px;top:656px" width="14" height="12" viewBox="0 0 14 12"><path d="M1 4H3.500L7 1V11L3.500 8H1Z" fill="#c4c4c4"/><path d="M3.600 2V10" stroke="#3c3c3c" stroke-width="0.800"/><path d="M9 3.500a3.500 3.500 0 0 1 0 5M11 2a6 6 0 0 1 0 8" stroke="#c4c4c4" stroke-width="1.100" fill="none"/></svg>
<svg style="left:745px;top:657px" width="15" height="11" viewBox="0 0 15 11"><rect x="0.500" y="0.500" width="14" height="10" rx="1" fill="#c4c4c4"/><path d="M2 3.500H13M2 6H13" stroke="#3c3c3c" stroke-width="1" stroke-dasharray="1.500 1"/><path d="M3.500 8.500H11.500" stroke="#3c3c3c" stroke-width="1"/></svg>
<div class="t" style="left:770px;top:656px">Stats</div>
<div class="t" style="left:808px;top:656px">Gizmos</div><div class="arr" style="left:863px;top:660.500px"></div>
<div class="abs" style="left:0;top:1018px;width:875px;height:2px;background:#191919"></div>
<!-- hierarchy -->
<div class="pn" style="left:877px;top:92px;width:611px;height:540px"></div>
<div class="tabbar" style="left:877px;top:73px;width:611px;border-radius:3px 3px 0 0"></div>
<div class="tab" style="left:877px;top:73px;width:96px"></div>
<svg style="left:884px;top:77px" width="13" height="12" viewBox="0 0 13 12"><path d="M3.500 2.700H12M3.500 6.200H12M3.500 9.500H12" stroke="#c4c4c4" stroke-width="1.150"/><path d="M1.500 2V9.500" stroke="#c4c4c4" stroke-width="0.600"/><path d="M0.800 2.700H2.300M0.800 6.200H2.300M0.800 9.500H2.300" stroke="#c4c4c4" stroke-width="1.300"/></svg>
<div class="t" style="left:901px;top:76px;">Hierarchy</div>
<svg style="left:1452px;top:77px" width="10" height="11" viewBox="0 0 10 11"><rect x="1" y="5.500" width="8" height="5" rx="0.800" stroke="#c4c4c4" stroke-width="1.100" fill="none"/><path d="M2.800 5.500V3.300a2.300 2.300 0 0 1 4.600 0" stroke="#c4c4c4" stroke-width="1.100" fill="none"/></svg>
<svg style="left:1473px;top:77px" width="4" height="12" viewBox="0 0 4 12"><rect x="1" y="0.5" width="2" height="2" fill="#c4c4c4"/><rect x="1" y="4.500" width="2" height="2" fill="#c4c4c4"/><rect x="1" y="8.500" width="2" height="2" fill="#c4c4c4"/></svg>
<div class="abs" style="left:877px;top:92px;width:611px;height:20px;background:#3c3c3c;"></div>
<div class="abs" style="left:877px;top:112px;width:611px;height:1px;background:#2a2a2a;"></div>
<svg style="left:884px;top:96px" width="12" height="12" viewBox="0 0 12 12"><path d="M6 0.500V11.500M0.500 6H11.500" stroke="#c4c4c4" stroke-width="1.500"/></svg>
<div class="arr s" style="left:900px;top:100px"></div>
<div class="in" style="left:1159px;top:95px;width:324px;height:15px;border-radius:3px"></div>
<svg style="left:1163px;top:98px" width="11" height="9" viewBox="0 0 11 9"><circle cx="3.500" cy="3.700" r="2.600" stroke="#c4c4c4" stroke-width="1.100" fill="none"/><path d="M5.400 5.600L7.500 7.800" stroke="#c4c4c4" stroke-width="1.200"/><path d="M7.300 3.200H10.300L8.800 5Z" fill="#c4c4c4"/></svg>
<div class="t" style="left:1178px;top:95px;color:#7a7a7a;font-size:11px">All</div>
<div class="abs" style="left:1467px;top:96px;width:1px;height:13px;background:#3a3a3a;"></div>
<svg style="left:1469px;top:96px" width="13" height="13" viewBox="0 0 13 13"><path d="M3.500 0.700H12.300V9.500H9.500M0.700 3.500H9.500V12.300H0.700Z" stroke="#c4c4c4" stroke-width="1.100" fill="none"/><path d="M3 10L7.300 5.700M4.500 5.500H7.500V8.500" stroke="#c4c4c4" stroke-width="1.100" fill="none"/></svg>
<div class="abs" style="left:877px;top:113px;width:32px;height:519px;background:#333333;"></div>
<div class="abs" style="left:877px;top:113px;width:611px;height:16px;background:#2d2d2d;"></div>
<svg style="left:911px;top:118px" width="9" height="8" viewBox="0 0 9 8"><path d="M0.300 0.500H8.700L4.500 7.500Z" fill="#6e6e6e"/></svg>
<svg style="left:924px;top:114px" width="14" height="14" viewBox="0 0 14 14"><path d="M7 0.300L13 3.700V10.300L7 13.700L1 10.300V3.700Z" fill="#f0f0f0"/><path d="M7 7V13.700M7 7L1 3.700M7 7L13 3.700" stroke="#2d2d2d" stroke-width="1.600"/><path d="M7 4L9.700 5.500V8.500L7 10L4.300 8.500V5.500Z" fill="#2d2d2d"/><path d="M7 0.300V3M1 10.300L3.400 9M13 10.300L10.600 9" stroke="#2d2d2d" stroke-width="1.400"/></svg>
<div class="t b" style="left:942px;top:113px;color:#d2d2d2">SampleScene*</div>
<svg style="left:1474px;top:116px" width="4" height="12" viewBox="0 0 4 12"><rect x="1" y="0.5" width="2" height="2" fill="#c4c4c4"/><rect x="1" y="4.500" width="2" height="2" fill="#c4c4c4"/><rect x="1" y="8.500" width="2" height="2" fill="#c4c4c4"/></svg>
<svg style="left:937.6px;top:130px" width="13.500" height="14.500" viewBox="0 0 14 15"><path d="M7 1L13 4.200V10.800L7 14L1 10.800V4.200Z M1 4.200L7 7.400L13 4.200M7 7.400V14" stroke="#c4c4c4" stroke-width="0.950" fill="none" stroke-linejoin="round"/></svg>
<div class="t" style="left:955px;top:129px;">Main Camera</div>
<svg style="left:937.6px;top:146px" width="13.500" height="14.500" viewBox="0 0 14 15"><path d="M7 1L13 4.200V10.800L7 14L1 10.800V4.200Z M1 4.200L7 7.400L13 4.200M7 7.400V14" stroke="#c4c4c4" stroke-width="0.950" fill="none" stroke-linejoin="round"/></svg>
<div class="t" style="left:955px;top:145px;">Directional Light</div>
<svg style="left:937.6px;top:162px" width="13.500" height="14.500" viewBox="0 0 14 15"><path d="M7 1L13 4.200V10.800L7 14L1 10.800V4.200Z M1 4.200L7 7.400L13 4.200M7 7.400V14" stroke="#c4c4c4" stroke-width="0.950" fill="none" stroke-linejoin="round"/></svg>
<div class="t" style="left:955px;top:161px;">Plane</div>
<svg style="left:937.6px;top:178px" width="13.500" height="14.500" viewBox="0 0 14 15"><path d="M7 1L13 4.200V10.800L7 14L1 10.800V4.200Z M1 4.200L7 7.400L13 4.200M7 7.400V14" stroke="#c4c4c4" stroke-width="0.950" fill="none" stroke-linejoin="round"/></svg>
<div class="t" style="left:955px;top:177px;">Cube</div>
<svg style="left:937.6px;top:194px" width="13.500" height="14.500" viewBox="0 0 14 15"><path d="M7 1L13 4.200V10.800L7 14L1 10.800V4.200Z M1 4.200L7 7.400L13 4.200M7 7.400V14" stroke="#c4c4c4" stroke-width="0.950" fill="none" stroke-linejoin="round"/></svg>
<div class="t" style="left:955px;top:193px;">Cube (1)</div>
<svg style="left:937.6px;top:210px" width="13.500" height="14.500" viewBox="0 0 14 15"><path d="M7 1L13 4.200V10.800L7 14L1 10.800V4.200Z M1 4.200L7 7.400L13 4.200M7 7.400V14" stroke="#c4c4c4" stroke-width="0.950" fill="none" stroke-linejoin="round"/></svg>
<div class="t" style="left:955px;top:209px;">Cube (2)</div>
<svg style="left:925px;top:230px" width="9" height="8" viewBox="0 0 9 8"><path d="M0.300 0.500H8.700L4.500 7.500Z" fill="#6e6e6e"/></svg>
<svg style="left:937.6px;top:226px" width="13.500" height="14.500" viewBox="0 0 14 15"><path d="M7 1L13 4.200V10.800L7 14L1 10.800V4.200Z M1 4.200L7 7.400L13 4.200M7 7.400V14" stroke="#c4c4c4" stroke-width="0.950" fill="none" stroke-linejoin="round"/></svg>
<div class="t" style="left:955px;top:225px;">Player</div>
<svg style="left:951.6px;top:242px" width="13.500" height="14.500" viewBox="0 0 14 15"><path d="M7 1L13 4.200V10.800L7 14L1 10.800V4.200Z M1 4.200L7 7.400L13 4.200M7 7.400V14" stroke="#c4c4c4" stroke-width="0.950" fill="none" stroke-linejoin="round"/></svg>
<div class="t" style="left:969px;top:241px;">Visor</div>
<div class="abs" style="left:877px;top:257px;width:611px;height:16px;background:#4d4d4d;"></div>
<svg style="left:937.6px;top:258px" width="13.500" height="14.500" viewBox="0 0 14 15"><path d="M7 1L13 4.200V10.800L7 14L1 10.800V4.200Z M1 4.200L7 7.400L13 4.200M7 7.400V14" stroke="#c4c4c4" stroke-width="0.950" fill="none" stroke-linejoin="round"/></svg>
<div class="t" style="left:955px;top:257px;">Network Manager</div>
<!-- project -->
<div class="pn" style="left:877px;top:653px;width:611px;height:365px"></div>
<div class="tabbar" style="left:877px;top:634px;width:611px;border-radius:3px 3px 0 0"></div>
<div class="tab" style="left:877px;top:634px;width:81px"></div>
<svg style="left:885px;top:638px" width="13" height="11" viewBox="0 0 13 11"><path d="M0.500 1.300a0.800 0.800 0 0 1 0.800-0.800H4.700L6 2H11.700a0.800 0.800 0 0 1 0.800 0.800V9.700a0.800 0.800 0 0 1-0.800 0.800H1.300a0.800 0.800 0 0 1-0.800-0.800Z" fill="#c4c4c4"/></svg>
<div class="t" style="left:901px;top:637px;">Project</div>
<svg style="left:1452px;top:638px" width="10" height="11" viewBox="0 0 10 11"><rect x="1" y="5.500" width="8" height="5" rx="0.800" stroke="#c4c4c4" stroke-width="1.100" fill="none"/><path d="M2.800 5.500V3.300a2.300 2.300 0 0 1 4.600 0" stroke="#c4c4c4" stroke-width="1.100" fill="none"/></svg>
<svg style="left:1473px;top:638px" width="4" height="12" viewBox="0 0 4 12"><rect x="1" y="0.5" width="2" height="2" fill="#c4c4c4"/><rect x="1" y="4.500" width="2" height="2" fill="#c4c4c4"/><rect x="1" y="8.500" width="2" height="2" fill="#c4c4c4"/></svg>
<div class="abs" style="left:877px;top:653px;width:611px;height:20px;background:#3c3c3c;"></div>
<div class="abs" style="left:877px;top:673px;width:611px;height:1px;background:#2a2a2a;"></div>
<svg style="left:884px;top:657px" width="12" height="12" viewBox="0 0 12 12"><path d="M6 0.500V11.500M0.500 6H11.500" stroke="#c4c4c4" stroke-width="1.500"/></svg>
<div class="arr s" style="left:900px;top:661px"></div>
<div class="in" style="left:1022px;top:656px;width:319px;height:15px"></div>
<svg style="left:1026px;top:659px" width="9" height="9" viewBox="0 0 9 9"><circle cx="3.500" cy="3.700" r="2.600" stroke="#c4c4c4" stroke-width="1.100" fill="none"/><path d="M5.400 5.600L7.500 7.800" stroke="#c4c4c4" stroke-width="1.200"/></svg>
<div class="abs" style="left:1322px;top:657px;width:1px;height:13px;background:#3a3a3a;"></div>
<svg style="left:1325px;top:657px" width="13" height="13" viewBox="0 0 13 13"><path d="M3.500 0.700H12.300V9.500H9.500M0.700 3.500H9.500V12.300H0.700Z" stroke="#c4c4c4" stroke-width="1.100" fill="none"/><path d="M3 10L7.300 5.700M4.500 5.500H7.500V8.500" stroke="#c4c4c4" stroke-width="1.100" fill="none"/></svg>
<div class="abs" style="left:1342px;top:653px;width:1px;height:20px;background:#2c2c2c;"></div>
<div class="abs" style="left:1368px;top:653px;width:1px;height:20px;background:#2c2c2c;"></div>
<div class="abs" style="left:1394px;top:653px;width:1px;height:20px;background:#2c2c2c;"></div>
<div class="abs" style="left:1420px;top:653px;width:1px;height:20px;background:#2c2c2c;"></div>
<div class="abs" style="left:1446px;top:653px;width:1px;height:20px;background:#2c2c2c;"></div>
<svg style="left:1348px;top:656px" width="14" height="14" viewBox="0 0 14 14"><circle cx="4.500" cy="9.500" r="3.500" fill="#c4c4c4"/><path d="M3 1H8V5H3Z" fill="#c4c4c4"/><path d="M10.500 3L13.500 10H7.500Z" fill="#c4c4c4"/></svg>
<svg style="left:1374px;top:657px" width="13" height="12" viewBox="0 0 13 12"><path d="M5.500 0.800H11.500V6.800L6 11.500L0.800 6Z" fill="#c4c4c4" transform="rotate(8 6 6)"/><circle cx="9.300" cy="3.300" r="1" fill="#3c3c3c"/></svg>
<svg style="left:1399px;top:656px" width="14" height="14" viewBox="0 0 14 14"><circle cx="7" cy="7" r="6.500" fill="#d8d8d8"/><path d="M7 3V8.200" stroke="#3c3c3c" stroke-width="1.800"/><circle cx="7" cy="10.500" r="1.100" fill="#3c3c3c"/></svg>
<svg style="left:1426px;top:657px" width="13" height="12" viewBox="0 0 13 12"><path d="M6.500 0.500L8.300 4.500L12.500 4.900L9.300 7.700L10.300 11.800L6.500 9.600L2.700 11.800L3.700 7.700L0.500 4.900L4.700 4.500Z" fill="#8a8a8a"/></svg>
<svg style="left:1452px;top:657px" width="17" height="12" viewBox="0 0 17 12"><path d="M1 6C3.500 2 12.500 2 15 6C12.500 10 3.500 10 1 6Z" stroke="#c4c4c4" stroke-width="1.200" fill="none"/><circle cx="8" cy="6" r="1.800" stroke="#c4c4c4" stroke-width="1.100" fill="none"/><path d="M13 0.500L3 11.500" stroke="#c4c4c4" stroke-width="1.300"/></svg>
<div class="t" style="left:1468px;top:656px;">20</div>
<div class="abs" style="left:1085px;top:673px;width:1px;height:345px;background:#232323;"></div>
<svg style="left:881px;top:679px" width="9" height="8" viewBox="0 0 9 8"><path d="M0.300 0.500H8.700L4.500 7.500Z" fill="#6e6e6e"/></svg>
<svg style="left:895px;top:676px" width="13" height="12" viewBox="0 0 13 12"><path d="M6.500 0.500L8.300 4.500L12.500 4.900L9.300 7.700L10.300 11.800L6.500 9.600L2.700 11.800L3.700 7.700L0.500 4.900L4.700 4.500Z" fill="#c4c4c4"/></svg>
<div class="t b" style="left:912px;top:674px;">Favorites</div>
<svg style="left:909px;top:692px" width="13" height="13" viewBox="0 0 13 13"><circle cx="5.200" cy="5.200" r="4.200" stroke="#c4c4c4" stroke-width="1.100" fill="none"/><path d="M8.300 8.300L12.300 12.300" stroke="#c4c4c4" stroke-width="1.300"/></svg>
<div class="t" style="left:925px;top:690px;">All Materials</div>
<svg style="left:909px;top:708px" width="13" height="13" viewBox="0 0 13 13"><circle cx="5.200" cy="5.200" r="4.200" stroke="#c4c4c4" stroke-width="1.100" fill="none"/><path d="M8.300 8.300L12.300 12.300" stroke="#c4c4c4" stroke-width="1.300"/></svg>
<div class="t" style="left:925px;top:706px;">All Models</div>
<svg style="left:909px;top:724px" width="13" height="13" viewBox="0 0 13 13"><circle cx="5.200" cy="5.200" r="4.200" stroke="#c4c4c4" stroke-width="1.100" fill="none"/><path d="M8.300 8.300L12.300 12.300" stroke="#c4c4c4" stroke-width="1.300"/></svg>
<div class="t" style="left:925px;top:722px;">All Prefabs</div>
<svg style="left:881px;top:758px" width="9" height="8" viewBox="0 0 9 8"><path d="M0.300 0.500H8.700L4.500 7.500Z" fill="#6e6e6e"/></svg>
<svg style="left:895px;top:756px" width="14" height="11" viewBox="0 0 14 11"><path d="M0.500 10V1.300a0.800 0.800 0 0 1 0.800-0.800H4.500L5.800 2H10.500a0.800 0.800 0 0 1 0.800 0.800V4" stroke="#c4c4c4" stroke-width="1" fill="none"/><path d="M0.600 10.500L3 4.300H13.600L11.200 10.500Z" fill="#c4c4c4"/></svg>
<div class="t b" style="left:912px;top:753px;">Assets</div>
<svg style="left:909px;top:772px" width="13" height="11" viewBox="0 0 13 11"><path d="M0.500 1.300a0.800 0.800 0 0 1 0.800-0.800H4.700L6 2H11.700a0.800 0.800 0 0 1 0.800 0.800V9.700a0.800 0.800 0 0 1-0.800 0.800H1.300a0.800 0.800 0 0 1-0.800-0.800Z" fill="#c4c4c4"/></svg>
<div class="t" style="left:925px;top:769px;">Materials</div>
<svg style="left:895px;top:790px" width="9" height="8" viewBox="0 0 9 8"><path d="M0.300 0.500H8.700L4.500 7.500Z" fill="#6e6e6e"/></svg>
<svg style="left:909px;top:788px" width="14" height="11" viewBox="0 0 14 11"><path d="M0.500 10V1.300a0.800 0.800 0 0 1 0.800-0.800H4.500L5.800 2H10.500a0.800 0.800 0 0 1 0.800 0.800V4" stroke="#c4c4c4" stroke-width="1" fill="none"/><path d="M0.600 10.500L3 4.300H13.600L11.200 10.500Z" fill="#c4c4c4"/></svg>
<div class="t" style="left:925px;top:785px;">Samples</div>
<svg style="left:909px;top:806px" width="9" height="8" viewBox="0 0 9 8"><path d="M0.300 0.500H8.700L4.500 7.500Z" fill="#6e6e6e"/></svg>
<svg style="left:923px;top:804px" width="14" height="11" viewBox="0 0 14 11"><path d="M0.500 10V1.300a0.800 0.800 0 0 1 0.800-0.800H4.500L5.800 2H10.500a0.800 0.800 0 0 1 0.800 0.800V4" stroke="#c4c4c4" stroke-width="1" fill="none"/><path d="M0.600 10.500L3 4.300H13.600L11.200 10.500Z" fill="#c4c4c4"/></svg>
<div class="t" style="left:939px;top:801px;">ProBuilder</div>
<svg style="left:923px;top:822px" width="9" height="8" viewBox="0 0 9 8"><path d="M0.300 0.500H8.700L4.500 7.500Z" fill="#6e6e6e"/></svg>
<svg style="left:937px;top:820px" width="14" height="11" viewBox="0 0 14 11"><path d="M0.500 10V1.300a0.800 0.800 0 0 1 0.800-0.800H4.500L5.800 2H10.500a0.800 0.800 0 0 1 0.800 0.800V4" stroke="#c4c4c4" stroke-width="1" fill="none"/><path d="M0.600 10.500L3 4.300H13.600L11.200 10.500Z" fill="#c4c4c4"/></svg>
<div class="t" style="left:953px;top:817px;">5.0.7</div>
<svg style="left:937px;top:838px" width="9" height="8" viewBox="0 0 9 8"><path d="M0.300 0.500H8.700L4.500 7.500Z" fill="#6e6e6e"/></svg>
<svg style="left:951px;top:836px" width="14" height="11" viewBox="0 0 14 11"><path d="M0.500 10V1.300a0.800 0.800 0 0 1 0.800-0.800H4.500L5.800 2H10.500a0.800 0.800 0 0 1 0.800 0.800V4" stroke="#c4c4c4" stroke-width="1" fill="none"/><path d="M0.600 10.500L3 4.300H13.600L11.200 10.500Z" fill="#c4c4c4"/></svg>
<div class="t" style="left:967px;top:833px;width:118px;overflow:hidden;letter-spacing:.2px;">Universal Render Pip</div>
<svg style="left:965px;top:852px" width="13" height="11" viewBox="0 0 13 11"><path d="M0.500 1.300a0.800 0.800 0 0 1 0.800-0.800H4.700L6 2H11.700a0.800 0.800 0 0 1 0.800 0.800V9.700a0.800 0.800 0 0 1-0.800 0.800H1.300a0.800 0.800 0 0 1-0.800-0.800Z" fill="#c4c4c4"/></svg>
<div class="t" style="left:981px;top:849px;">Material</div>
<svg style="left:965px;top:868px" width="13" height="11" viewBox="0 0 13 11"><path d="M0.500 1.300a0.800 0.800 0 0 1 0.800-0.800H4.700L6 2H11.700a0.800 0.800 0 0 1 0.800 0.800V9.700a0.800 0.800 0 0 1-0.800 0.800H1.300a0.800 0.800 0 0 1-0.800-0.800Z" fill="#c4c4c4"/></svg>
<div class="t" style="left:981px;top:865px;">Shader</div>
<svg style="left:909px;top:884px" width="13" height="11" viewBox="0 0 13 11"><path d="M0.500 1.300a0.800 0.800 0 0 1 0.800-0.800H4.700L6 2H11.700a0.800 0.800 0 0 1 0.800 0.800V9.700a0.800 0.800 0 0 1-0.800 0.800H1.300a0.800 0.800 0 0 1-0.800-0.800Z" fill="#c4c4c4"/></svg>
<div class="t" style="left:925px;top:881px;">Scenes</div>
<div class="abs" style="left:877px;top:897px;width:208px;height:16px;background:#4d4d4d;"></div>
<svg style="left:909px;top:900px" width="13" height="11" viewBox="0 0 13 11"><path d="M0.500 1.300a0.800 0.800 0 0 1 0.800-0.800H4.700L6 2H11.700a0.800 0.800 0 0 1 0.800 0.800V9.700a0.800 0.800 0 0 1-0.800 0.800H1.300a0.800 0.800 0 0 1-0.800-0.800Z" fill="#c4c4c4"/></svg>
<div class="t" style="left:925px;top:897px;">Scripts</div>
<svg style="left:882px;top:917px" width="8" height="9" viewBox="0 0 8 9"><path d="M0.500 0.300V8.700L7.500 4.500Z" fill="#6e6e6e"/></svg>
<svg style="left:895px;top:916px" width="13" height="11" viewBox="0 0 13 11"><path d="M0.500 1.300a0.800 0.800 0 0 1 0.800-0.800H4.700L6 2H11.700a0.800 0.800 0 0 1 0.800 0.800V9.700a0.800 0.800 0 0 1-0.800 0.800H1.300a0.800 0.800 0 0 1-0.800-0.800Z" fill="#c4c4c4"/></svg>
<div class="t b" style="left:912px;top:913px;">Packages</div>
<div class="abs" style="left:1086px;top:673px;width:402px;height:20px;background:#3c3c3c;"></div>
<div class="abs" style="left:1086px;top:693px;width:402px;height:1px;background:#2f2f2f;"></div>
<div class="t" style="left:1090px;top:677px;;color:#b0b0b0">Assets</div>
<svg style="left:1135px;top:679px" width="6" height="10" viewBox="0 0 6 10"><path d="M1 1L5 5L1 9" stroke="#b0b0b0" stroke-width="1.200" fill="none"/></svg>
<div class="t b" style="left:1146px;top:677px;">Scripts</div>
<svg style="left:1104px;top:696px" width="12" height="14" viewBox="0 0 12 14"><path d="M0.500 0.500H8.500L11.500 3.500V13.500H0.500Z" fill="#f4f4f4"/><path d="M4.300 4V11M7.300 4V11M2.500 6H9.500M2.500 9H9.500" stroke="#2f8f3f" stroke-width="1.200"/></svg>
<div class="t" style="left:1120px;top:696px;">PlayerManager</div>
<div class="abs" style="left:1086px;top:997px;width:402px;height:1px;background:#2a2a2a;"></div>
<div class="abs" style="left:1086px;top:998px;width:402px;height:20px;background:#3c3c3c;"></div>
<div class="abs" style="left:1421px;top:1007px;width:50px;height:1px;background:#5e5e5e;"></div>
<div class="abs" style="left:1417px;top:1003px;width:9px;height:9px;border-radius:5px;background:#999"></div>
<!-- inspector -->
<div class="pn" style="left:1490px;top:92px;width:430px;height:926px"></div>
<div class="tabbar" style="left:1490px;top:73px;width:430px;border-radius:3px 0 0 0"></div>
<div class="tab" style="left:1490px;top:73px;width:95px;border-top:2px solid #3a79bb"></div>
<svg style="left:1498px;top:77px" width="11" height="11" viewBox="0 0 11 11"><circle cx="5.500" cy="5.500" r="5.200" fill="#c4c4c4"/><path d="M5.500 4.800V8.500" stroke="#3c3c3c" stroke-width="1.500"/><circle cx="5.500" cy="2.900" r="0.900" fill="#3c3c3c"/></svg>
<div class="t" style="left:1514px;top:76px;">Inspector</div>
<svg style="left:1884px;top:77px" width="10" height="11" viewBox="0 0 10 11"><rect x="1" y="5.500" width="8" height="5" rx="0.800" stroke="#c4c4c4" stroke-width="1.100" fill="none"/><path d="M2.800 5.500V3.300a2.300 2.300 0 0 1 4.600 0" stroke="#c4c4c4" stroke-width="1.100" fill="none"/></svg>
<svg style="left:1904px;top:77px" width="4" height="12" viewBox="0 0 4 12"><rect x="1" y="0.5" width="2" height="2" fill="#c4c4c4"/><rect x="1" y="4.500" width="2" height="2" fill="#c4c4c4"/><rect x="1" y="8.500" width="2" height="2" fill="#c4c4c4"/></svg>
<div class="abs" style="left:1907px;top:92px;width:13px;height:926px;background:#353535;"></div>
<div class="abs" style="left:1907px;top:92px;width:1px;height:926px;background:#2c2c2c;"></div>
<div class="abs" style="left:1909px;top:108px;width:10px;height:858px;background:#5f5f5f;border-radius:5px"></div>
<svg style="left:1909.500px;top:97px" width="9" height="6" viewBox="0 0 9 6"><path d="M0.500 5.500H8.500L4.500 0.500Z" fill="#c4c4c4"/></svg>
<svg style="left:1909.500px;top:1007.500px" width="9" height="6" viewBox="0 0 9 6"><path d="M0.500 0.500H8.500L4.500 5.500Z" fill="#c4c4c4"/></svg>
<svg style="left:1497px;top:102.500px" width="20.500" height="21.500" viewBox="0 0 24 25"><path d="M12 1.500L22 6.800V18.200L12 23.500L2 18.200V6.800Z M2 6.800L12 12.100L22 6.800M12 12.100V23.500" stroke="#c4c4c4" stroke-width="1.600" fill="none" stroke-linejoin="round"/></svg>
<div class="arr s" style="left:1517px;top:123px;border-left-width:3px;border-right-width:3px;border-top-width:3.500px"></div>
<div class="cb" style="left:1538px;top:103px"></div><svg style="left:1540px;top:106px" width="10" height="8" viewBox="0 0 10 8"><path d="M1 4.200L3.700 6.800L9 1" stroke="#e4e4e4" stroke-width="1.500" fill="none"/></svg>
<div class="in" style="left:1558px;top:101px;width:269px;height:18px"></div>
<div class="t b" style="left:1561px;top:103px;color:#d2d2d2">Network Manager</div>
<div class="cb" style="left:1829px;top:103px"></div>
<div class="t" style="left:1847px;top:103px;">Static</div>
<div class="arr s" style="left:1893px;top:108px"></div>
<div class="t" style="left:1530px;top:127px;">Tag</div>
<div class="dd" style="left:1558px;top:125px;width:152px;height:18px"></div>
<div class="t" style="left:1561px;top:127px;">Untagged</div>
<div class="arr s" style="left:1696px;top:132px"></div>
<div class="t" style="left:1723px;top:127px;">Layer</div>
<div class="dd" style="left:1762px;top:125px;width:141px;height:18px"></div>
<div class="t" style="left:1766px;top:127px;">Default</div>
<div class="arr s" style="left:1889px;top:132px"></div>
<div class="abs" style="left:1490px;top:151px;width:417px;height:1px;background:#1a1a1a;"></div>
<div class="abs" style="left:1490px;top:152px;width:417px;height:21px;background:#3e3e3e;"></div>
<svg style="left:1496px;top:159px" width="9" height="8" viewBox="0 0 9 8"><path d="M0.300 0.500H8.700L4.500 7.500Z" fill="#6e6e6e"/></svg>
<svg style="left:1511px;top:155px" width="14" height="14" viewBox="0 0 14 14"><path d="M7 6V1.500" stroke="#a6e84e" stroke-width="2.200" stroke-linecap="round"/><path d="M5.600 8.600L2 11" stroke="#4fc0f8" stroke-width="2.200" stroke-linecap="round"/><path d="M8.400 8.600L12 11" stroke="#f2643c" stroke-width="2.200" stroke-linecap="round"/></svg>
<div class="t b" style="left:1550px;top:155px;color:#d2d2d2">Transform</div>
<svg style="left:1848px;top:157px" width="11" height="11" viewBox="0 0 11 11"><circle cx="5.500" cy="5.500" r="5.300" fill="#c4c4c4"/><path d="M3.800 4.300a1.700 1.700 0 1 1 2.600 1.500c-0.600 0.400-0.900 0.700-0.900 1.400" stroke="#3e3e3e" stroke-width="1.300" fill="none"/><circle cx="5.500" cy="8.700" r="0.800" fill="#3e3e3e"/></svg>
<svg style="left:1868px;top:157px" width="12" height="11" viewBox="0 0 12 11"><path d="M0.500 3H7M9.500 3H11.500M0.500 8H2.500M5 8H11.500M8 0.800V5.200M3.700 5.800V10.200" stroke="#c4c4c4" stroke-width="1.200"/></svg>
<svg style="left:1892px;top:156px" width="4" height="12" viewBox="0 0 4 12"><rect x="1" y="0.5" width="2" height="2" fill="#c4c4c4"/><rect x="1" y="4.500" width="2" height="2" fill="#c4c4c4"/><rect x="1" y="8.500" width="2" height="2" fill="#c4c4c4"/></svg>
<div class="t" style="left:1509px;top:179px;">Position</div>
<div class="t" style="left:1659px;top:179px;">X</div>
<div class="in" style="left:1674px;top:177px;width:63px"></div>
<div class="t" style="left:1677px;top:179px;">0</div>
<div class="t" style="left:1742px;top:179px;">Y</div>
<div class="in" style="left:1757px;top:177px;width:63px"></div>
<div class="t" style="left:1760px;top:179px;">-1</div>
<div class="t" style="left:1825px;top:179px;">Z</div>
<div class="in" style="left:1840px;top:177px;width:63px"></div>
<div class="t" style="left:1843px;top:179px;">0</div>
<div class="t" style="left:1509px;top:199px;">Rotation</div>
<div class="t" style="left:1659px;top:199px;">X</div>
<div class="in" style="left:1674px;top:197px;width:63px"></div>
<div class="t" style="left:1677px;top:199px;">0</div>
<div class="t" style="left:1742px;top:199px;">Y</div>
<div class="in" style="left:1757px;top:197px;width:63px"></div>
<div class="t" style="left:1760px;top:199px;">0</div>
<div class="t" style="left:1825px;top:199px;">Z</div>
<div class="in" style="left:1840px;top:197px;width:63px"></div>
<div class="t" style="left:1843px;top:199px;">0</div>
<div class="t" style="left:1509px;top:219px;">Scale</div>
<div class="t" style="left:1659px;top:219px;">X</div>
<div class="in" style="left:1674px;top:217px;width:63px"></div>
<div class="t" style="left:1677px;top:219px;">1</div>
<div class="t" style="left:1742px;top:219px;">Y</div>
<div class="in" style="left:1757px;top:217px;width:63px"></div>
<div class="t" style="left:1760px;top:219px;">1</div>
<div class="t" style="left:1825px;top:219px;">Z</div>
<div class="in" style="left:1840px;top:217px;width:63px"></div>
<div class="t" style="left:1843px;top:219px;">1</div>
<svg style="left:1636px;top:220px" width="13" height="11" viewBox="0 0 13 11"><path d="M5 3H3.500a2.500 2.500 0 0 0 0 5H5M8 3H9.500a2.500 2.500 0 0 1 0 5H8M1 0.500L12 10.500" stroke="#c4c4c4" stroke-width="1.100" fill="none"/></svg>
<div class="abs" style="left:1490px;top:243px;width:417px;height:1px;background:#1a1a1a;"></div>
<div class="abs" style="left:1490px;top:244px;width:417px;height:22px;background:#3e3e3e;"></div>
<svg style="left:1496px;top:252px" width="9" height="8" viewBox="0 0 9 8"><path d="M0.300 0.500H8.700L4.500 7.500Z" fill="#6e6e6e"/></svg>
<svg style="left:1512px;top:248px" width="12" height="14" viewBox="0 0 12 14"><path d="M0.500 0.500H8.500L11.500 3.500V13.500H0.500Z" fill="#f4f4f4"/><path d="M4.300 4V11M7.300 4V11M2.500 6H9.500M2.500 9H9.500" stroke="#2f8f3f" stroke-width="1.200"/></svg>
<div class="cb" style="left:1530px;top:248px"></div><svg style="left:1532px;top:251px" width="10" height="8" viewBox="0 0 10 8"><path d="M1 4.200L3.700 6.800L9 1" stroke="#e4e4e4" stroke-width="1.500" fill="none"/></svg>
<div class="t b" style="left:1550px;top:248px;color:#d2d2d2">Network Manager</div>
<svg style="left:1848px;top:250px" width="11" height="11" viewBox="0 0 11 11"><circle cx="5.500" cy="5.500" r="5.300" fill="#c4c4c4"/><path d="M3.800 4.300a1.700 1.700 0 1 1 2.600 1.500c-0.600 0.400-0.900 0.700-0.900 1.400" stroke="#3e3e3e" stroke-width="1.300" fill="none"/><circle cx="5.500" cy="8.700" r="0.800" fill="#3e3e3e"/></svg>
<svg style="left:1868px;top:250px" width="12" height="11" viewBox="0 0 12 11"><path d="M0.500 3H7M9.500 3H11.500M0.500 8H2.500M5 8H11.500M8 0.800V5.200M3.700 5.800V10.200" stroke="#c4c4c4" stroke-width="1.200"/></svg>
<svg style="left:1892px;top:249px" width="4" height="12" viewBox="0 0 4 12"><rect x="1" y="0.5" width="2" height="2" fill="#c4c4c4"/><rect x="1" y="4.500" width="2" height="2" fill="#c4c4c4"/><rect x="1" y="8.500" width="2" height="2" fill="#c4c4c4"/></svg>
<div class="abs" style="left:1509px;top:271px;width:394px;height:94px;background:#414141;border:1px solid #2a2a2a;border-radius:3px"></div>
<svg style="left:1521px;top:303px" width="28" height="31" viewBox="0 0 28 31"><circle cx="14" cy="13.500" r="13" fill="#f4f4f4"/><path d="M19 24L24 29.500L25 21Z" fill="#f4f4f4"/><path d="M14 6.500V15.500" stroke="#414141" stroke-width="3" stroke-linecap="round"/><circle cx="14" cy="20.300" r="1.900" fill="#414141"/></svg>
<div class="t" style="left:1564px;top:281.0px;">Access additional tools for</div>
<div class="t" style="left:1564px;top:295.5px;">multiplayer development by</div>
<div class="t" style="left:1564px;top:310.0px;">installing the Multiplayer Tools</div>
<div class="t" style="left:1564px;top:324.5px;">package in the Package</div>
<div class="t" style="left:1564px;top:339.0px;">Manager.</div>
<div class="abs" style="left:1749px;top:303px;width:90px;height:30px;background:#585858;border:1px solid #303030;border-radius:3px"></div>
<div class="t" style="left:1763px;top:310px;;color:#e0e0e0">Open Docs</div>
<div class="t" style="left:1849px;top:311px;;color:#5e93e0">Dismiss</div>
<div class="t" style="left:1509px;top:379px;;">Run In Background</div>
<div class="cb" style="left:1658px;top:379px"></div><svg style="left:1660px;top:382px" width="10" height="8" viewBox="0 0 10 8"><path d="M1 4.200L3.700 6.800L9 1" stroke="#e4e4e4" stroke-width="1.500" fill="none"/></svg>
<div class="t" style="left:1509px;top:399px;;">Log Level</div>
<div class="dd" style="left:1658px;top:397px;width:245px"></div>
<div class="t" style="left:1661px;top:398px;">Normal</div>
<div class="arr s" style="left:1889px;top:404px"></div>
<div class="t" style="left:1509px;top:427px;;">Player Prefab</div>
<div class="in" style="left:1658px;top:425px;width:245px"></div>
<div class="t" style="left:1661px;top:427px;;">None (Game Object)</div>
<div class="abs" style="left:1884px;top:426px;width:18px;height:16px;background:#373737;border-radius:0 3px 3px 0"></div>
<svg style="left:1888px;top:428px" width="11" height="11" viewBox="0 0 11 11"><circle cx="5.500" cy="5.500" r="4.800" stroke="#c4c4c4" stroke-width="1.100" fill="none"/><circle cx="5.500" cy="5.500" r="1.800" fill="#c4c4c4"/></svg>
<div class="abs" style="left:1509px;top:453px;width:394px;height:38px;background:#414141;border:1px solid #2a2a2a;border-radius:3px"></div>
<svg style="left:1512px;top:458px" width="28" height="26" viewBox="0 0 28 26"><path d="M14 1.500L27 24.500H1Z" fill="#ffc107" stroke="#ffc107" stroke-width="1.500" stroke-linejoin="round"/><path d="M14 8.500V17" stroke="#333" stroke-width="2.600" stroke-linecap="round"/><circle cx="14" cy="21" r="1.600" fill="#333"/></svg>
<div class="t" style="left:1545px;top:458px;font-size:10.5px;letter-spacing:.14px">You have no prefab list selected. You will have to add your prefabs</div>
<div class="t" style="left:1545px;top:470px;font-size:10.5px;letter-spacing:.14px">manually at runtime for netcode to work.</div>
<svg style="left:1497px;top:498px" width="8" height="9" viewBox="0 0 8 9"><path d="M0.500 0.300V8.700L7.500 4.500Z" fill="#6e6e6e"/></svg>
<div class="t b" style="left:1510px;top:495px;">Network Prefabs Lists</div>
<div class="in" style="left:1855px;top:493px;width:48px"></div>
<div class="t" style="left:1858px;top:495px;;">0</div>
<div class="t b" style="left:1509px;top:523px;">General</div>
<div class="t" style="left:1509px;top:543px;;">Protocol Version</div>
<div class="in" style="left:1658px;top:541px;width:245px"></div>
<div class="t" style="left:1661px;top:543px;;">0</div>
<div class="t" style="left:1509px;top:563px;;">Network Transport</div>
<div class="in" style="left:1658px;top:561px;width:245px"></div>
<div class="t" style="left:1661px;top:563px;;">None (Network Transport)</div>
<div class="abs" style="left:1884px;top:562px;width:18px;height:16px;background:#373737;border-radius:0 3px 3px 0"></div>
<svg style="left:1888px;top:564px" width="11" height="11" viewBox="0 0 11 11"><circle cx="5.500" cy="5.500" r="4.800" stroke="#c4c4c4" stroke-width="1.100" fill="none"/><circle cx="5.500" cy="5.500" r="1.800" fill="#c4c4c4"/></svg>
<div class="abs" style="left:1509px;top:582px;width:394px;height:37px;background:#414141;border:1px solid #2a2a2a;border-radius:3px"></div>
<svg style="left:1512px;top:587px" width="28" height="26" viewBox="0 0 28 26"><path d="M14 1.500L27 24.500H1Z" fill="#ffc107" stroke="#ffc107" stroke-width="1.500" stroke-linejoin="round"/><path d="M14 8.500V17" stroke="#333" stroke-width="2.600" stroke-linecap="round"/><circle cx="14" cy="21" r="1.600" fill="#333"/></svg>
<div class="t" style="left:1545px;top:587px;font-size:10.5px;letter-spacing:.14px">You have no transport selected. A transport is required for netcode to</div>
<div class="t" style="left:1545px;top:599px;font-size:10.5px;letter-spacing:.14px">work. Which one do you want?</div>
<div class="dd" style="left:1509px;top:621px;width:394px"></div>
<div class="t" style="left:1512px;top:622px;">Select transport...</div>
<div class="arr s" style="left:1889px;top:628px"></div>
<div class="t" style="left:1509px;top:643px;;">Tick Rate</div>
<div class="in" style="left:1658px;top:641px;width:245px"></div>
<div class="t" style="left:1661px;top:643px;;">30</div>
<div class="t b" style="left:1509px;top:663px;">Performance</div>
<div class="t" style="left:1509px;top:683px;;width:147px;overflow:hidden;">Ensure Network Variable Length Safety</div>
<div class="cb" style="left:1658px;top:683px"></div>
<div class="t b" style="left:1509px;top:703px;">Connection</div>
<div class="t" style="left:1509px;top:723px;;">Connection Approval</div>
<div class="cb" style="left:1658px;top:723px"></div>
<div class="t" style="left:1509px;top:743px;;color:#7c7c7c;width:147px;overflow:hidden;">Client Connection Buffer Timeout</div>
<div class="in" style="left:1658px;top:741px;width:245px"></div>
<div class="t" style="left:1661px;top:743px;;color:#7c7c7c;">10</div>
<div class="t b" style="left:1509px;top:763px;">Spawning</div>
<div class="t" style="left:1509px;top:783px;;">Force Same Prefabs</div>
<div class="cb" style="left:1658px;top:783px"></div><svg style="left:1660px;top:786px" width="10" height="8" viewBox="0 0 10 8"><path d="M1 4.200L3.700 6.800L9 1" stroke="#e4e4e4" stroke-width="1.500" fill="none"/></svg>
<div class="t" style="left:1509px;top:803px;;">Recycle Network Ids</div>
<div class="cb" style="left:1658px;top:803px"></div><svg style="left:1660px;top:806px" width="10" height="8" viewBox="0 0 10 8"><path d="M1 4.200L3.700 6.800L9 1" stroke="#e4e4e4" stroke-width="1.500" fill="none"/></svg>
<div class="t" style="left:1509px;top:823px;;">Network Id Recycle Delay</div>
<div class="in" style="left:1658px;top:821px;width:245px"></div>
<div class="t" style="left:1661px;top:823px;;">120</div>
<div class="t b" style="left:1509px;top:843px;">Bandwidth</div>
<div class="t" style="left:1509px;top:863px;;">Rpc Hash Size</div>
<div class="dd" style="left:1658px;top:861px;width:245px"></div>
<div class="t" style="left:1661px;top:862px;">Var Int Four Bytes</div>
<div class="arr s" style="left:1889px;top:868px"></div>
<div class="t b" style="left:1509px;top:883px;">Scene Management</div>
<div class="t" style="left:1509px;top:903px;;width:147px;overflow:hidden;">Enable Scene Management</div>
<div class="cb" style="left:1658px;top:903px"></div><svg style="left:1660px;top:906px" width="10" height="8" viewBox="0 0 10 8"><path d="M1 4.200L3.700 6.800L9 1" stroke="#e4e4e4" stroke-width="1.500" fill="none"/></svg>
<div class="t" style="left:1509px;top:923px;;">Load Scene Time Out</div>
<div class="in" style="left:1658px;top:921px;width:245px"></div>
<div class="t" style="left:1661px;top:923px;;">120</div>
<div class="abs" style="left:1509px;top:942px;width:394px;height:18px;background:#4b4b4b;border-radius:3px"></div>
<div class="t" style="left:1509px;top:943px;width:394px;text-align:center;;color:#8c8c8c">Start Host</div>
<div class="abs" style="left:1509px;top:963px;width:394px;height:18px;background:#4b4b4b;border-radius:3px"></div>
<div class="t" style="left:1509px;top:964px;width:394px;text-align:center;;color:#8c8c8c">Start Server</div>
<div class="abs" style="left:1509px;top:984px;width:394px;height:18px;background:#4b4b4b;border-radius:3px"></div>
<div class="t" style="left:1509px;top:985px;width:394px;text-align:center;;color:#8c8c8c">Start Client</div>
<div class="abs" style="left:1490px;top:1011px;width:417px;height:1px;background:#1f1f1f;"></div>
<div class="abs" style="left:1490px;top:1012px;width:417px;height:6px;background:#3c3c3c;"></div>
<svg style="left:1230px;top:320px" width="300" height="125" viewBox="1230 320 300 125"><path d="M1236 439L1508 331.500" stroke="#fff" stroke-width="2.200"/><path d="M1521 326.500L1499 326.800L1505.500 341.500Z" fill="#fff"/></svg>
<!-- status bar -->
<div class="abs" style="left:0;top:1020px;width:1920px;height:20px;background:#191919"></div>
<div class="abs" style="left:1814px;top:1021px;width:1px;height:18px;background:#232323"></div><div class="abs" style="left:1840px;top:1021px;width:1px;height:18px;background:#232323"></div><div class="abs" style="left:1866px;top:1021px;width:1px;height:18px;background:#232323"></div><div class="abs" style="left:1893px;top:1021px;width:1px;height:18px;background:#232323"></div>
<svg style="left:1819px;top:1022px" width="16" height="16" viewBox="0 0 16 16"><ellipse cx="8" cy="9.500" rx="4.400" ry="5" fill="#b8b8b8"/><circle cx="8" cy="4" r="2.300" fill="#b8b8b8"/><path d="M1.500 6.500L4.500 8M14.500 6.500L11.500 8M1.200 13.800L4.500 11.500M14.800 13.800L11.500 11.500M5.200 1L6.500 3M10.800 1L9.500 3" stroke="#b8b8b8" stroke-width="1.200"/><path d="M2.400 0.800L15.400 14.300" stroke="#191919" stroke-width="1.500"/><path d="M1.500 1.500L14.500 15" stroke="#b8b8b8" stroke-width="1.200"/></svg>
<svg style="left:1845px;top:1022px" width="16" height="16" viewBox="0 0 16 16"><ellipse cx="8" cy="4.200" rx="5.800" ry="2.700" fill="#b8b8b8"/><path d="M2.200 6.800C2.200 9.600 13.800 9.600 13.800 6.800V9C13.800 11.800 2.200 11.800 2.200 9ZM2.200 11C2.200 13.800 13.800 13.800 13.800 11V12.800C13.800 15.600 2.200 15.600 2.200 12.800Z" fill="#b8b8b8"/><path d="M2.400 0.800L15.400 14.300" stroke="#191919" stroke-width="1.500"/><path d="M1.500 1.500L14.500 15" stroke="#b8b8b8" stroke-width="1.200"/></svg>
<svg style="left:1871px;top:1022px" width="16" height="16" viewBox="0 0 16 16"><path d="M2.300 7.500a5.800 5.800 0 0 1 10.500-2.800M13.700 8.500a5.800 5.800 0 0 1-10.500 2.800" stroke="#b8b8b8" stroke-width="1.700" fill="none"/><path d="M14.300 1.500V5.500H10.300ZM1.700 14.500V10.500H5.700Z" fill="#b8b8b8"/><circle cx="8" cy="8" r="2" fill="#b8b8b8"/><path d="M2.400 0.800L15.400 14.300" stroke="#191919" stroke-width="1.500"/><path d="M1.500 1.500L14.500 15" stroke="#b8b8b8" stroke-width="1.200"/></svg>
<svg style="left:1899px;top:1023px" width="14" height="14" viewBox="0 0 14 14"><circle cx="7" cy="7" r="6.200" stroke="#c4c4c4" stroke-width="1.100" fill="none"/><path d="M4 7.200L6.200 9.300L10 5" stroke="#c4c4c4" stroke-width="1.300" fill="none"/></svg>
<!-- taskbar -->
<div class="abs" style="left:0;top:1040px;width:1920px;height:40px;background:#1c1c1c"></div>
<svg style="left:16px;top:1052px" width="17" height="17" viewBox="0 0 17 17"><path d="M0 2.300L7 1.300V8H0ZM8 1.200L17 0V8H8ZM0 9H7V15.700L0 14.700ZM8 9H17V17L8 15.800Z" fill="#fff"/></svg>
<div class="abs" style="left:48px;top:1040px;width:288px;height:40px;background:#353535;border:1px solid #5a5a5a;border-bottom:none"></div>
<svg style="left:59px;top:1051px" width="18" height="18" viewBox="0 0 18 18"><circle cx="11" cy="7" r="5.300" stroke="#e8e8e8" stroke-width="1.300" fill="none"/><path d="M7.200 10.800L1.500 16.500" stroke="#e8e8e8" stroke-width="1.500"/></svg>
<div class="tk" style="left:88px;top:1051px;font-size:15px;line-height:18px;color:#e4e4e4;letter-spacing:-.100px">Escriu aquí per cercar</div>
<svg style="left:256px;top:1040px" width="80" height="40" viewBox="256 1040 80 40"><path d="M268 1065.500H326L336 1077V1080H257L257.500 1078Z" fill="#e9c9a2"/><path d="M257 1078.500H336V1080H257Z" fill="#d5b58c"/><path d="M270 1073.500L269.500 1059L281 1054.500L293 1051.500L296 1067.500L284 1070Z" fill="#3fa24c"/><path d="M269.500 1058L281 1053.500L292.500 1050.500L295 1065.500L283.500 1068.500L271 1072.500Z" fill="#f1f0f6"/><path d="M281 1053.500L283.500 1068.500" stroke="#c9c6d6" stroke-width="0.800"/><path d="M272 1060.500L279.500 1057.800M272.500 1063L280 1060.300M273 1065.500L280.500 1062.800M273.300 1068L281 1065.300M284 1056.500L290.500 1054.800M284.500 1059L291 1057.300M285 1061.500L288 1060.700" stroke="#b9b6c8" stroke-width="0.700"/><path d="M287.500 1060L295.500 1048.500L298.700 1050.700L290.500 1062Z" fill="#f4b63a"/><path d="M295.500 1048.500L297 1046.400L300.200 1048.600L298.700 1050.700Z" fill="#ee5a5a"/><path d="M287.500 1060L287 1063L290.500 1062Z" fill="#f0d9b0"/><path d="M312 1049V1047.500a3.600 3.600 0 0 1 7.200 0V1049" stroke="#2b6fe0" stroke-width="1.500" fill="none"/><path d="M306 1058a9.700 11 0 0 1 19.400 0V1070a3.500 3.500 0 0 1-3.500 3.500H309.500a3.500 3.500 0 0 1-3.500-3.500Z" fill="#1f6be8"/><path d="M308.500 1067a7.200 7.500 0 0 1 14.400 0V1070.500a2 2 0 0 1-2 2H310.500a2 2 0 0 1-2-2Z" fill="#3a8cf8"/><path d="M309 1070.200H322.500" stroke="#c77af0" stroke-width="1.300"/><path d="M307.500 1054a9 9 0 0 1 6-6" stroke="#5aa2ff" stroke-width="1" fill="none"/></svg>
<svg style="left:352px;top:1052px" width="16" height="16" viewBox="0 0 16 16"><circle cx="8" cy="8" r="6.300" stroke="#fff" stroke-width="2" fill="none"/></svg>
<svg style="left:399px;top:1052px" width="18" height="16" viewBox="0 0 18 16"><path d="M1 1.500H11M1 14.500H11M1.500 4.500H11.500V11.500H1.500Z M15 1.500V3M15 5V11M15 13V14.500M13.500 1.500H16.500M13.500 14.500H16.500" stroke="#fff" stroke-width="1.300" fill="none"/></svg>
<svg style="left:447px;top:1048px" width="24" height="24" viewBox="0 0 24 24"><rect x="0.300" y="0.300" width="23.400" height="23.400" rx="3" fill="#f37a26"/><path d="M5.500 7.500C5.500 5 8.800 4.600 10 6.500C11 7.800 13 7.800 14 6.500C15.200 4.600 18.500 5 18.500 7.500C18.500 9.300 17.300 10.200 17.300 12C17.300 13.800 18.500 14.700 18.500 16.500C18.500 19 15.200 19.400 14 17.500C13 16.200 11 16.200 10 17.500C8.800 19.400 5.500 19 5.500 16.500C5.500 14.700 6.700 13.800 6.700 12C6.700 10.200 5.500 9.300 5.500 7.500Z" fill="#fff"/><path d="M9 9.800C10.500 9.800 10.800 11 12 11C13.200 11 13.500 9.800 15 9.800C16.500 9.800 16.500 14.200 15 14.200C13.500 14.200 13.200 13 12 13C10.800 13 10.500 14.200 9 14.200C7.500 14.200 7.500 9.800 9 9.800Z" fill="#f37a26"/></svg>
<svg style="left:496px;top:1049px" width="24" height="22" viewBox="0 0 24 22"><path d="M1 2.500a1 1 0 0 1 1-1H8.500L10.500 3.500H22a1 1 0 0 1 1 1V19a1 1 0 0 1-1 1H2a1 1 0 0 1-1-1Z" fill="#f6c445"/><path d="M1 7H23V19a1 1 0 0 1-1 1H2a1 1 0 0 1-1-1Z" fill="#fbd969"/><path d="M7 13H17V20H14V16H10V20H7Z" fill="#3f8fe0"/></svg>
<svg style="left:545px;top:1048px" width="24" height="24" viewBox="0 0 24 24"><circle cx="12" cy="12" r="11.500" fill="#e6443a"/><path d="M12 12L2 6.300A11.500 11.500 0 0 0 9 23.100Z" fill="#2da94f"/><path d="M12 12L9 23.100A11.500 11.500 0 0 0 22 6.300Z" fill="#fbc116"/><path d="M12 12L2 6.300A11.500 11.500 0 0 1 22 6.300Z" fill="#e6443a"/><circle cx="12" cy="12" r="5.300" fill="#fff"/><circle cx="12" cy="12" r="4.200" fill="#4285f4"/></svg>
<svg style="left:594px;top:1048px" width="24" height="24" viewBox="0 0 24 24"><path d="M17.500 0.500L23.500 3.300V20.700L17.500 23.500L6.500 13.500L2.500 16.700L0.500 15.500V8.500L2.500 7.300L6.500 10.500Z" fill="#2489ca"/><path d="M17.500 0.500L23.500 3.300V20.700L17.500 23.500Z" fill="#35a6f0"/><path d="M17.500 7L11 12L17.500 17Z" fill="#1c1c1c"/><path d="M0.500 8.500L4 12L0.500 15.500Z" fill="#1c1c1c" opacity="0"/></svg>
<svg style="left:642px;top:1048px" width="28" height="26" viewBox="0 0 28 26"><circle cx="12" cy="12" r="11.500" fill="#e6443a"/><path d="M12 12L2 6.300A11.500 11.500 0 0 0 9 23.100Z" fill="#2da94f"/><path d="M12 12L9 23.100A11.500 11.500 0 0 0 22 6.300Z" fill="#fbc116"/><path d="M12 12L2 6.300A11.500 11.500 0 0 1 22 6.300Z" fill="#e6443a"/><circle cx="12" cy="12" r="5.300" fill="#fff"/><circle cx="12" cy="12" r="4.200" fill="#4285f4"/><circle cx="18" cy="18.500" r="6.500" fill="#e8dcd0"/><path d="M11.500 17C12 12 20 10 24.500 15L22 17C19 14 15 15 14 19Z" fill="#1a1a1a"/><path d="M15 20H22" stroke="#1a1a1a" stroke-width="1"/></svg>
<div class="abs" style="left:680px;top:1040px;width:46px;height:40px;background:#474747"></div><div class="abs" style="left:726px;top:1040px;width:3px;height:40px;background:#333"></div>
<svg style="left:692px;top:1048px" width="24" height="24" viewBox="0 0 24 24"><path d="M12 0.500L22 6.200V17.800L12 23.500L2 17.800V6.200Z" fill="#2a2a2a"/><path d="M12 3L19.500 7.200V16L12 20.200L4.500 16V7.200Z" fill="#f4f4f4"/><path d="M12 11.500V20.500M12 11.500L4.500 7.200M12 11.500L19.500 7.200" stroke="#2a2a2a" stroke-width="2.200"/><path d="M12 7L15.800 9.200V13.800L12 16L8.200 13.800V9.200Z" fill="#2a2a2a"/></svg>
<svg style="left:741px;top:1048px" width="24" height="24" viewBox="0 0 24 24"><rect x="1" y="1" width="22" height="22" fill="#0f1b4d" stroke="#8fb6f5" stroke-width="1.600"/><text x="4" y="16.500" font-family="Liberation Sans,sans-serif" font-weight="bold" font-size="11.500" fill="#9cc4ff">Ps</text></svg>
<svg style="left:790px;top:1048px" width="24" height="24" viewBox="0 0 24 24"><defs><linearGradient id="ph" x1="0" y1="0" x2="1" y2="1"><stop offset="0" stop-color="#1e8fe8"/><stop offset="1" stop-color="#7a6fe0"/></linearGradient></defs><rect x="1" y="1.500" width="22" height="21" rx="3" fill="url(#ph)"/><path d="M1 19L9 9L15 16L18 13L23 18V19.500a3 3 0 0 1-3 3H4a3 3 0 0 1-3-3Z" fill="#58c4f8"/><circle cx="17.500" cy="6.500" r="2" fill="#fff"/></svg>
<svg style="left:839px;top:1048px" width="24" height="24" viewBox="0 0 24 24"><path d="M17 0.500L23.500 3.500V20.500L17 23.500L5.500 14L2.500 16.500L0.500 15.500V8.500L2.500 7.500L5.500 10Z" fill="#8a5cc8"/><path d="M17 0.500L23.500 3.500V20.500L17 23.500Z" fill="#b58cf0"/><path d="M17 7.500L11.500 12L17 16.500Z" fill="#1c1c1c"/></svg>
<div class="abs" style="left:488px;top:1078px;width:39px;height:2px;background:#76b9ed"></div>
<div class="abs" style="left:635px;top:1078px;width:39px;height:2px;background:#76b9ed"></div>
<div class="abs" style="left:680px;top:1078px;width:46px;height:2px;background:#76b9ed"></div>
<div class="abs" style="left:733px;top:1078px;width:39px;height:2px;background:#76b9ed"></div>
<div class="abs" style="left:782px;top:1078px;width:39px;height:2px;background:#76b9ed"></div>
<div class="abs" style="left:831px;top:1078px;width:39px;height:2px;background:#76b9ed"></div>
<!-- tray -->
<svg style="left:1534px;top:1049px" width="22" height="22" viewBox="0 0 22 22"><defs><linearGradient id="sun" x1="0.300" y1="0" x2="0.700" y2="1"><stop offset="0" stop-color="#fbb823"/><stop offset="1" stop-color="#ee6c12"/></linearGradient></defs><circle cx="11" cy="11" r="10" fill="url(#sun)"/></svg>
<div class="tk" style="left:1566px;top:1051px;font-size:14.500px;line-height:18px;letter-spacing:-.5px">13°C</div>
<div class="tk" style="left:1603px;top:1051px;font-size:14.500px;line-height:18px;letter-spacing:-.52px">Soleado</div>
<svg style="left:1676px;top:1054px" width="14" height="10" viewBox="0 0 14 10"><path d="M1 8L7 2L13 8" stroke="#fff" stroke-width="1.400" fill="none"/></svg>
<svg style="left:1698px;top:1053px" width="18" height="13" viewBox="0 0 18 13"><rect x="4.500" y="3.500" width="11" height="7" stroke="#fff" stroke-width="1.100" fill="none"/><rect x="16" y="5.500" width="1.500" height="3" fill="#fff"/><rect x="6" y="5" width="8" height="4" fill="#fff"/><path d="M2.500 0.500V3M4.500 0.500V3M1 3H6V5.500L3.500 7V10" stroke="#fff" stroke-width="1" fill="none"/></svg>
<svg style="left:1725px;top:1052px" width="16" height="16" viewBox="0 0 16 16"><path d="M1.500 14.500A12 12 0 0 1 13.500 2.500" stroke="#8a8a8a" stroke-width="1.200" fill="none"/><path d="M5 14.500A8.500 8.500 0 0 1 13.500 6" stroke="#8a8a8a" stroke-width="1.200" fill="none"/><path d="M8.500 14.500A5 5 0 0 1 13.500 9.500" stroke="#8a8a8a" stroke-width="1.200" fill="none"/><circle cx="12.800" cy="13.800" r="1.500" fill="#fff"/></svg>
<svg style="left:1746px;top:1052px" width="18" height="16" viewBox="0 0 18 16"><path d="M1 5.500H4L8 2V14L4 10.500H1Z" stroke="#fff" stroke-width="1.100" fill="none"/><path d="M10.500 5.500a3.500 3.500 0 0 1 0 5M12.500 3.500a6.500 6.500 0 0 1 0 9" stroke="#fff" stroke-width="1.100" fill="none"/><path d="M14.500 1.500a9.500 9.500 0 0 1 0 13" stroke="#888" stroke-width="1" fill="none"/></svg>
<div class="tk" style="left:1774px;top:1051px;font-size:13.500px;line-height:18px;letter-spacing:-1.2px">CAT</div>
<div class="tk" style="left:1800px;top:1043px;width:70px;text-align:center;font-size:12.300px;line-height:16px">11:08</div>
<div class="tk" style="left:1800px;top:1061px;width:70px;text-align:center;font-size:12.300px;line-height:16px">20/2/2024</div>
<svg style="left:1878px;top:1051px" width="18" height="18" viewBox="0 0 18 18"><path d="M1 1H17V13.500H11.500L9 16.500L6.500 13.500H1Z" fill="#fff"/><path d="M4 4.500H14M4 7.300H14M4 10H11" stroke="#1c1c1c" stroke-width="1.100"/></svg>
<div class="abs" style="left:1915px;top:1044px;width:1px;height:36px;background:#8a8a8a"></div>
</body></html>
